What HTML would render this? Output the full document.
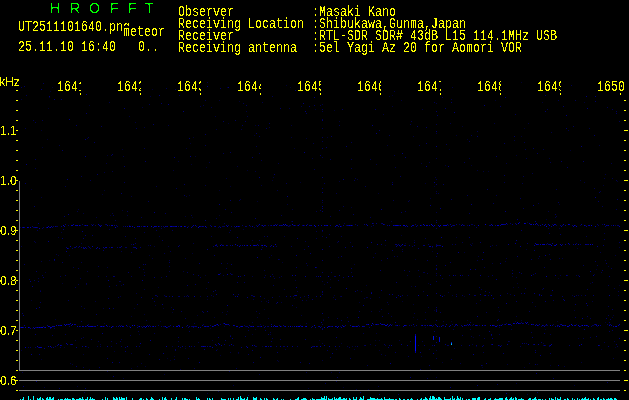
<!DOCTYPE html>
<html><head><meta charset="utf-8"><title>HROFFT</title>
<style>
html,body{margin:0;padding:0;background:#000;}
body{width:629px;height:400px;overflow:hidden;position:relative;}
.m{position:absolute;white-space:pre;color:#ffff00;font-family:"Liberation Mono",monospace;font-size:14.4px;line-height:16px;transform-origin:0 0;transform:scaleX(0.8102);filter:url(#thr);}
.s{position:absolute;white-space:pre;font-family:"Liberation Sans",sans-serif;filter:url(#thr);}
.s span{display:inline-block;}
.t{position:absolute;background:#ffff00;height:1px;}
.g{position:absolute;background:#808080;}
.k{position:absolute;background:#000;}
svg{position:absolute;left:0;top:0;}
</style></head><body>
<svg width="0" height="0" style="position:absolute"><defs><filter id="thr" x="0" y="0" width="100%" height="100%" color-interpolation-filters="sRGB"><feComponentTransfer><feFuncA type="discrete" tableValues="0 1"/></feComponentTransfer></filter></defs></svg>
<div class="s" style="left:49.9px;top:-0.5px;font-size:14px;line-height:16px;color:#00ff00"><span style="width:20px">H </span><span style="width:19px">R </span><span style="width:21px">O </span><span style="width:18px">F </span><span style="width:17px">F </span><span>T</span></div>
<div class="m" style="left:18.3px;top:19px">UT2511101640.png</div>
<div class="k" style="left:123px;top:25.5px;width:45px;height:13px"></div>
<div class="m" style="left:123.4px;top:24px">meteor</div>
<div class="m" style="left:18.3px;top:39px">25.11.10 16:40</div>
<div class="m" style="left:138.4px;top:39px">0..</div>
<div class="m" style="left:178.2px;top:4px">Observer</div>
<div class="m" style="left:312px;top:4px">:Masaki Kano</div>
<div class="m" style="left:178.2px;top:16px">Receiving Location</div>
<div class="m" style="left:312px;top:16px">:Shibukawa,Gunma,Japan</div>
<div class="m" style="left:178.2px;top:28px">Receiver</div>
<div class="m" style="left:312px;top:28px">:RTL-SDR SDR# 43dB L15 114.1MHz USB</div>
<div class="m" style="left:178.2px;top:40px">Receiving antenna</div>
<div class="m" style="left:312px;top:40px">:5el Yagi Az 20 for Aomori VOR</div>
<div class="s" style="left:-0.8px;top:75px;font-size:12px;line-height:14px;color:#ffff00">kHz</div>
<div class="m" style="left:57px;top:79px">1641</div>
<div class="k" style="left:81px;top:76px;width:12px;height:18px"></div>
<div class="t" style="left:80px;top:93px;width:1px;height:2px"></div>
<div class="m" style="left:117px;top:79px">1642</div>
<div class="k" style="left:141px;top:76px;width:12px;height:18px"></div>
<div class="t" style="left:140px;top:93px;width:1px;height:2px"></div>
<div class="m" style="left:177px;top:79px">1643</div>
<div class="k" style="left:201px;top:76px;width:12px;height:18px"></div>
<div class="t" style="left:200px;top:93px;width:1px;height:2px"></div>
<div class="m" style="left:237px;top:79px">1644</div>
<div class="k" style="left:261px;top:76px;width:12px;height:18px"></div>
<div class="t" style="left:260px;top:93px;width:1px;height:2px"></div>
<div class="m" style="left:297px;top:79px">1645</div>
<div class="k" style="left:321px;top:76px;width:12px;height:18px"></div>
<div class="t" style="left:320px;top:93px;width:1px;height:2px"></div>
<div class="m" style="left:357px;top:79px">1646</div>
<div class="k" style="left:381px;top:76px;width:12px;height:18px"></div>
<div class="t" style="left:380px;top:93px;width:1px;height:2px"></div>
<div class="m" style="left:417px;top:79px">1647</div>
<div class="k" style="left:441px;top:76px;width:12px;height:18px"></div>
<div class="t" style="left:440px;top:93px;width:1px;height:2px"></div>
<div class="m" style="left:477px;top:79px">1648</div>
<div class="k" style="left:501px;top:76px;width:12px;height:18px"></div>
<div class="t" style="left:500px;top:93px;width:1px;height:2px"></div>
<div class="m" style="left:537px;top:79px">1649</div>
<div class="k" style="left:561px;top:76px;width:12px;height:18px"></div>
<div class="t" style="left:560px;top:93px;width:1px;height:2px"></div>
<div class="m" style="left:597px;top:79px">1650</div>
<div class="t" style="left:620px;top:93px;width:1px;height:2px"></div>
<div class="s" style="left:0px;top:124px;font-size:12px;line-height:14px;color:#ffff00">1.1</div>
<div class="s" style="left:0px;top:174px;font-size:12px;line-height:14px;color:#ffff00">1.0</div>
<div class="s" style="left:0px;top:224px;font-size:12px;line-height:14px;color:#ffff00">0.9</div>
<div class="s" style="left:0px;top:274px;font-size:12px;line-height:14px;color:#ffff00">0.8</div>
<div class="s" style="left:0px;top:324px;font-size:12px;line-height:14px;color:#ffff00">0.7</div>
<div class="s" style="left:0px;top:374px;font-size:12px;line-height:14px;color:#ffff00">0.6</div>
<div class="t" style="left:16px;top:90px;width:2px"></div><div class="t" style="left:16px;top:100px;width:2px"></div><div class="t" style="left:624px;top:100px;width:2px"></div><div class="t" style="left:16px;top:110px;width:2px"></div><div class="t" style="left:624px;top:110px;width:2px"></div><div class="t" style="left:16px;top:120px;width:2px"></div><div class="t" style="left:624px;top:120px;width:2px"></div><div class="t" style="left:16px;top:130px;width:2px"></div><div class="t" style="left:624px;top:130px;width:4px"></div><div class="t" style="left:16px;top:140px;width:2px"></div><div class="t" style="left:624px;top:140px;width:2px"></div><div class="t" style="left:16px;top:150px;width:2px"></div><div class="t" style="left:624px;top:150px;width:2px"></div><div class="t" style="left:16px;top:160px;width:2px"></div><div class="t" style="left:624px;top:160px;width:2px"></div><div class="t" style="left:16px;top:170px;width:2px"></div><div class="t" style="left:624px;top:170px;width:2px"></div><div class="t" style="left:16px;top:180px;width:2px"></div><div class="t" style="left:624px;top:180px;width:4px"></div><div class="t" style="left:16px;top:190px;width:2px"></div><div class="t" style="left:624px;top:190px;width:2px"></div><div class="t" style="left:16px;top:200px;width:2px"></div><div class="t" style="left:624px;top:200px;width:2px"></div><div class="t" style="left:16px;top:210px;width:2px"></div><div class="t" style="left:624px;top:210px;width:2px"></div><div class="t" style="left:16px;top:220px;width:2px"></div><div class="t" style="left:624px;top:220px;width:2px"></div><div class="t" style="left:16px;top:230px;width:2px"></div><div class="t" style="left:624px;top:230px;width:4px"></div><div class="t" style="left:16px;top:240px;width:2px"></div><div class="t" style="left:624px;top:240px;width:2px"></div><div class="t" style="left:16px;top:250px;width:2px"></div><div class="t" style="left:624px;top:250px;width:2px"></div><div class="t" style="left:16px;top:260px;width:2px"></div><div class="t" style="left:624px;top:260px;width:2px"></div><div class="t" style="left:16px;top:270px;width:2px"></div><div class="t" style="left:624px;top:270px;width:2px"></div><div class="t" style="left:16px;top:280px;width:2px"></div><div class="t" style="left:624px;top:280px;width:4px"></div><div class="t" style="left:16px;top:290px;width:2px"></div><div class="t" style="left:624px;top:290px;width:2px"></div><div class="t" style="left:16px;top:300px;width:2px"></div><div class="t" style="left:624px;top:300px;width:2px"></div><div class="t" style="left:16px;top:310px;width:2px"></div><div class="t" style="left:624px;top:310px;width:2px"></div><div class="t" style="left:16px;top:320px;width:2px"></div><div class="t" style="left:624px;top:320px;width:2px"></div><div class="t" style="left:16px;top:330px;width:2px"></div><div class="t" style="left:624px;top:330px;width:4px"></div><div class="t" style="left:16px;top:340px;width:2px"></div><div class="t" style="left:624px;top:340px;width:2px"></div><div class="t" style="left:16px;top:350px;width:2px"></div><div class="t" style="left:624px;top:350px;width:2px"></div><div class="t" style="left:16px;top:360px;width:2px"></div><div class="t" style="left:624px;top:360px;width:2px"></div><div class="t" style="left:16px;top:370px;width:2px"></div><div class="t" style="left:624px;top:370px;width:2px"></div><div class="t" style="left:16px;top:380px;width:2px"></div><div class="t" style="left:624px;top:380px;width:4px"></div><div class="t" style="left:16px;top:390px;width:2px"></div><div class="t" style="left:624px;top:390px;width:2px"></div>
<div class="g" style="left:19px;top:181px;width:1px;height:190px"></div>
<div class="g" style="left:19px;top:370px;width:601px;height:1px"></div>
<div class="g" style="left:19px;top:380px;width:601px;height:1px"></div>
<div class="g" style="left:19px;top:390px;width:601px;height:1px"></div>
<svg width="629" height="400" viewBox="0 0 629 400" shape-rendering="crispEdges">
<rect x="207" y="82" width="1" height="1" fill="#000046"/>
<rect x="521" y="82" width="1" height="1" fill="#000032"/>
<rect x="43" y="83" width="1" height="1" fill="#00005a"/>
<rect x="286" y="85" width="1" height="1" fill="#000032"/>
<rect x="571" y="85" width="1" height="1" fill="#000050"/>
<rect x="24" y="86" width="1" height="1" fill="#000064"/>
<rect x="207" y="86" width="1" height="1" fill="#000078"/>
<rect x="21" y="87" width="1" height="1" fill="#00005a"/>
<rect x="52" y="87" width="1" height="1" fill="#000032"/>
<rect x="227" y="87" width="1" height="1" fill="#000032"/>
<rect x="228" y="87" width="1" height="1" fill="#000078"/>
<rect x="290" y="87" width="1" height="1" fill="#000032"/>
<rect x="452" y="87" width="1" height="1" fill="#000046"/>
<rect x="166" y="88" width="1" height="1" fill="#000050"/>
<rect x="220" y="88" width="1" height="1" fill="#000064"/>
<rect x="41" y="89" width="1" height="1" fill="#000078"/>
<rect x="152" y="89" width="1" height="1" fill="#000032"/>
<rect x="175" y="89" width="1" height="1" fill="#000050"/>
<rect x="295" y="90" width="1" height="1" fill="#000064"/>
<rect x="50" y="91" width="1" height="1" fill="#000032"/>
<rect x="394" y="91" width="1" height="1" fill="#000046"/>
<rect x="86" y="94" width="1" height="1" fill="#000078"/>
<rect x="26" y="95" width="1" height="1" fill="#000050"/>
<rect x="159" y="95" width="1" height="1" fill="#000078"/>
<rect x="179" y="95" width="1" height="1" fill="#000046"/>
<rect x="392" y="95" width="1" height="1" fill="#000032"/>
<rect x="545" y="95" width="1" height="1" fill="#00005a"/>
<rect x="49" y="96" width="1" height="1" fill="#000078"/>
<rect x="150" y="96" width="1" height="1" fill="#00003c"/>
<rect x="272" y="96" width="1" height="1" fill="#000050"/>
<rect x="389" y="96" width="1" height="1" fill="#000032"/>
<rect x="586" y="96" width="1" height="1" fill="#000078"/>
<rect x="595" y="96" width="1" height="1" fill="#000078"/>
<rect x="49" y="97" width="1" height="1" fill="#000032"/>
<rect x="314" y="97" width="1" height="1" fill="#000078"/>
<rect x="442" y="97" width="1" height="1" fill="#000050"/>
<rect x="505" y="97" width="1" height="1" fill="#000064"/>
<rect x="21" y="99" width="1" height="1" fill="#00003c"/>
<rect x="54" y="99" width="1" height="1" fill="#000078"/>
<rect x="61" y="99" width="1" height="1" fill="#000078"/>
<rect x="451" y="99" width="1" height="1" fill="#000046"/>
<rect x="205" y="100" width="1" height="1" fill="#000050"/>
<rect x="219" y="100" width="1" height="1" fill="#00003c"/>
<rect x="401" y="100" width="1" height="1" fill="#00003c"/>
<rect x="495" y="100" width="1" height="1" fill="#000032"/>
<rect x="558" y="100" width="1" height="1" fill="#000050"/>
<rect x="575" y="100" width="1" height="1" fill="#00005a"/>
<rect x="239" y="101" width="1" height="1" fill="#000032"/>
<rect x="595" y="101" width="1" height="1" fill="#000064"/>
<rect x="109" y="102" width="1" height="1" fill="#000050"/>
<rect x="262" y="102" width="1" height="1" fill="#000046"/>
<rect x="434" y="102" width="1" height="1" fill="#000050"/>
<rect x="451" y="102" width="1" height="1" fill="#000064"/>
<rect x="542" y="102" width="1" height="1" fill="#000032"/>
<rect x="584" y="102" width="1" height="1" fill="#000032"/>
<rect x="161" y="103" width="1" height="1" fill="#000064"/>
<rect x="243" y="103" width="1" height="1" fill="#000050"/>
<rect x="303" y="103" width="1" height="1" fill="#000078"/>
<rect x="436" y="103" width="1" height="1" fill="#00003f"/>
<rect x="149" y="104" width="1" height="1" fill="#000050"/>
<rect x="168" y="104" width="1" height="1" fill="#000078"/>
<rect x="322" y="104" width="1" height="1" fill="#000044"/>
<rect x="89" y="105" width="1" height="1" fill="#000032"/>
<rect x="203" y="105" width="1" height="1" fill="#000046"/>
<rect x="246" y="105" width="1" height="1" fill="#00005a"/>
<rect x="314" y="105" width="1" height="1" fill="#00005a"/>
<rect x="320" y="105" width="1" height="1" fill="#000050"/>
<rect x="484" y="105" width="1" height="1" fill="#000078"/>
<rect x="200" y="106" width="1" height="1" fill="#000046"/>
<rect x="301" y="106" width="1" height="1" fill="#000046"/>
<rect x="309" y="106" width="1" height="1" fill="#000064"/>
<rect x="392" y="106" width="1" height="1" fill="#00003c"/>
<rect x="500" y="106" width="1" height="1" fill="#00005a"/>
<rect x="563" y="106" width="1" height="1" fill="#000064"/>
<rect x="142" y="107" width="1" height="1" fill="#00003c"/>
<rect x="211" y="107" width="1" height="1" fill="#000046"/>
<rect x="607" y="107" width="1" height="1" fill="#000050"/>
<rect x="48" y="108" width="1" height="1" fill="#000032"/>
<rect x="124" y="108" width="1" height="1" fill="#000078"/>
<rect x="280" y="108" width="1" height="1" fill="#000064"/>
<rect x="289" y="108" width="1" height="1" fill="#000046"/>
<rect x="445" y="108" width="1" height="1" fill="#000064"/>
<rect x="587" y="108" width="1" height="1" fill="#000078"/>
<rect x="315" y="109" width="1" height="1" fill="#000032"/>
<rect x="322" y="109" width="1" height="1" fill="#000061"/>
<rect x="342" y="109" width="1" height="1" fill="#00005a"/>
<rect x="375" y="109" width="1" height="1" fill="#000078"/>
<rect x="422" y="109" width="1" height="1" fill="#00003c"/>
<rect x="547" y="109" width="1" height="1" fill="#000050"/>
<rect x="612" y="109" width="1" height="1" fill="#000050"/>
<rect x="334" y="110" width="1" height="1" fill="#000032"/>
<rect x="183" y="111" width="1" height="1" fill="#000078"/>
<rect x="246" y="111" width="1" height="1" fill="#00003c"/>
<rect x="305" y="111" width="1" height="1" fill="#000078"/>
<rect x="322" y="111" width="1" height="1" fill="#000047"/>
<rect x="436" y="111" width="1" height="1" fill="#000061"/>
<rect x="545" y="111" width="1" height="1" fill="#000064"/>
<rect x="616" y="111" width="1" height="1" fill="#00005a"/>
<rect x="454" y="112" width="1" height="1" fill="#000078"/>
<rect x="86" y="113" width="1" height="1" fill="#000064"/>
<rect x="306" y="113" width="1" height="1" fill="#00005a"/>
<rect x="616" y="113" width="1" height="1" fill="#00005a"/>
<rect x="383" y="114" width="1" height="1" fill="#00003c"/>
<rect x="515" y="114" width="1" height="1" fill="#000050"/>
<rect x="437" y="115" width="1" height="1" fill="#000064"/>
<rect x="566" y="115" width="1" height="1" fill="#000078"/>
<rect x="129" y="116" width="1" height="1" fill="#00003c"/>
<rect x="215" y="116" width="1" height="1" fill="#00003c"/>
<rect x="247" y="116" width="1" height="1" fill="#000046"/>
<rect x="69" y="119" width="1" height="1" fill="#000078"/>
<rect x="322" y="119" width="1" height="1" fill="#000056"/>
<rect x="33" y="120" width="1" height="1" fill="#000050"/>
<rect x="42" y="120" width="1" height="1" fill="#000050"/>
<rect x="235" y="120" width="1" height="1" fill="#00005a"/>
<rect x="322" y="120" width="1" height="1" fill="#000070"/>
<rect x="223" y="121" width="1" height="1" fill="#00005a"/>
<rect x="245" y="121" width="1" height="1" fill="#00005a"/>
<rect x="339" y="121" width="1" height="1" fill="#00003c"/>
<rect x="411" y="121" width="1" height="1" fill="#000050"/>
<rect x="619" y="121" width="1" height="1" fill="#00005a"/>
<rect x="35" y="122" width="1" height="1" fill="#000050"/>
<rect x="135" y="122" width="1" height="1" fill="#00003c"/>
<rect x="228" y="123" width="1" height="1" fill="#000032"/>
<rect x="269" y="123" width="1" height="1" fill="#00005a"/>
<rect x="450" y="123" width="1" height="1" fill="#000046"/>
<rect x="494" y="123" width="1" height="1" fill="#00003c"/>
<rect x="528" y="123" width="1" height="1" fill="#00003c"/>
<rect x="153" y="124" width="1" height="1" fill="#000064"/>
<rect x="410" y="124" width="1" height="1" fill="#000050"/>
<rect x="436" y="124" width="1" height="1" fill="#000048"/>
<rect x="76" y="125" width="1" height="1" fill="#000064"/>
<rect x="168" y="125" width="1" height="1" fill="#000046"/>
<rect x="242" y="125" width="1" height="1" fill="#00005a"/>
<rect x="255" y="125" width="1" height="1" fill="#000032"/>
<rect x="258" y="125" width="1" height="1" fill="#00005a"/>
<rect x="291" y="125" width="1" height="1" fill="#00003c"/>
<rect x="339" y="125" width="1" height="1" fill="#000050"/>
<rect x="372" y="125" width="1" height="1" fill="#000078"/>
<rect x="101" y="126" width="1" height="1" fill="#00005a"/>
<rect x="417" y="126" width="1" height="1" fill="#000064"/>
<rect x="462" y="126" width="1" height="1" fill="#000032"/>
<rect x="573" y="126" width="1" height="1" fill="#00005a"/>
<rect x="144" y="127" width="1" height="1" fill="#00003c"/>
<rect x="269" y="127" width="1" height="1" fill="#00003c"/>
<rect x="426" y="127" width="1" height="1" fill="#00005a"/>
<rect x="25" y="128" width="1" height="1" fill="#000046"/>
<rect x="136" y="128" width="1" height="1" fill="#000050"/>
<rect x="266" y="128" width="1" height="1" fill="#00005a"/>
<rect x="322" y="128" width="1" height="1" fill="#000052"/>
<rect x="524" y="128" width="1" height="1" fill="#000032"/>
<rect x="566" y="128" width="1" height="1" fill="#000064"/>
<rect x="589" y="128" width="1" height="1" fill="#000046"/>
<rect x="216" y="129" width="1" height="1" fill="#00003c"/>
<rect x="241" y="129" width="1" height="1" fill="#000046"/>
<rect x="41" y="130" width="1" height="1" fill="#000032"/>
<rect x="379" y="130" width="1" height="1" fill="#000064"/>
<rect x="568" y="130" width="1" height="1" fill="#000046"/>
<rect x="436" y="131" width="1" height="1" fill="#00006d"/>
<rect x="477" y="131" width="1" height="1" fill="#000050"/>
<rect x="551" y="132" width="1" height="1" fill="#000046"/>
<rect x="256" y="133" width="1" height="1" fill="#000064"/>
<rect x="376" y="133" width="1" height="1" fill="#000078"/>
<rect x="436" y="133" width="1" height="1" fill="#00003c"/>
<rect x="205" y="134" width="1" height="1" fill="#00005a"/>
<rect x="254" y="135" width="1" height="1" fill="#000032"/>
<rect x="389" y="135" width="1" height="1" fill="#000050"/>
<rect x="456" y="135" width="1" height="1" fill="#000032"/>
<rect x="471" y="135" width="1" height="1" fill="#000050"/>
<rect x="594" y="135" width="1" height="1" fill="#000064"/>
<rect x="259" y="136" width="1" height="1" fill="#000050"/>
<rect x="331" y="136" width="1" height="1" fill="#00005a"/>
<rect x="413" y="136" width="1" height="1" fill="#00003c"/>
<rect x="477" y="136" width="1" height="1" fill="#000064"/>
<rect x="514" y="136" width="1" height="1" fill="#00005a"/>
<rect x="521" y="136" width="1" height="1" fill="#000032"/>
<rect x="88" y="137" width="1" height="1" fill="#000050"/>
<rect x="193" y="137" width="1" height="1" fill="#000032"/>
<rect x="291" y="137" width="1" height="1" fill="#00003c"/>
<rect x="322" y="137" width="1" height="1" fill="#00005a"/>
<rect x="327" y="137" width="1" height="1" fill="#000032"/>
<rect x="87" y="138" width="1" height="1" fill="#00003c"/>
<rect x="189" y="138" width="1" height="1" fill="#000064"/>
<rect x="306" y="138" width="1" height="1" fill="#000032"/>
<rect x="47" y="139" width="1" height="1" fill="#000032"/>
<rect x="85" y="139" width="1" height="1" fill="#000078"/>
<rect x="467" y="139" width="1" height="1" fill="#000032"/>
<rect x="514" y="140" width="1" height="1" fill="#00003c"/>
<rect x="322" y="141" width="1" height="1" fill="#00004d"/>
<rect x="469" y="141" width="1" height="1" fill="#00005a"/>
<rect x="94" y="142" width="1" height="1" fill="#00005a"/>
<rect x="351" y="142" width="1" height="1" fill="#000050"/>
<rect x="524" y="142" width="1" height="1" fill="#000046"/>
<rect x="190" y="143" width="1" height="1" fill="#000032"/>
<rect x="313" y="143" width="1" height="1" fill="#000046"/>
<rect x="426" y="143" width="1" height="1" fill="#000064"/>
<rect x="504" y="143" width="1" height="1" fill="#00005a"/>
<rect x="446" y="144" width="1" height="1" fill="#000050"/>
<rect x="59" y="145" width="1" height="1" fill="#000046"/>
<rect x="205" y="145" width="1" height="1" fill="#000050"/>
<rect x="387" y="145" width="1" height="1" fill="#00003c"/>
<rect x="419" y="145" width="1" height="1" fill="#000046"/>
<rect x="599" y="145" width="1" height="1" fill="#00003c"/>
<rect x="256" y="146" width="1" height="1" fill="#000046"/>
<rect x="346" y="146" width="1" height="1" fill="#000064"/>
<rect x="436" y="146" width="1" height="1" fill="#000075"/>
<rect x="581" y="146" width="1" height="1" fill="#000078"/>
<rect x="42" y="147" width="1" height="1" fill="#000032"/>
<rect x="326" y="147" width="1" height="1" fill="#00005a"/>
<rect x="144" y="148" width="1" height="1" fill="#000050"/>
<rect x="186" y="148" width="1" height="1" fill="#000032"/>
<rect x="294" y="148" width="1" height="1" fill="#000032"/>
<rect x="322" y="148" width="1" height="1" fill="#000064"/>
<rect x="533" y="148" width="1" height="1" fill="#00005a"/>
<rect x="122" y="149" width="1" height="1" fill="#000032"/>
<rect x="449" y="149" width="1" height="1" fill="#000032"/>
<rect x="525" y="149" width="1" height="1" fill="#000050"/>
<rect x="543" y="149" width="1" height="1" fill="#000046"/>
<rect x="62" y="150" width="1" height="1" fill="#000064"/>
<rect x="570" y="150" width="1" height="1" fill="#000032"/>
<rect x="230" y="152" width="1" height="1" fill="#00005a"/>
<rect x="304" y="152" width="1" height="1" fill="#000078"/>
<rect x="223" y="153" width="1" height="1" fill="#000050"/>
<rect x="259" y="153" width="1" height="1" fill="#000050"/>
<rect x="402" y="153" width="1" height="1" fill="#000078"/>
<rect x="537" y="153" width="1" height="1" fill="#00005a"/>
<rect x="112" y="154" width="1" height="1" fill="#000064"/>
<rect x="107" y="155" width="1" height="1" fill="#000032"/>
<rect x="111" y="155" width="1" height="1" fill="#000050"/>
<rect x="320" y="155" width="1" height="1" fill="#000064"/>
<rect x="394" y="155" width="1" height="1" fill="#000046"/>
<rect x="516" y="155" width="1" height="1" fill="#000032"/>
<rect x="85" y="156" width="1" height="1" fill="#000078"/>
<rect x="123" y="156" width="1" height="1" fill="#000046"/>
<rect x="190" y="156" width="1" height="1" fill="#000078"/>
<rect x="195" y="156" width="1" height="1" fill="#000032"/>
<rect x="496" y="156" width="1" height="1" fill="#00005a"/>
<rect x="174" y="157" width="1" height="1" fill="#000078"/>
<rect x="252" y="157" width="1" height="1" fill="#000064"/>
<rect x="322" y="157" width="1" height="1" fill="#000049"/>
<rect x="405" y="157" width="1" height="1" fill="#000064"/>
<rect x="312" y="158" width="1" height="1" fill="#00003c"/>
<rect x="436" y="158" width="1" height="1" fill="#000047"/>
<rect x="469" y="158" width="1" height="1" fill="#000046"/>
<rect x="526" y="158" width="1" height="1" fill="#000046"/>
<rect x="549" y="158" width="1" height="1" fill="#00003c"/>
<rect x="35" y="159" width="1" height="1" fill="#00005a"/>
<rect x="330" y="159" width="1" height="1" fill="#00005a"/>
<rect x="351" y="159" width="1" height="1" fill="#000050"/>
<rect x="370" y="159" width="1" height="1" fill="#000050"/>
<rect x="261" y="160" width="1" height="1" fill="#000046"/>
<rect x="145" y="161" width="1" height="1" fill="#000064"/>
<rect x="178" y="161" width="1" height="1" fill="#00003c"/>
<rect x="561" y="161" width="1" height="1" fill="#000064"/>
<rect x="583" y="161" width="1" height="1" fill="#000064"/>
<rect x="209" y="162" width="1" height="1" fill="#000046"/>
<rect x="429" y="162" width="1" height="1" fill="#000046"/>
<rect x="464" y="162" width="1" height="1" fill="#000050"/>
<rect x="550" y="162" width="1" height="1" fill="#000050"/>
<rect x="106" y="163" width="1" height="1" fill="#00003c"/>
<rect x="278" y="163" width="1" height="1" fill="#000046"/>
<rect x="421" y="163" width="1" height="1" fill="#00003c"/>
<rect x="506" y="163" width="1" height="1" fill="#00003c"/>
<rect x="611" y="163" width="1" height="1" fill="#000046"/>
<rect x="26" y="164" width="1" height="1" fill="#000078"/>
<rect x="191" y="164" width="1" height="1" fill="#000032"/>
<rect x="376" y="164" width="1" height="1" fill="#00003c"/>
<rect x="445" y="165" width="1" height="1" fill="#000032"/>
<rect x="471" y="165" width="1" height="1" fill="#000032"/>
<rect x="124" y="166" width="1" height="1" fill="#000064"/>
<rect x="237" y="166" width="1" height="1" fill="#00003c"/>
<rect x="426" y="166" width="1" height="1" fill="#000078"/>
<rect x="448" y="166" width="1" height="1" fill="#000078"/>
<rect x="206" y="167" width="1" height="1" fill="#000032"/>
<rect x="395" y="167" width="1" height="1" fill="#000046"/>
<rect x="567" y="167" width="1" height="1" fill="#00005a"/>
<rect x="35" y="168" width="1" height="1" fill="#000046"/>
<rect x="351" y="168" width="1" height="1" fill="#000050"/>
<rect x="314" y="169" width="1" height="1" fill="#000050"/>
<rect x="173" y="170" width="1" height="1" fill="#00003c"/>
<rect x="247" y="170" width="1" height="1" fill="#000032"/>
<rect x="477" y="170" width="1" height="1" fill="#00003c"/>
<rect x="112" y="171" width="1" height="1" fill="#000046"/>
<rect x="255" y="171" width="1" height="1" fill="#00003c"/>
<rect x="483" y="171" width="1" height="1" fill="#00003c"/>
<rect x="488" y="171" width="1" height="1" fill="#000032"/>
<rect x="104" y="172" width="1" height="1" fill="#00003c"/>
<rect x="532" y="173" width="1" height="1" fill="#000046"/>
<rect x="97" y="174" width="1" height="1" fill="#000064"/>
<rect x="274" y="174" width="1" height="1" fill="#000064"/>
<rect x="605" y="174" width="1" height="1" fill="#00003c"/>
<rect x="504" y="175" width="1" height="1" fill="#00005a"/>
<rect x="81" y="176" width="1" height="1" fill="#000050"/>
<rect x="400" y="176" width="1" height="1" fill="#00005a"/>
<rect x="523" y="176" width="1" height="1" fill="#000050"/>
<rect x="259" y="177" width="1" height="1" fill="#000078"/>
<rect x="273" y="177" width="1" height="1" fill="#00003c"/>
<rect x="322" y="177" width="1" height="1" fill="#000068"/>
<rect x="435" y="177" width="1" height="1" fill="#00003c"/>
<rect x="226" y="178" width="1" height="1" fill="#00003c"/>
<rect x="355" y="178" width="1" height="1" fill="#000046"/>
<rect x="604" y="178" width="1" height="1" fill="#000046"/>
<rect x="612" y="178" width="1" height="1" fill="#000046"/>
<rect x="67" y="179" width="1" height="1" fill="#000078"/>
<rect x="343" y="179" width="1" height="1" fill="#000078"/>
<rect x="357" y="179" width="1" height="1" fill="#00003c"/>
<rect x="436" y="179" width="1" height="1" fill="#000048"/>
<rect x="90" y="180" width="1" height="1" fill="#000050"/>
<rect x="272" y="180" width="1" height="1" fill="#000032"/>
<rect x="354" y="180" width="1" height="1" fill="#000050"/>
<rect x="580" y="180" width="1" height="1" fill="#00003c"/>
<rect x="616" y="180" width="1" height="1" fill="#000050"/>
<rect x="339" y="181" width="1" height="1" fill="#00003c"/>
<rect x="617" y="181" width="1" height="1" fill="#000032"/>
<rect x="124" y="182" width="1" height="1" fill="#000050"/>
<rect x="300" y="182" width="1" height="1" fill="#000032"/>
<rect x="392" y="182" width="1" height="1" fill="#000050"/>
<rect x="434" y="182" width="1" height="1" fill="#000078"/>
<rect x="504" y="182" width="1" height="1" fill="#000046"/>
<rect x="584" y="182" width="1" height="1" fill="#00003c"/>
<rect x="25" y="183" width="1" height="1" fill="#000064"/>
<rect x="286" y="183" width="1" height="1" fill="#000050"/>
<rect x="324" y="183" width="1" height="1" fill="#000050"/>
<rect x="425" y="183" width="1" height="1" fill="#000032"/>
<rect x="522" y="183" width="1" height="1" fill="#000046"/>
<rect x="184" y="184" width="1" height="1" fill="#00005a"/>
<rect x="392" y="184" width="1" height="1" fill="#000078"/>
<rect x="436" y="184" width="1" height="1" fill="#000067"/>
<rect x="443" y="184" width="1" height="1" fill="#00005a"/>
<rect x="205" y="185" width="1" height="1" fill="#000046"/>
<rect x="261" y="185" width="1" height="1" fill="#00003c"/>
<rect x="603" y="185" width="1" height="1" fill="#000032"/>
<rect x="65" y="186" width="1" height="1" fill="#000046"/>
<rect x="156" y="186" width="1" height="1" fill="#000046"/>
<rect x="230" y="186" width="1" height="1" fill="#000032"/>
<rect x="365" y="186" width="1" height="1" fill="#000050"/>
<rect x="434" y="186" width="1" height="1" fill="#000032"/>
<rect x="176" y="188" width="1" height="1" fill="#000050"/>
<rect x="322" y="188" width="1" height="1" fill="#00005a"/>
<rect x="594" y="188" width="1" height="1" fill="#000050"/>
<rect x="31" y="189" width="1" height="1" fill="#000032"/>
<rect x="487" y="189" width="1" height="1" fill="#000064"/>
<rect x="556" y="189" width="1" height="1" fill="#000050"/>
<rect x="104" y="190" width="1" height="1" fill="#000032"/>
<rect x="219" y="190" width="1" height="1" fill="#000032"/>
<rect x="277" y="190" width="1" height="1" fill="#000046"/>
<rect x="436" y="191" width="1" height="1" fill="#000044"/>
<rect x="600" y="191" width="1" height="1" fill="#000046"/>
<rect x="322" y="192" width="1" height="1" fill="#000077"/>
<rect x="599" y="192" width="1" height="1" fill="#000064"/>
<rect x="121" y="193" width="1" height="1" fill="#000064"/>
<rect x="336" y="193" width="1" height="1" fill="#000046"/>
<rect x="378" y="193" width="1" height="1" fill="#000032"/>
<rect x="436" y="193" width="1" height="1" fill="#000045"/>
<rect x="438" y="193" width="1" height="1" fill="#000046"/>
<rect x="102" y="194" width="1" height="1" fill="#000032"/>
<rect x="184" y="195" width="1" height="1" fill="#00005a"/>
<rect x="189" y="195" width="1" height="1" fill="#000032"/>
<rect x="467" y="195" width="1" height="1" fill="#00005a"/>
<rect x="496" y="195" width="1" height="1" fill="#000046"/>
<rect x="131" y="196" width="1" height="1" fill="#00003c"/>
<rect x="186" y="196" width="1" height="1" fill="#00003c"/>
<rect x="287" y="196" width="1" height="1" fill="#000078"/>
<rect x="41" y="197" width="1" height="1" fill="#00003c"/>
<rect x="595" y="197" width="1" height="1" fill="#000078"/>
<rect x="430" y="198" width="1" height="1" fill="#00003c"/>
<rect x="520" y="198" width="1" height="1" fill="#00005a"/>
<rect x="240" y="199" width="1" height="1" fill="#000046"/>
<rect x="451" y="199" width="1" height="1" fill="#000064"/>
<rect x="617" y="199" width="1" height="1" fill="#000064"/>
<rect x="230" y="200" width="1" height="1" fill="#000064"/>
<rect x="239" y="200" width="1" height="1" fill="#000050"/>
<rect x="322" y="200" width="1" height="1" fill="#00005b"/>
<rect x="393" y="200" width="1" height="1" fill="#000050"/>
<rect x="409" y="200" width="1" height="1" fill="#00003c"/>
<rect x="148" y="201" width="1" height="1" fill="#00005a"/>
<rect x="257" y="201" width="1" height="1" fill="#000032"/>
<rect x="408" y="201" width="1" height="1" fill="#000050"/>
<rect x="598" y="201" width="1" height="1" fill="#000064"/>
<rect x="322" y="202" width="1" height="1" fill="#00003f"/>
<rect x="558" y="202" width="1" height="1" fill="#00005a"/>
<rect x="493" y="203" width="1" height="1" fill="#00005a"/>
<rect x="538" y="203" width="1" height="1" fill="#000046"/>
<rect x="219" y="204" width="1" height="1" fill="#000078"/>
<rect x="287" y="204" width="1" height="1" fill="#00003c"/>
<rect x="471" y="204" width="1" height="1" fill="#000078"/>
<rect x="559" y="204" width="1" height="1" fill="#000032"/>
<rect x="430" y="205" width="1" height="1" fill="#000078"/>
<rect x="533" y="205" width="1" height="1" fill="#000078"/>
<rect x="34" y="206" width="1" height="1" fill="#000064"/>
<rect x="322" y="206" width="1" height="1" fill="#000076"/>
<rect x="343" y="206" width="1" height="1" fill="#000050"/>
<rect x="602" y="206" width="1" height="1" fill="#000050"/>
<rect x="351" y="207" width="1" height="1" fill="#000032"/>
<rect x="322" y="208" width="1" height="1" fill="#000069"/>
<rect x="440" y="208" width="1" height="1" fill="#000078"/>
<rect x="523" y="208" width="1" height="1" fill="#000050"/>
<rect x="78" y="209" width="1" height="1" fill="#00003c"/>
<rect x="225" y="209" width="1" height="1" fill="#00005a"/>
<rect x="292" y="209" width="1" height="1" fill="#00003c"/>
<rect x="381" y="209" width="1" height="1" fill="#000078"/>
<rect x="616" y="209" width="1" height="1" fill="#000050"/>
<rect x="122" y="210" width="1" height="1" fill="#000032"/>
<rect x="320" y="210" width="1" height="1" fill="#00005a"/>
<rect x="339" y="210" width="1" height="1" fill="#00005a"/>
<rect x="77" y="211" width="1" height="1" fill="#000046"/>
<rect x="127" y="211" width="1" height="1" fill="#00005a"/>
<rect x="316" y="211" width="1" height="1" fill="#000046"/>
<rect x="322" y="211" width="1" height="1" fill="#00006b"/>
<rect x="405" y="211" width="1" height="1" fill="#000050"/>
<rect x="505" y="211" width="1" height="1" fill="#000078"/>
<rect x="548" y="211" width="1" height="1" fill="#000046"/>
<rect x="154" y="212" width="1" height="1" fill="#000078"/>
<rect x="231" y="212" width="1" height="1" fill="#00005a"/>
<rect x="401" y="212" width="1" height="1" fill="#000064"/>
<rect x="436" y="212" width="1" height="1" fill="#000043"/>
<rect x="83" y="213" width="1" height="1" fill="#00003c"/>
<rect x="112" y="213" width="1" height="1" fill="#000046"/>
<rect x="165" y="213" width="1" height="1" fill="#00005a"/>
<rect x="469" y="213" width="1" height="1" fill="#00005a"/>
<rect x="68" y="214" width="1" height="1" fill="#000078"/>
<rect x="353" y="214" width="1" height="1" fill="#00005a"/>
<rect x="555" y="214" width="1" height="1" fill="#00005a"/>
<rect x="110" y="215" width="1" height="1" fill="#000032"/>
<rect x="113" y="215" width="1" height="1" fill="#00005a"/>
<rect x="127" y="215" width="1" height="1" fill="#00003c"/>
<rect x="191" y="215" width="1" height="1" fill="#000050"/>
<rect x="219" y="215" width="1" height="1" fill="#000032"/>
<rect x="281" y="215" width="1" height="1" fill="#000050"/>
<rect x="64" y="216" width="1" height="1" fill="#000064"/>
<rect x="185" y="216" width="1" height="1" fill="#000032"/>
<rect x="330" y="216" width="1" height="1" fill="#000050"/>
<rect x="556" y="216" width="1" height="1" fill="#000046"/>
<rect x="96" y="217" width="1" height="1" fill="#00003c"/>
<rect x="141" y="217" width="1" height="1" fill="#000050"/>
<rect x="192" y="217" width="1" height="1" fill="#000032"/>
<rect x="370" y="217" width="1" height="1" fill="#000050"/>
<rect x="555" y="217" width="1" height="1" fill="#000046"/>
<rect x="216" y="218" width="1" height="1" fill="#000046"/>
<rect x="255" y="218" width="1" height="1" fill="#000064"/>
<rect x="517" y="219" width="1" height="1" fill="#000064"/>
<rect x="546" y="219" width="1" height="1" fill="#000032"/>
<rect x="115" y="220" width="1" height="1" fill="#000050"/>
<rect x="205" y="220" width="1" height="1" fill="#000078"/>
<rect x="436" y="220" width="1" height="1" fill="#000067"/>
<rect x="291" y="221" width="1" height="1" fill="#000032"/>
<rect x="292" y="221" width="1" height="1" fill="#000064"/>
<rect x="391" y="221" width="1" height="1" fill="#000046"/>
<rect x="535" y="221" width="1" height="1" fill="#000078"/>
<rect x="436" y="222" width="1" height="1" fill="#000069"/>
<rect x="519" y="222" width="1" height="1" fill="#000095"/>
<rect x="527" y="222" width="1" height="1" fill="#00003c"/>
<rect x="38" y="223" width="1" height="1" fill="#000064"/>
<rect x="224" y="223" width="1" height="1" fill="#000050"/>
<rect x="344" y="223" width="1" height="1" fill="#000046"/>
<rect x="372" y="223" width="1" height="1" fill="#00008a"/>
<rect x="373" y="223" width="1" height="1" fill="#000052"/>
<rect x="376" y="223" width="1" height="1" fill="#000072"/>
<rect x="381" y="223" width="1" height="1" fill="#00005c"/>
<rect x="382" y="223" width="1" height="1" fill="#00006d"/>
<rect x="506" y="223" width="1" height="1" fill="#0000a8"/>
<rect x="510" y="223" width="1" height="1" fill="#000065"/>
<rect x="515" y="223" width="1" height="1" fill="#000065"/>
<rect x="518" y="223" width="1" height="1" fill="#0000c3"/>
<rect x="524" y="223" width="1" height="1" fill="#0000b9"/>
<rect x="525" y="223" width="1" height="1" fill="#0000a1"/>
<rect x="529" y="223" width="1" height="1" fill="#000098"/>
<rect x="536" y="223" width="1" height="1" fill="#0000b1"/>
<rect x="65" y="224" width="1" height="1" fill="#000074"/>
<rect x="73" y="224" width="1" height="1" fill="#000089"/>
<rect x="82" y="224" width="1" height="1" fill="#00005e"/>
<rect x="91" y="224" width="1" height="1" fill="#00004f"/>
<rect x="93" y="224" width="1" height="1" fill="#000051"/>
<rect x="98" y="224" width="1" height="1" fill="#0000a2"/>
<rect x="105" y="224" width="1" height="1" fill="#00004c"/>
<rect x="106" y="224" width="1" height="1" fill="#000064"/>
<rect x="259" y="224" width="1" height="1" fill="#000095"/>
<rect x="275" y="224" width="1" height="1" fill="#000075"/>
<rect x="277" y="224" width="1" height="1" fill="#000058"/>
<rect x="283" y="224" width="1" height="1" fill="#0000bf"/>
<rect x="285" y="224" width="1" height="1" fill="#0000c3"/>
<rect x="292" y="224" width="1" height="1" fill="#0000b4"/>
<rect x="299" y="224" width="1" height="1" fill="#00005d"/>
<rect x="307" y="224" width="1" height="1" fill="#000064"/>
<rect x="339" y="224" width="1" height="1" fill="#000075"/>
<rect x="355" y="224" width="1" height="1" fill="#000058"/>
<rect x="364" y="224" width="1" height="1" fill="#00006b"/>
<rect x="366" y="224" width="1" height="1" fill="#000083"/>
<rect x="383" y="224" width="1" height="1" fill="#000094"/>
<rect x="384" y="224" width="1" height="1" fill="#000061"/>
<rect x="415" y="224" width="1" height="1" fill="#00006c"/>
<rect x="423" y="224" width="1" height="1" fill="#0000ae"/>
<rect x="431" y="224" width="1" height="1" fill="#0000c1"/>
<rect x="447" y="224" width="1" height="1" fill="#000079"/>
<rect x="450" y="224" width="1" height="1" fill="#000084"/>
<rect x="456" y="224" width="1" height="1" fill="#00006f"/>
<rect x="459" y="224" width="1" height="1" fill="#00004e"/>
<rect x="462" y="224" width="1" height="1" fill="#00007e"/>
<rect x="471" y="224" width="1" height="1" fill="#000059"/>
<rect x="472" y="224" width="1" height="1" fill="#000054"/>
<rect x="485" y="224" width="1" height="1" fill="#0000b5"/>
<rect x="491" y="224" width="1" height="1" fill="#0000a3"/>
<rect x="501" y="224" width="1" height="1" fill="#00009f"/>
<rect x="502" y="224" width="1" height="1" fill="#0000a5"/>
<rect x="503" y="224" width="1" height="1" fill="#00008d"/>
<rect x="504" y="224" width="1" height="1" fill="#00007c"/>
<rect x="505" y="224" width="1" height="1" fill="#000082"/>
<rect x="507" y="224" width="1" height="1" fill="#00004c"/>
<rect x="512" y="224" width="1" height="1" fill="#000076"/>
<rect x="516" y="224" width="1" height="1" fill="#00007b"/>
<rect x="530" y="224" width="1" height="1" fill="#000097"/>
<rect x="531" y="224" width="1" height="1" fill="#0000b1"/>
<rect x="533" y="224" width="1" height="1" fill="#0000af"/>
<rect x="535" y="224" width="1" height="1" fill="#00009d"/>
<rect x="537" y="224" width="1" height="1" fill="#00007e"/>
<rect x="542" y="224" width="1" height="1" fill="#000088"/>
<rect x="545" y="224" width="1" height="1" fill="#000099"/>
<rect x="548" y="224" width="1" height="1" fill="#00008b"/>
<rect x="552" y="224" width="1" height="1" fill="#00004e"/>
<rect x="554" y="224" width="1" height="1" fill="#0000a0"/>
<rect x="555" y="224" width="1" height="1" fill="#000090"/>
<rect x="563" y="224" width="1" height="1" fill="#0000a2"/>
<rect x="568" y="224" width="1" height="1" fill="#0000bf"/>
<rect x="569" y="224" width="1" height="1" fill="#0000a0"/>
<rect x="581" y="224" width="1" height="1" fill="#000090"/>
<rect x="597" y="224" width="1" height="1" fill="#000061"/>
<rect x="602" y="224" width="1" height="1" fill="#000056"/>
<rect x="604" y="224" width="1" height="1" fill="#00009e"/>
<rect x="63" y="225" width="1" height="1" fill="#0000b9"/>
<rect x="68" y="225" width="1" height="1" fill="#000066"/>
<rect x="71" y="225" width="1" height="1" fill="#0000ad"/>
<rect x="72" y="225" width="1" height="1" fill="#0000b4"/>
<rect x="75" y="225" width="1" height="1" fill="#000099"/>
<rect x="76" y="225" width="1" height="1" fill="#000095"/>
<rect x="77" y="225" width="1" height="1" fill="#0000b7"/>
<rect x="79" y="225" width="1" height="1" fill="#0000b9"/>
<rect x="80" y="225" width="1" height="1" fill="#00005c"/>
<rect x="84" y="225" width="1" height="1" fill="#00005e"/>
<rect x="85" y="225" width="1" height="1" fill="#0000ab"/>
<rect x="86" y="225" width="1" height="1" fill="#000056"/>
<rect x="87" y="225" width="1" height="1" fill="#0000a0"/>
<rect x="92" y="225" width="1" height="1" fill="#000094"/>
<rect x="95" y="225" width="1" height="1" fill="#00005a"/>
<rect x="99" y="225" width="1" height="1" fill="#000090"/>
<rect x="100" y="225" width="1" height="1" fill="#000032"/>
<rect x="101" y="225" width="1" height="1" fill="#000077"/>
<rect x="107" y="225" width="1" height="1" fill="#000092"/>
<rect x="109" y="225" width="1" height="1" fill="#000050"/>
<rect x="111" y="225" width="1" height="1" fill="#0000a3"/>
<rect x="112" y="225" width="1" height="1" fill="#0000aa"/>
<rect x="114" y="225" width="1" height="1" fill="#000080"/>
<rect x="116" y="225" width="1" height="1" fill="#000069"/>
<rect x="129" y="225" width="1" height="1" fill="#00003c"/>
<rect x="193" y="225" width="1" height="1" fill="#000094"/>
<rect x="195" y="225" width="1" height="1" fill="#000093"/>
<rect x="210" y="225" width="1" height="1" fill="#000065"/>
<rect x="226" y="225" width="1" height="1" fill="#00008a"/>
<rect x="228" y="225" width="1" height="1" fill="#00005d"/>
<rect x="242" y="225" width="1" height="1" fill="#00005e"/>
<rect x="249" y="225" width="1" height="1" fill="#000082"/>
<rect x="256" y="225" width="1" height="1" fill="#000056"/>
<rect x="258" y="225" width="1" height="1" fill="#000064"/>
<rect x="261" y="225" width="1" height="1" fill="#00004b"/>
<rect x="262" y="225" width="1" height="1" fill="#00009f"/>
<rect x="264" y="225" width="1" height="1" fill="#000079"/>
<rect x="265" y="225" width="1" height="1" fill="#000071"/>
<rect x="268" y="225" width="1" height="1" fill="#000059"/>
<rect x="270" y="225" width="1" height="1" fill="#00004f"/>
<rect x="271" y="225" width="1" height="1" fill="#00007f"/>
<rect x="273" y="225" width="1" height="1" fill="#000078"/>
<rect x="274" y="225" width="1" height="1" fill="#0000a8"/>
<rect x="276" y="225" width="1" height="1" fill="#0000b6"/>
<rect x="279" y="225" width="1" height="1" fill="#00008f"/>
<rect x="280" y="225" width="1" height="1" fill="#00006a"/>
<rect x="281" y="225" width="1" height="1" fill="#00008b"/>
<rect x="282" y="225" width="1" height="1" fill="#00006f"/>
<rect x="284" y="225" width="1" height="1" fill="#00008b"/>
<rect x="286" y="225" width="1" height="1" fill="#0000a4"/>
<rect x="287" y="225" width="1" height="1" fill="#000068"/>
<rect x="289" y="225" width="1" height="1" fill="#000059"/>
<rect x="290" y="225" width="1" height="1" fill="#000055"/>
<rect x="293" y="225" width="1" height="1" fill="#000057"/>
<rect x="294" y="225" width="1" height="1" fill="#0000a3"/>
<rect x="295" y="225" width="1" height="1" fill="#000055"/>
<rect x="297" y="225" width="1" height="1" fill="#00004c"/>
<rect x="298" y="225" width="1" height="1" fill="#0000af"/>
<rect x="302" y="225" width="1" height="1" fill="#00005c"/>
<rect x="303" y="225" width="1" height="1" fill="#0000a2"/>
<rect x="304" y="225" width="1" height="1" fill="#00004b"/>
<rect x="306" y="225" width="1" height="1" fill="#0000ae"/>
<rect x="309" y="225" width="1" height="1" fill="#00007f"/>
<rect x="310" y="225" width="1" height="1" fill="#000077"/>
<rect x="311" y="225" width="1" height="1" fill="#00008a"/>
<rect x="314" y="225" width="1" height="1" fill="#0000c2"/>
<rect x="318" y="225" width="1" height="1" fill="#00009c"/>
<rect x="321" y="225" width="1" height="1" fill="#00008f"/>
<rect x="324" y="225" width="1" height="1" fill="#0000b1"/>
<rect x="325" y="225" width="1" height="1" fill="#000068"/>
<rect x="326" y="225" width="1" height="1" fill="#000092"/>
<rect x="327" y="225" width="1" height="1" fill="#0000bf"/>
<rect x="330" y="225" width="1" height="1" fill="#00007d"/>
<rect x="336" y="225" width="1" height="1" fill="#0000b0"/>
<rect x="337" y="225" width="1" height="1" fill="#000098"/>
<rect x="343" y="225" width="1" height="1" fill="#00007f"/>
<rect x="346" y="225" width="1" height="1" fill="#000050"/>
<rect x="347" y="225" width="1" height="1" fill="#00007c"/>
<rect x="348" y="225" width="1" height="1" fill="#000079"/>
<rect x="349" y="225" width="1" height="1" fill="#0000b3"/>
<rect x="350" y="225" width="1" height="1" fill="#00007d"/>
<rect x="351" y="225" width="1" height="1" fill="#0000bb"/>
<rect x="352" y="225" width="1" height="1" fill="#000063"/>
<rect x="357" y="225" width="1" height="1" fill="#00006b"/>
<rect x="367" y="225" width="1" height="1" fill="#00009f"/>
<rect x="373" y="225" width="1" height="1" fill="#00005a"/>
<rect x="387" y="225" width="1" height="1" fill="#000070"/>
<rect x="389" y="225" width="1" height="1" fill="#00007f"/>
<rect x="393" y="225" width="1" height="1" fill="#0000a5"/>
<rect x="394" y="225" width="1" height="1" fill="#000074"/>
<rect x="395" y="225" width="1" height="1" fill="#0000b4"/>
<rect x="396" y="225" width="1" height="1" fill="#0000bd"/>
<rect x="397" y="225" width="1" height="1" fill="#0000bb"/>
<rect x="398" y="225" width="1" height="1" fill="#00008d"/>
<rect x="399" y="225" width="1" height="1" fill="#000051"/>
<rect x="400" y="225" width="1" height="1" fill="#0000ae"/>
<rect x="403" y="225" width="1" height="1" fill="#0000c3"/>
<rect x="404" y="225" width="1" height="1" fill="#0000c1"/>
<rect x="406" y="225" width="1" height="1" fill="#000087"/>
<rect x="412" y="225" width="1" height="1" fill="#0000ab"/>
<rect x="413" y="225" width="1" height="1" fill="#0000a6"/>
<rect x="417" y="225" width="1" height="1" fill="#00006a"/>
<rect x="420" y="225" width="1" height="1" fill="#0000b5"/>
<rect x="421" y="225" width="1" height="1" fill="#000059"/>
<rect x="424" y="225" width="1" height="1" fill="#0000b0"/>
<rect x="426" y="225" width="1" height="1" fill="#0000b2"/>
<rect x="427" y="225" width="1" height="1" fill="#0000a6"/>
<rect x="429" y="225" width="1" height="1" fill="#0000a0"/>
<rect x="432" y="225" width="1" height="1" fill="#0000b8"/>
<rect x="434" y="225" width="1" height="1" fill="#0000af"/>
<rect x="438" y="225" width="1" height="1" fill="#0000ab"/>
<rect x="440" y="225" width="1" height="1" fill="#0000c2"/>
<rect x="443" y="225" width="1" height="1" fill="#0000a5"/>
<rect x="444" y="225" width="1" height="1" fill="#0000a6"/>
<rect x="445" y="225" width="1" height="1" fill="#0000b4"/>
<rect x="446" y="225" width="1" height="1" fill="#0000be"/>
<rect x="448" y="225" width="1" height="1" fill="#00005a"/>
<rect x="452" y="225" width="1" height="1" fill="#000050"/>
<rect x="453" y="225" width="1" height="1" fill="#000088"/>
<rect x="454" y="225" width="1" height="1" fill="#000076"/>
<rect x="461" y="225" width="1" height="1" fill="#00009b"/>
<rect x="463" y="225" width="1" height="1" fill="#00007f"/>
<rect x="464" y="225" width="1" height="1" fill="#000052"/>
<rect x="467" y="225" width="1" height="1" fill="#000054"/>
<rect x="469" y="225" width="1" height="1" fill="#0000a2"/>
<rect x="474" y="225" width="1" height="1" fill="#000064"/>
<rect x="478" y="225" width="1" height="1" fill="#0000b6"/>
<rect x="489" y="225" width="1" height="1" fill="#00005f"/>
<rect x="490" y="225" width="1" height="1" fill="#000078"/>
<rect x="492" y="225" width="1" height="1" fill="#0000b1"/>
<rect x="495" y="225" width="1" height="1" fill="#000079"/>
<rect x="497" y="225" width="1" height="1" fill="#0000bf"/>
<rect x="498" y="225" width="1" height="1" fill="#0000bd"/>
<rect x="500" y="225" width="1" height="1" fill="#00008c"/>
<rect x="538" y="225" width="1" height="1" fill="#000067"/>
<rect x="540" y="225" width="1" height="1" fill="#000094"/>
<rect x="544" y="225" width="1" height="1" fill="#0000a5"/>
<rect x="549" y="225" width="1" height="1" fill="#0000b0"/>
<rect x="553" y="225" width="1" height="1" fill="#0000b6"/>
<rect x="556" y="225" width="1" height="1" fill="#000056"/>
<rect x="560" y="225" width="1" height="1" fill="#000071"/>
<rect x="562" y="225" width="1" height="1" fill="#000063"/>
<rect x="565" y="225" width="1" height="1" fill="#000085"/>
<rect x="572" y="225" width="1" height="1" fill="#000062"/>
<rect x="574" y="225" width="1" height="1" fill="#0000b7"/>
<rect x="575" y="225" width="1" height="1" fill="#000057"/>
<rect x="580" y="225" width="1" height="1" fill="#00004c"/>
<rect x="584" y="225" width="1" height="1" fill="#0000ae"/>
<rect x="585" y="225" width="1" height="1" fill="#000055"/>
<rect x="588" y="225" width="1" height="1" fill="#000085"/>
<rect x="589" y="225" width="1" height="1" fill="#00009e"/>
<rect x="591" y="225" width="1" height="1" fill="#0000c2"/>
<rect x="598" y="225" width="1" height="1" fill="#000060"/>
<rect x="606" y="225" width="1" height="1" fill="#00008f"/>
<rect x="607" y="225" width="1" height="1" fill="#00005d"/>
<rect x="608" y="225" width="1" height="1" fill="#00009d"/>
<rect x="611" y="225" width="1" height="1" fill="#000061"/>
<rect x="613" y="225" width="1" height="1" fill="#0000a4"/>
<rect x="615" y="225" width="1" height="1" fill="#000057"/>
<rect x="617" y="225" width="1" height="1" fill="#000065"/>
<rect x="618" y="225" width="1" height="1" fill="#000067"/>
<rect x="32" y="226" width="1" height="1" fill="#000065"/>
<rect x="48" y="226" width="1" height="1" fill="#000090"/>
<rect x="51" y="226" width="1" height="1" fill="#00008e"/>
<rect x="53" y="226" width="1" height="1" fill="#000066"/>
<rect x="55" y="226" width="1" height="1" fill="#000085"/>
<rect x="56" y="226" width="1" height="1" fill="#00004e"/>
<rect x="57" y="226" width="1" height="1" fill="#000053"/>
<rect x="61" y="226" width="1" height="1" fill="#00007f"/>
<rect x="64" y="226" width="1" height="1" fill="#0000a5"/>
<rect x="100" y="226" width="1" height="1" fill="#0000b6"/>
<rect x="117" y="226" width="1" height="1" fill="#00006b"/>
<rect x="123" y="226" width="1" height="1" fill="#00004f"/>
<rect x="125" y="226" width="1" height="1" fill="#000074"/>
<rect x="127" y="226" width="1" height="1" fill="#000085"/>
<rect x="129" y="226" width="1" height="1" fill="#0000b8"/>
<rect x="130" y="226" width="1" height="1" fill="#000090"/>
<rect x="132" y="226" width="1" height="1" fill="#0000aa"/>
<rect x="137" y="226" width="1" height="1" fill="#0000a0"/>
<rect x="138" y="226" width="1" height="1" fill="#00006c"/>
<rect x="139" y="226" width="1" height="1" fill="#0000b8"/>
<rect x="141" y="226" width="1" height="1" fill="#000067"/>
<rect x="143" y="226" width="1" height="1" fill="#000079"/>
<rect x="144" y="226" width="1" height="1" fill="#0000b3"/>
<rect x="145" y="226" width="1" height="1" fill="#00005e"/>
<rect x="147" y="226" width="1" height="1" fill="#0000b4"/>
<rect x="151" y="226" width="1" height="1" fill="#0000b9"/>
<rect x="154" y="226" width="1" height="1" fill="#0000b1"/>
<rect x="155" y="226" width="1" height="1" fill="#00009f"/>
<rect x="156" y="226" width="1" height="1" fill="#000084"/>
<rect x="158" y="226" width="1" height="1" fill="#0000b1"/>
<rect x="159" y="226" width="1" height="1" fill="#00004b"/>
<rect x="161" y="226" width="1" height="1" fill="#000069"/>
<rect x="163" y="226" width="1" height="1" fill="#00006b"/>
<rect x="165" y="226" width="1" height="1" fill="#000090"/>
<rect x="166" y="226" width="1" height="1" fill="#000069"/>
<rect x="167" y="226" width="1" height="1" fill="#00008e"/>
<rect x="170" y="226" width="1" height="1" fill="#0000b0"/>
<rect x="171" y="226" width="1" height="1" fill="#0000c0"/>
<rect x="172" y="226" width="1" height="1" fill="#000079"/>
<rect x="173" y="226" width="1" height="1" fill="#00007f"/>
<rect x="174" y="226" width="1" height="1" fill="#00006b"/>
<rect x="175" y="226" width="1" height="1" fill="#000095"/>
<rect x="176" y="226" width="1" height="1" fill="#0000b8"/>
<rect x="178" y="226" width="1" height="1" fill="#000075"/>
<rect x="180" y="226" width="1" height="1" fill="#00007d"/>
<rect x="181" y="226" width="1" height="1" fill="#0000be"/>
<rect x="184" y="226" width="1" height="1" fill="#0000c2"/>
<rect x="185" y="226" width="1" height="1" fill="#000080"/>
<rect x="188" y="226" width="1" height="1" fill="#00004c"/>
<rect x="192" y="226" width="1" height="1" fill="#000085"/>
<rect x="196" y="226" width="1" height="1" fill="#000064"/>
<rect x="199" y="226" width="1" height="1" fill="#0000b3"/>
<rect x="200" y="226" width="1" height="1" fill="#000074"/>
<rect x="201" y="226" width="1" height="1" fill="#00004b"/>
<rect x="202" y="226" width="1" height="1" fill="#00008d"/>
<rect x="203" y="226" width="1" height="1" fill="#00006b"/>
<rect x="205" y="226" width="1" height="1" fill="#0000bc"/>
<rect x="211" y="226" width="1" height="1" fill="#000086"/>
<rect x="214" y="226" width="1" height="1" fill="#000076"/>
<rect x="215" y="226" width="1" height="1" fill="#000092"/>
<rect x="219" y="226" width="1" height="1" fill="#000070"/>
<rect x="222" y="226" width="1" height="1" fill="#000052"/>
<rect x="223" y="226" width="1" height="1" fill="#00005a"/>
<rect x="224" y="226" width="1" height="1" fill="#000054"/>
<rect x="227" y="226" width="1" height="1" fill="#0000aa"/>
<rect x="231" y="226" width="1" height="1" fill="#000064"/>
<rect x="234" y="226" width="1" height="1" fill="#00006b"/>
<rect x="236" y="226" width="1" height="1" fill="#0000ba"/>
<rect x="237" y="226" width="1" height="1" fill="#000050"/>
<rect x="238" y="226" width="1" height="1" fill="#0000ac"/>
<rect x="239" y="226" width="1" height="1" fill="#000073"/>
<rect x="245" y="226" width="1" height="1" fill="#000074"/>
<rect x="246" y="226" width="1" height="1" fill="#000067"/>
<rect x="250" y="226" width="1" height="1" fill="#00004f"/>
<rect x="252" y="226" width="1" height="1" fill="#00009e"/>
<rect x="257" y="226" width="1" height="1" fill="#000097"/>
<rect x="263" y="226" width="1" height="1" fill="#000084"/>
<rect x="288" y="226" width="1" height="1" fill="#00004e"/>
<rect x="289" y="226" width="1" height="1" fill="#000032"/>
<rect x="315" y="226" width="1" height="1" fill="#0000b5"/>
<rect x="335" y="226" width="1" height="1" fill="#00009f"/>
<rect x="338" y="226" width="1" height="1" fill="#000080"/>
<rect x="340" y="226" width="1" height="1" fill="#0000b7"/>
<rect x="341" y="226" width="1" height="1" fill="#000056"/>
<rect x="371" y="226" width="1" height="1" fill="#000046"/>
<rect x="405" y="226" width="1" height="1" fill="#000079"/>
<rect x="407" y="226" width="1" height="1" fill="#00008b"/>
<rect x="411" y="226" width="1" height="1" fill="#00009f"/>
<rect x="416" y="226" width="1" height="1" fill="#000078"/>
<rect x="433" y="226" width="1" height="1" fill="#00007e"/>
<rect x="439" y="226" width="1" height="1" fill="#0000be"/>
<rect x="451" y="226" width="1" height="1" fill="#000096"/>
<rect x="546" y="226" width="1" height="1" fill="#0000c0"/>
<rect x="551" y="226" width="1" height="1" fill="#000085"/>
<rect x="561" y="226" width="1" height="1" fill="#000098"/>
<rect x="573" y="226" width="1" height="1" fill="#0000a5"/>
<rect x="576" y="226" width="1" height="1" fill="#0000ac"/>
<rect x="586" y="226" width="1" height="1" fill="#000081"/>
<rect x="595" y="226" width="1" height="1" fill="#0000ab"/>
<rect x="605" y="226" width="1" height="1" fill="#000071"/>
<rect x="619" y="226" width="1" height="1" fill="#0000a0"/>
<rect x="20" y="227" width="1" height="1" fill="#00004e"/>
<rect x="22" y="227" width="1" height="1" fill="#000076"/>
<rect x="23" y="227" width="1" height="1" fill="#0000b0"/>
<rect x="24" y="227" width="1" height="1" fill="#000075"/>
<rect x="27" y="227" width="1" height="1" fill="#0000ba"/>
<rect x="28" y="227" width="1" height="1" fill="#000093"/>
<rect x="30" y="227" width="1" height="1" fill="#0000a5"/>
<rect x="33" y="227" width="1" height="1" fill="#000056"/>
<rect x="34" y="227" width="1" height="1" fill="#000077"/>
<rect x="35" y="227" width="1" height="1" fill="#000092"/>
<rect x="36" y="227" width="1" height="1" fill="#000094"/>
<rect x="37" y="227" width="1" height="1" fill="#00006c"/>
<rect x="43" y="227" width="1" height="1" fill="#000057"/>
<rect x="46" y="227" width="1" height="1" fill="#000068"/>
<rect x="47" y="227" width="1" height="1" fill="#0000c2"/>
<rect x="49" y="227" width="1" height="1" fill="#000062"/>
<rect x="50" y="227" width="1" height="1" fill="#0000a9"/>
<rect x="52" y="227" width="1" height="1" fill="#00006a"/>
<rect x="115" y="227" width="1" height="1" fill="#0000bb"/>
<rect x="134" y="227" width="1" height="1" fill="#000099"/>
<rect x="153" y="227" width="1" height="1" fill="#00007b"/>
<rect x="164" y="227" width="1" height="1" fill="#000052"/>
<rect x="187" y="227" width="1" height="1" fill="#000089"/>
<rect x="191" y="227" width="1" height="1" fill="#000091"/>
<rect x="198" y="227" width="1" height="1" fill="#0000b6"/>
<rect x="206" y="227" width="1" height="1" fill="#00006a"/>
<rect x="218" y="227" width="1" height="1" fill="#00004f"/>
<rect x="220" y="227" width="1" height="1" fill="#00007e"/>
<rect x="235" y="227" width="1" height="1" fill="#000050"/>
<rect x="254" y="227" width="1" height="1" fill="#00004d"/>
<rect x="476" y="227" width="1" height="1" fill="#000064"/>
<rect x="39" y="228" width="1" height="1" fill="#00009e"/>
<rect x="42" y="228" width="1" height="1" fill="#00005b"/>
<rect x="161" y="228" width="1" height="1" fill="#000050"/>
<rect x="436" y="228" width="1" height="1" fill="#000064"/>
<rect x="548" y="228" width="1" height="1" fill="#000050"/>
<rect x="559" y="228" width="1" height="1" fill="#00003c"/>
<rect x="63" y="229" width="1" height="1" fill="#000078"/>
<rect x="109" y="229" width="1" height="1" fill="#000050"/>
<rect x="243" y="229" width="1" height="1" fill="#00003c"/>
<rect x="37" y="230" width="1" height="1" fill="#000050"/>
<rect x="156" y="230" width="1" height="1" fill="#000050"/>
<rect x="172" y="230" width="1" height="1" fill="#00005a"/>
<rect x="230" y="230" width="1" height="1" fill="#000050"/>
<rect x="322" y="230" width="1" height="1" fill="#000074"/>
<rect x="521" y="230" width="1" height="1" fill="#000064"/>
<rect x="82" y="231" width="1" height="1" fill="#000078"/>
<rect x="316" y="231" width="1" height="1" fill="#000046"/>
<rect x="322" y="231" width="1" height="1" fill="#000044"/>
<rect x="61" y="232" width="1" height="1" fill="#00003c"/>
<rect x="144" y="232" width="1" height="1" fill="#000046"/>
<rect x="229" y="232" width="1" height="1" fill="#000046"/>
<rect x="549" y="233" width="1" height="1" fill="#00005a"/>
<rect x="604" y="233" width="1" height="1" fill="#000046"/>
<rect x="329" y="234" width="1" height="1" fill="#000050"/>
<rect x="560" y="234" width="1" height="1" fill="#000064"/>
<rect x="85" y="235" width="1" height="1" fill="#000064"/>
<rect x="92" y="235" width="1" height="1" fill="#00005a"/>
<rect x="401" y="235" width="1" height="1" fill="#000032"/>
<rect x="125" y="236" width="1" height="1" fill="#000050"/>
<rect x="159" y="236" width="1" height="1" fill="#00003c"/>
<rect x="211" y="236" width="1" height="1" fill="#000046"/>
<rect x="264" y="236" width="1" height="1" fill="#000050"/>
<rect x="267" y="236" width="1" height="1" fill="#00005a"/>
<rect x="284" y="236" width="1" height="1" fill="#00003c"/>
<rect x="322" y="236" width="1" height="1" fill="#000050"/>
<rect x="341" y="236" width="1" height="1" fill="#000046"/>
<rect x="586" y="236" width="1" height="1" fill="#000046"/>
<rect x="58" y="237" width="1" height="1" fill="#00003c"/>
<rect x="237" y="237" width="1" height="1" fill="#000078"/>
<rect x="326" y="237" width="1" height="1" fill="#000064"/>
<rect x="441" y="237" width="1" height="1" fill="#000082"/>
<rect x="456" y="237" width="1" height="1" fill="#000032"/>
<rect x="469" y="237" width="1" height="1" fill="#000064"/>
<rect x="62" y="238" width="1" height="1" fill="#000064"/>
<rect x="83" y="238" width="1" height="1" fill="#000064"/>
<rect x="135" y="238" width="1" height="1" fill="#000046"/>
<rect x="297" y="238" width="1" height="1" fill="#000064"/>
<rect x="316" y="238" width="1" height="1" fill="#000046"/>
<rect x="425" y="238" width="1" height="1" fill="#000046"/>
<rect x="604" y="239" width="1" height="1" fill="#00005a"/>
<rect x="162" y="240" width="1" height="1" fill="#00005a"/>
<rect x="252" y="240" width="1" height="1" fill="#00003c"/>
<rect x="259" y="240" width="1" height="1" fill="#00005a"/>
<rect x="385" y="240" width="1" height="1" fill="#000078"/>
<rect x="414" y="240" width="1" height="1" fill="#000032"/>
<rect x="516" y="240" width="1" height="1" fill="#000082"/>
<rect x="34" y="241" width="1" height="1" fill="#000046"/>
<rect x="48" y="241" width="1" height="1" fill="#000082"/>
<rect x="305" y="241" width="1" height="1" fill="#000046"/>
<rect x="338" y="241" width="1" height="1" fill="#000064"/>
<rect x="35" y="242" width="1" height="1" fill="#00003c"/>
<rect x="337" y="242" width="1" height="1" fill="#00003c"/>
<rect x="350" y="242" width="1" height="1" fill="#00003c"/>
<rect x="371" y="242" width="1" height="1" fill="#000082"/>
<rect x="414" y="242" width="1" height="1" fill="#000064"/>
<rect x="462" y="242" width="1" height="1" fill="#000046"/>
<rect x="480" y="242" width="1" height="1" fill="#000064"/>
<rect x="619" y="242" width="1" height="1" fill="#000064"/>
<rect x="81" y="243" width="1" height="1" fill="#000046"/>
<rect x="135" y="243" width="1" height="1" fill="#000064"/>
<rect x="193" y="243" width="1" height="1" fill="#000046"/>
<rect x="405" y="243" width="1" height="1" fill="#000032"/>
<rect x="472" y="243" width="1" height="1" fill="#000032"/>
<rect x="515" y="243" width="1" height="1" fill="#000082"/>
<rect x="527" y="243" width="1" height="1" fill="#000065"/>
<rect x="535" y="243" width="1" height="1" fill="#000093"/>
<rect x="547" y="243" width="1" height="1" fill="#00005e"/>
<rect x="552" y="243" width="1" height="1" fill="#000094"/>
<rect x="568" y="243" width="1" height="1" fill="#0000a3"/>
<rect x="576" y="243" width="1" height="1" fill="#00005b"/>
<rect x="131" y="244" width="1" height="1" fill="#000050"/>
<rect x="133" y="244" width="1" height="1" fill="#000082"/>
<rect x="216" y="244" width="1" height="1" fill="#000064"/>
<rect x="221" y="244" width="1" height="1" fill="#000064"/>
<rect x="235" y="244" width="1" height="1" fill="#000099"/>
<rect x="257" y="244" width="1" height="1" fill="#00007c"/>
<rect x="275" y="244" width="1" height="1" fill="#0000a6"/>
<rect x="377" y="244" width="1" height="1" fill="#000079"/>
<rect x="381" y="244" width="1" height="1" fill="#000065"/>
<rect x="395" y="244" width="1" height="1" fill="#000066"/>
<rect x="396" y="244" width="1" height="1" fill="#00006d"/>
<rect x="398" y="244" width="1" height="1" fill="#000069"/>
<rect x="402" y="244" width="1" height="1" fill="#0000a9"/>
<rect x="428" y="244" width="1" height="1" fill="#000053"/>
<rect x="436" y="244" width="1" height="1" fill="#00004a"/>
<rect x="452" y="244" width="1" height="1" fill="#00004d"/>
<rect x="455" y="244" width="1" height="1" fill="#00004e"/>
<rect x="470" y="244" width="1" height="1" fill="#000040"/>
<rect x="508" y="244" width="1" height="1" fill="#00007d"/>
<rect x="536" y="244" width="1" height="1" fill="#0000b5"/>
<rect x="537" y="244" width="1" height="1" fill="#00009e"/>
<rect x="538" y="244" width="1" height="1" fill="#000082"/>
<rect x="540" y="244" width="1" height="1" fill="#0000ab"/>
<rect x="542" y="244" width="1" height="1" fill="#0000a1"/>
<rect x="543" y="244" width="1" height="1" fill="#0000a9"/>
<rect x="544" y="244" width="1" height="1" fill="#0000ba"/>
<rect x="546" y="244" width="1" height="1" fill="#00006c"/>
<rect x="548" y="244" width="1" height="1" fill="#00006b"/>
<rect x="549" y="244" width="1" height="1" fill="#000082"/>
<rect x="550" y="244" width="1" height="1" fill="#00008e"/>
<rect x="556" y="244" width="1" height="1" fill="#0000b7"/>
<rect x="560" y="244" width="1" height="1" fill="#00009b"/>
<rect x="562" y="244" width="1" height="1" fill="#00006d"/>
<rect x="565" y="244" width="1" height="1" fill="#000085"/>
<rect x="569" y="244" width="1" height="1" fill="#00007a"/>
<rect x="573" y="244" width="1" height="1" fill="#00007c"/>
<rect x="575" y="244" width="1" height="1" fill="#00008c"/>
<rect x="578" y="244" width="1" height="1" fill="#0000a2"/>
<rect x="580" y="244" width="1" height="1" fill="#000060"/>
<rect x="585" y="244" width="1" height="1" fill="#00008a"/>
<rect x="586" y="244" width="1" height="1" fill="#000078"/>
<rect x="587" y="244" width="1" height="1" fill="#000061"/>
<rect x="588" y="244" width="1" height="1" fill="#000082"/>
<rect x="590" y="244" width="1" height="1" fill="#0000b9"/>
<rect x="592" y="244" width="1" height="1" fill="#0000a0"/>
<rect x="148" y="245" width="1" height="1" fill="#00003f"/>
<rect x="150" y="245" width="1" height="1" fill="#000055"/>
<rect x="179" y="245" width="1" height="1" fill="#000053"/>
<rect x="215" y="245" width="1" height="1" fill="#0000a1"/>
<rect x="216" y="245" width="1" height="1" fill="#00007b"/>
<rect x="220" y="245" width="1" height="1" fill="#0000ba"/>
<rect x="222" y="245" width="1" height="1" fill="#00008e"/>
<rect x="223" y="245" width="1" height="1" fill="#000076"/>
<rect x="226" y="245" width="1" height="1" fill="#00008e"/>
<rect x="227" y="245" width="1" height="1" fill="#000067"/>
<rect x="230" y="245" width="1" height="1" fill="#000070"/>
<rect x="232" y="245" width="1" height="1" fill="#000080"/>
<rect x="237" y="245" width="1" height="1" fill="#00009c"/>
<rect x="240" y="245" width="1" height="1" fill="#00007a"/>
<rect x="242" y="245" width="1" height="1" fill="#00007a"/>
<rect x="244" y="245" width="1" height="1" fill="#0000a9"/>
<rect x="246" y="245" width="1" height="1" fill="#00005b"/>
<rect x="247" y="245" width="1" height="1" fill="#0000bb"/>
<rect x="250" y="245" width="1" height="1" fill="#0000be"/>
<rect x="253" y="245" width="1" height="1" fill="#00009f"/>
<rect x="254" y="245" width="1" height="1" fill="#0000b9"/>
<rect x="255" y="245" width="1" height="1" fill="#000088"/>
<rect x="256" y="245" width="1" height="1" fill="#000088"/>
<rect x="258" y="245" width="1" height="1" fill="#00008d"/>
<rect x="261" y="245" width="1" height="1" fill="#000084"/>
<rect x="262" y="245" width="1" height="1" fill="#0000b4"/>
<rect x="264" y="245" width="1" height="1" fill="#0000b2"/>
<rect x="265" y="245" width="1" height="1" fill="#00006e"/>
<rect x="271" y="245" width="1" height="1" fill="#000080"/>
<rect x="385" y="245" width="1" height="1" fill="#000032"/>
<rect x="397" y="245" width="1" height="1" fill="#00006e"/>
<rect x="399" y="245" width="1" height="1" fill="#000092"/>
<rect x="401" y="245" width="1" height="1" fill="#000071"/>
<rect x="404" y="245" width="1" height="1" fill="#00007a"/>
<rect x="405" y="245" width="1" height="1" fill="#000068"/>
<rect x="409" y="245" width="1" height="1" fill="#00005a"/>
<rect x="414" y="245" width="1" height="1" fill="#000068"/>
<rect x="423" y="245" width="1" height="1" fill="#00006b"/>
<rect x="424" y="245" width="1" height="1" fill="#00006e"/>
<rect x="436" y="245" width="1" height="1" fill="#00005e"/>
<rect x="437" y="245" width="1" height="1" fill="#000077"/>
<rect x="438" y="245" width="1" height="1" fill="#00005b"/>
<rect x="439" y="245" width="1" height="1" fill="#00006e"/>
<rect x="440" y="245" width="1" height="1" fill="#00006f"/>
<rect x="471" y="245" width="1" height="1" fill="#000051"/>
<rect x="492" y="245" width="1" height="1" fill="#000040"/>
<rect x="496" y="245" width="1" height="1" fill="#00003e"/>
<rect x="534" y="245" width="1" height="1" fill="#000091"/>
<rect x="551" y="245" width="1" height="1" fill="#0000b4"/>
<rect x="554" y="245" width="1" height="1" fill="#000096"/>
<rect x="555" y="245" width="1" height="1" fill="#0000bb"/>
<rect x="561" y="245" width="1" height="1" fill="#00009b"/>
<rect x="603" y="245" width="1" height="1" fill="#000064"/>
<rect x="21" y="246" width="1" height="1" fill="#000046"/>
<rect x="70" y="246" width="1" height="1" fill="#000098"/>
<rect x="76" y="246" width="1" height="1" fill="#00006f"/>
<rect x="79" y="246" width="1" height="1" fill="#000081"/>
<rect x="88" y="246" width="1" height="1" fill="#000058"/>
<rect x="92" y="246" width="1" height="1" fill="#000098"/>
<rect x="121" y="246" width="1" height="1" fill="#000076"/>
<rect x="154" y="246" width="1" height="1" fill="#00003c"/>
<rect x="168" y="246" width="1" height="1" fill="#00003d"/>
<rect x="178" y="246" width="1" height="1" fill="#000073"/>
<rect x="213" y="246" width="1" height="1" fill="#000064"/>
<rect x="217" y="246" width="1" height="1" fill="#00006d"/>
<rect x="239" y="246" width="1" height="1" fill="#0000a3"/>
<rect x="266" y="246" width="1" height="1" fill="#0000a0"/>
<rect x="270" y="246" width="1" height="1" fill="#000078"/>
<rect x="273" y="246" width="1" height="1" fill="#0000af"/>
<rect x="276" y="246" width="1" height="1" fill="#000057"/>
<rect x="291" y="246" width="1" height="1" fill="#000051"/>
<rect x="308" y="246" width="1" height="1" fill="#000074"/>
<rect x="329" y="246" width="1" height="1" fill="#000050"/>
<rect x="352" y="246" width="1" height="1" fill="#000079"/>
<rect x="396" y="246" width="1" height="1" fill="#000078"/>
<rect x="400" y="246" width="1" height="1" fill="#000071"/>
<rect x="412" y="246" width="1" height="1" fill="#000059"/>
<rect x="429" y="246" width="1" height="1" fill="#00009e"/>
<rect x="430" y="246" width="1" height="1" fill="#0000a4"/>
<rect x="432" y="246" width="1" height="1" fill="#00007b"/>
<rect x="436" y="246" width="1" height="1" fill="#000073"/>
<rect x="442" y="246" width="1" height="1" fill="#0000a7"/>
<rect x="490" y="246" width="1" height="1" fill="#000064"/>
<rect x="520" y="246" width="1" height="1" fill="#000082"/>
<rect x="597" y="246" width="1" height="1" fill="#000078"/>
<rect x="66" y="247" width="1" height="1" fill="#000068"/>
<rect x="74" y="247" width="1" height="1" fill="#000066"/>
<rect x="75" y="247" width="1" height="1" fill="#000070"/>
<rect x="78" y="247" width="1" height="1" fill="#000053"/>
<rect x="81" y="247" width="1" height="1" fill="#000071"/>
<rect x="83" y="247" width="1" height="1" fill="#00007f"/>
<rect x="85" y="247" width="1" height="1" fill="#00008e"/>
<rect x="89" y="247" width="1" height="1" fill="#00006e"/>
<rect x="97" y="247" width="1" height="1" fill="#000091"/>
<rect x="103" y="247" width="1" height="1" fill="#000078"/>
<rect x="105" y="247" width="1" height="1" fill="#00008d"/>
<rect x="106" y="247" width="1" height="1" fill="#0000a0"/>
<rect x="109" y="247" width="1" height="1" fill="#000054"/>
<rect x="111" y="247" width="1" height="1" fill="#00009d"/>
<rect x="112" y="247" width="1" height="1" fill="#000081"/>
<rect x="117" y="247" width="1" height="1" fill="#000067"/>
<rect x="119" y="247" width="1" height="1" fill="#00005a"/>
<rect x="120" y="247" width="1" height="1" fill="#000074"/>
<rect x="125" y="247" width="1" height="1" fill="#000051"/>
<rect x="126" y="247" width="1" height="1" fill="#000058"/>
<rect x="133" y="247" width="1" height="1" fill="#000069"/>
<rect x="134" y="247" width="1" height="1" fill="#000072"/>
<rect x="135" y="247" width="1" height="1" fill="#000079"/>
<rect x="140" y="247" width="1" height="1" fill="#000063"/>
<rect x="262" y="247" width="1" height="1" fill="#000046"/>
<rect x="345" y="247" width="1" height="1" fill="#000066"/>
<rect x="367" y="247" width="1" height="1" fill="#000078"/>
<rect x="432" y="247" width="1" height="1" fill="#00003c"/>
<rect x="619" y="247" width="1" height="1" fill="#00003c"/>
<rect x="67" y="248" width="1" height="1" fill="#0000a4"/>
<rect x="68" y="248" width="1" height="1" fill="#00005c"/>
<rect x="72" y="248" width="1" height="1" fill="#000060"/>
<rect x="83" y="248" width="1" height="1" fill="#000064"/>
<rect x="84" y="248" width="1" height="1" fill="#00008e"/>
<rect x="86" y="248" width="1" height="1" fill="#000066"/>
<rect x="90" y="248" width="1" height="1" fill="#000050"/>
<rect x="96" y="248" width="1" height="1" fill="#000093"/>
<rect x="99" y="248" width="1" height="1" fill="#00008b"/>
<rect x="104" y="248" width="1" height="1" fill="#000058"/>
<rect x="136" y="248" width="1" height="1" fill="#0000a5"/>
<rect x="418" y="248" width="1" height="1" fill="#000064"/>
<rect x="577" y="248" width="1" height="1" fill="#00003c"/>
<rect x="207" y="249" width="1" height="1" fill="#000078"/>
<rect x="261" y="249" width="1" height="1" fill="#000078"/>
<rect x="304" y="249" width="1" height="1" fill="#000050"/>
<rect x="322" y="249" width="1" height="1" fill="#000082"/>
<rect x="402" y="249" width="1" height="1" fill="#000050"/>
<rect x="526" y="249" width="1" height="1" fill="#000032"/>
<rect x="103" y="250" width="1" height="1" fill="#000064"/>
<rect x="392" y="250" width="1" height="1" fill="#00005a"/>
<rect x="534" y="250" width="1" height="1" fill="#000064"/>
<rect x="66" y="251" width="1" height="1" fill="#000078"/>
<rect x="121" y="251" width="1" height="1" fill="#000046"/>
<rect x="170" y="251" width="1" height="1" fill="#000046"/>
<rect x="402" y="251" width="1" height="1" fill="#000050"/>
<rect x="432" y="251" width="1" height="1" fill="#000032"/>
<rect x="131" y="252" width="1" height="1" fill="#00005a"/>
<rect x="458" y="252" width="1" height="1" fill="#000082"/>
<rect x="464" y="252" width="1" height="1" fill="#000032"/>
<rect x="483" y="252" width="1" height="1" fill="#000078"/>
<rect x="600" y="252" width="1" height="1" fill="#000046"/>
<rect x="164" y="253" width="1" height="1" fill="#000046"/>
<rect x="192" y="253" width="1" height="1" fill="#000032"/>
<rect x="310" y="253" width="1" height="1" fill="#000064"/>
<rect x="375" y="253" width="1" height="1" fill="#000046"/>
<rect x="437" y="253" width="1" height="1" fill="#000082"/>
<rect x="56" y="254" width="1" height="1" fill="#00003c"/>
<rect x="549" y="254" width="1" height="1" fill="#000046"/>
<rect x="58" y="255" width="1" height="1" fill="#00003c"/>
<rect x="69" y="255" width="1" height="1" fill="#000032"/>
<rect x="149" y="255" width="1" height="1" fill="#000032"/>
<rect x="214" y="255" width="1" height="1" fill="#00005a"/>
<rect x="271" y="255" width="1" height="1" fill="#00003c"/>
<rect x="296" y="255" width="1" height="1" fill="#000078"/>
<rect x="545" y="255" width="1" height="1" fill="#000082"/>
<rect x="615" y="255" width="1" height="1" fill="#00003c"/>
<rect x="341" y="256" width="1" height="1" fill="#000064"/>
<rect x="394" y="256" width="1" height="1" fill="#000050"/>
<rect x="397" y="256" width="1" height="1" fill="#00003c"/>
<rect x="436" y="256" width="1" height="1" fill="#000054"/>
<rect x="478" y="256" width="1" height="1" fill="#00003c"/>
<rect x="517" y="256" width="1" height="1" fill="#000064"/>
<rect x="539" y="256" width="1" height="1" fill="#00005a"/>
<rect x="257" y="257" width="1" height="1" fill="#000082"/>
<rect x="269" y="257" width="1" height="1" fill="#00003c"/>
<rect x="338" y="257" width="1" height="1" fill="#00003c"/>
<rect x="373" y="257" width="1" height="1" fill="#000050"/>
<rect x="152" y="258" width="1" height="1" fill="#00003c"/>
<rect x="185" y="258" width="1" height="1" fill="#00003c"/>
<rect x="387" y="258" width="1" height="1" fill="#000064"/>
<rect x="506" y="258" width="1" height="1" fill="#00003c"/>
<rect x="538" y="258" width="1" height="1" fill="#00003c"/>
<rect x="559" y="258" width="1" height="1" fill="#000046"/>
<rect x="562" y="258" width="1" height="1" fill="#00003c"/>
<rect x="54" y="259" width="1" height="1" fill="#000082"/>
<rect x="278" y="259" width="1" height="1" fill="#00005a"/>
<rect x="279" y="259" width="1" height="1" fill="#00003c"/>
<rect x="415" y="259" width="1" height="1" fill="#000032"/>
<rect x="482" y="259" width="1" height="1" fill="#000078"/>
<rect x="531" y="259" width="1" height="1" fill="#00005a"/>
<rect x="550" y="259" width="1" height="1" fill="#000064"/>
<rect x="49" y="260" width="1" height="1" fill="#000032"/>
<rect x="54" y="260" width="1" height="1" fill="#00005a"/>
<rect x="169" y="260" width="1" height="1" fill="#000046"/>
<rect x="322" y="260" width="1" height="1" fill="#000068"/>
<rect x="381" y="260" width="1" height="1" fill="#000046"/>
<rect x="427" y="260" width="1" height="1" fill="#00005a"/>
<rect x="477" y="260" width="1" height="1" fill="#000046"/>
<rect x="605" y="260" width="1" height="1" fill="#000046"/>
<rect x="41" y="261" width="1" height="1" fill="#000046"/>
<rect x="505" y="261" width="1" height="1" fill="#00003c"/>
<rect x="595" y="261" width="1" height="1" fill="#00005a"/>
<rect x="62" y="262" width="1" height="1" fill="#00005a"/>
<rect x="81" y="262" width="1" height="1" fill="#000046"/>
<rect x="169" y="262" width="1" height="1" fill="#000064"/>
<rect x="282" y="262" width="1" height="1" fill="#000032"/>
<rect x="450" y="262" width="1" height="1" fill="#00005a"/>
<rect x="199" y="263" width="1" height="1" fill="#000064"/>
<rect x="221" y="263" width="1" height="1" fill="#000064"/>
<rect x="227" y="263" width="1" height="1" fill="#00003c"/>
<rect x="306" y="263" width="1" height="1" fill="#000050"/>
<rect x="492" y="263" width="1" height="1" fill="#00003c"/>
<rect x="500" y="263" width="1" height="1" fill="#000078"/>
<rect x="606" y="263" width="1" height="1" fill="#000064"/>
<rect x="24" y="264" width="1" height="1" fill="#00005a"/>
<rect x="143" y="264" width="1" height="1" fill="#000064"/>
<rect x="145" y="264" width="1" height="1" fill="#000064"/>
<rect x="231" y="264" width="1" height="1" fill="#000064"/>
<rect x="354" y="264" width="1" height="1" fill="#000032"/>
<rect x="307" y="265" width="1" height="1" fill="#00003c"/>
<rect x="436" y="265" width="1" height="1" fill="#000066"/>
<rect x="445" y="265" width="1" height="1" fill="#000064"/>
<rect x="583" y="265" width="1" height="1" fill="#000050"/>
<rect x="597" y="265" width="1" height="1" fill="#000050"/>
<rect x="98" y="266" width="1" height="1" fill="#000050"/>
<rect x="169" y="266" width="1" height="1" fill="#000046"/>
<rect x="608" y="266" width="1" height="1" fill="#00003c"/>
<rect x="73" y="267" width="1" height="1" fill="#000046"/>
<rect x="107" y="267" width="1" height="1" fill="#00003c"/>
<rect x="139" y="267" width="1" height="1" fill="#000064"/>
<rect x="296" y="267" width="1" height="1" fill="#00005a"/>
<rect x="315" y="267" width="1" height="1" fill="#000082"/>
<rect x="316" y="267" width="1" height="1" fill="#00005a"/>
<rect x="484" y="267" width="1" height="1" fill="#000046"/>
<rect x="544" y="267" width="1" height="1" fill="#000050"/>
<rect x="78" y="268" width="1" height="1" fill="#00005a"/>
<rect x="226" y="268" width="1" height="1" fill="#000050"/>
<rect x="351" y="268" width="1" height="1" fill="#000064"/>
<rect x="436" y="268" width="1" height="1" fill="#00005b"/>
<rect x="611" y="268" width="1" height="1" fill="#000050"/>
<rect x="143" y="269" width="1" height="1" fill="#000050"/>
<rect x="436" y="269" width="1" height="1" fill="#000070"/>
<rect x="470" y="269" width="1" height="1" fill="#000082"/>
<rect x="475" y="269" width="1" height="1" fill="#000064"/>
<rect x="596" y="269" width="1" height="1" fill="#000032"/>
<rect x="264" y="270" width="1" height="1" fill="#000046"/>
<rect x="380" y="270" width="1" height="1" fill="#000064"/>
<rect x="404" y="270" width="1" height="1" fill="#00005a"/>
<rect x="418" y="270" width="1" height="1" fill="#000050"/>
<rect x="512" y="270" width="1" height="1" fill="#000046"/>
<rect x="602" y="270" width="1" height="1" fill="#000064"/>
<rect x="36" y="271" width="1" height="1" fill="#00005a"/>
<rect x="87" y="271" width="1" height="1" fill="#000046"/>
<rect x="169" y="271" width="1" height="1" fill="#000046"/>
<rect x="183" y="271" width="1" height="1" fill="#00003c"/>
<rect x="409" y="271" width="1" height="1" fill="#00005a"/>
<rect x="590" y="271" width="1" height="1" fill="#000078"/>
<rect x="45" y="272" width="1" height="1" fill="#00003c"/>
<rect x="128" y="272" width="1" height="1" fill="#000064"/>
<rect x="144" y="272" width="1" height="1" fill="#00003c"/>
<rect x="187" y="272" width="1" height="1" fill="#00005a"/>
<rect x="322" y="272" width="1" height="1" fill="#000059"/>
<rect x="331" y="272" width="1" height="1" fill="#000050"/>
<rect x="351" y="272" width="1" height="1" fill="#000046"/>
<rect x="423" y="272" width="1" height="1" fill="#000046"/>
<rect x="424" y="272" width="1" height="1" fill="#000046"/>
<rect x="519" y="272" width="1" height="1" fill="#00006a"/>
<rect x="601" y="272" width="1" height="1" fill="#000046"/>
<rect x="220" y="273" width="1" height="1" fill="#000054"/>
<rect x="230" y="273" width="1" height="1" fill="#000058"/>
<rect x="427" y="273" width="1" height="1" fill="#000050"/>
<rect x="436" y="273" width="1" height="1" fill="#00004d"/>
<rect x="512" y="273" width="1" height="1" fill="#00006b"/>
<rect x="521" y="273" width="1" height="1" fill="#000055"/>
<rect x="535" y="273" width="1" height="1" fill="#00005d"/>
<rect x="193" y="274" width="1" height="1" fill="#00005a"/>
<rect x="218" y="274" width="1" height="1" fill="#000090"/>
<rect x="219" y="274" width="1" height="1" fill="#000091"/>
<rect x="227" y="274" width="1" height="1" fill="#000096"/>
<rect x="231" y="274" width="1" height="1" fill="#00005e"/>
<rect x="232" y="274" width="1" height="1" fill="#00003c"/>
<rect x="272" y="274" width="1" height="1" fill="#000050"/>
<rect x="533" y="274" width="1" height="1" fill="#000055"/>
<rect x="594" y="274" width="1" height="1" fill="#00003c"/>
<rect x="42" y="275" width="1" height="1" fill="#00005a"/>
<rect x="65" y="275" width="1" height="1" fill="#00005a"/>
<rect x="144" y="275" width="1" height="1" fill="#000057"/>
<rect x="198" y="275" width="1" height="1" fill="#000060"/>
<rect x="205" y="275" width="1" height="1" fill="#000032"/>
<rect x="223" y="275" width="1" height="1" fill="#000047"/>
<rect x="244" y="275" width="1" height="1" fill="#000072"/>
<rect x="265" y="275" width="1" height="1" fill="#000046"/>
<rect x="292" y="275" width="1" height="1" fill="#00008c"/>
<rect x="295" y="275" width="1" height="1" fill="#00007d"/>
<rect x="339" y="275" width="1" height="1" fill="#000078"/>
<rect x="407" y="275" width="1" height="1" fill="#000040"/>
<rect x="436" y="275" width="1" height="1" fill="#00003e"/>
<rect x="440" y="275" width="1" height="1" fill="#000074"/>
<rect x="449" y="275" width="1" height="1" fill="#00004c"/>
<rect x="453" y="275" width="1" height="1" fill="#00008a"/>
<rect x="455" y="275" width="1" height="1" fill="#00005a"/>
<rect x="460" y="275" width="1" height="1" fill="#00008e"/>
<rect x="462" y="275" width="1" height="1" fill="#00005a"/>
<rect x="468" y="275" width="1" height="1" fill="#00005a"/>
<rect x="480" y="275" width="1" height="1" fill="#000077"/>
<rect x="492" y="275" width="1" height="1" fill="#000053"/>
<rect x="531" y="275" width="1" height="1" fill="#000093"/>
<rect x="555" y="275" width="1" height="1" fill="#00007b"/>
<rect x="560" y="275" width="1" height="1" fill="#000040"/>
<rect x="566" y="275" width="1" height="1" fill="#00007e"/>
<rect x="567" y="275" width="1" height="1" fill="#000059"/>
<rect x="576" y="275" width="1" height="1" fill="#000044"/>
<rect x="578" y="275" width="1" height="1" fill="#000042"/>
<rect x="593" y="275" width="1" height="1" fill="#000082"/>
<rect x="60" y="276" width="1" height="1" fill="#000050"/>
<rect x="98" y="276" width="1" height="1" fill="#000041"/>
<rect x="106" y="276" width="1" height="1" fill="#000049"/>
<rect x="113" y="276" width="1" height="1" fill="#00006b"/>
<rect x="114" y="276" width="1" height="1" fill="#000062"/>
<rect x="131" y="276" width="1" height="1" fill="#00004e"/>
<rect x="166" y="276" width="1" height="1" fill="#000064"/>
<rect x="238" y="276" width="1" height="1" fill="#000095"/>
<rect x="240" y="276" width="1" height="1" fill="#00005e"/>
<rect x="252" y="276" width="1" height="1" fill="#00003c"/>
<rect x="270" y="276" width="1" height="1" fill="#00006d"/>
<rect x="273" y="276" width="1" height="1" fill="#000042"/>
<rect x="281" y="276" width="1" height="1" fill="#000045"/>
<rect x="305" y="276" width="1" height="1" fill="#000080"/>
<rect x="316" y="276" width="1" height="1" fill="#00005d"/>
<rect x="318" y="276" width="1" height="1" fill="#00007a"/>
<rect x="320" y="276" width="1" height="1" fill="#000084"/>
<rect x="328" y="276" width="1" height="1" fill="#000095"/>
<rect x="334" y="276" width="1" height="1" fill="#00005a"/>
<rect x="335" y="276" width="1" height="1" fill="#00005e"/>
<rect x="348" y="276" width="1" height="1" fill="#000091"/>
<rect x="352" y="276" width="1" height="1" fill="#000087"/>
<rect x="419" y="276" width="1" height="1" fill="#000041"/>
<rect x="488" y="276" width="1" height="1" fill="#000047"/>
<rect x="512" y="276" width="1" height="1" fill="#00003c"/>
<rect x="546" y="276" width="1" height="1" fill="#000092"/>
<rect x="579" y="276" width="1" height="1" fill="#000082"/>
<rect x="609" y="276" width="1" height="1" fill="#00006b"/>
<rect x="43" y="277" width="1" height="1" fill="#000064"/>
<rect x="154" y="277" width="1" height="1" fill="#000067"/>
<rect x="161" y="277" width="1" height="1" fill="#000044"/>
<rect x="200" y="277" width="1" height="1" fill="#000050"/>
<rect x="264" y="277" width="1" height="1" fill="#00004d"/>
<rect x="279" y="277" width="1" height="1" fill="#000047"/>
<rect x="343" y="277" width="1" height="1" fill="#00005a"/>
<rect x="516" y="277" width="1" height="1" fill="#00003c"/>
<rect x="38" y="278" width="1" height="1" fill="#000046"/>
<rect x="80" y="278" width="1" height="1" fill="#000046"/>
<rect x="274" y="278" width="1" height="1" fill="#000050"/>
<rect x="442" y="278" width="1" height="1" fill="#000050"/>
<rect x="558" y="278" width="1" height="1" fill="#000032"/>
<rect x="29" y="279" width="1" height="1" fill="#000050"/>
<rect x="330" y="279" width="1" height="1" fill="#000032"/>
<rect x="496" y="279" width="1" height="1" fill="#000078"/>
<rect x="34" y="280" width="1" height="1" fill="#00005a"/>
<rect x="108" y="280" width="1" height="1" fill="#000082"/>
<rect x="142" y="280" width="1" height="1" fill="#000078"/>
<rect x="295" y="280" width="1" height="1" fill="#00003c"/>
<rect x="338" y="280" width="1" height="1" fill="#00005a"/>
<rect x="30" y="281" width="1" height="1" fill="#000078"/>
<rect x="38" y="281" width="1" height="1" fill="#000064"/>
<rect x="119" y="281" width="1" height="1" fill="#000046"/>
<rect x="120" y="281" width="1" height="1" fill="#000046"/>
<rect x="322" y="281" width="1" height="1" fill="#00003d"/>
<rect x="436" y="281" width="1" height="1" fill="#000057"/>
<rect x="208" y="282" width="1" height="1" fill="#00005a"/>
<rect x="237" y="282" width="1" height="1" fill="#00005a"/>
<rect x="244" y="282" width="1" height="1" fill="#000050"/>
<rect x="327" y="282" width="1" height="1" fill="#00005a"/>
<rect x="396" y="282" width="1" height="1" fill="#000064"/>
<rect x="592" y="282" width="1" height="1" fill="#000050"/>
<rect x="62" y="283" width="1" height="1" fill="#000032"/>
<rect x="86" y="283" width="1" height="1" fill="#000050"/>
<rect x="428" y="283" width="1" height="1" fill="#000032"/>
<rect x="517" y="283" width="1" height="1" fill="#000032"/>
<rect x="590" y="283" width="1" height="1" fill="#000032"/>
<rect x="78" y="284" width="1" height="1" fill="#000050"/>
<rect x="86" y="284" width="1" height="1" fill="#000046"/>
<rect x="123" y="284" width="1" height="1" fill="#000064"/>
<rect x="195" y="284" width="1" height="1" fill="#00005a"/>
<rect x="324" y="284" width="1" height="1" fill="#000032"/>
<rect x="430" y="284" width="1" height="1" fill="#000064"/>
<rect x="116" y="285" width="1" height="1" fill="#000050"/>
<rect x="121" y="285" width="1" height="1" fill="#00003c"/>
<rect x="187" y="285" width="1" height="1" fill="#000064"/>
<rect x="273" y="285" width="1" height="1" fill="#000050"/>
<rect x="366" y="285" width="1" height="1" fill="#000032"/>
<rect x="450" y="285" width="1" height="1" fill="#000078"/>
<rect x="608" y="285" width="1" height="1" fill="#000050"/>
<rect x="619" y="285" width="1" height="1" fill="#000032"/>
<rect x="32" y="286" width="1" height="1" fill="#000078"/>
<rect x="109" y="286" width="1" height="1" fill="#00005a"/>
<rect x="411" y="286" width="1" height="1" fill="#000032"/>
<rect x="415" y="286" width="1" height="1" fill="#00005a"/>
<rect x="75" y="287" width="1" height="1" fill="#000050"/>
<rect x="158" y="287" width="1" height="1" fill="#000032"/>
<rect x="296" y="287" width="1" height="1" fill="#000078"/>
<rect x="330" y="287" width="1" height="1" fill="#00005a"/>
<rect x="479" y="287" width="1" height="1" fill="#00005a"/>
<rect x="513" y="287" width="1" height="1" fill="#000032"/>
<rect x="518" y="287" width="1" height="1" fill="#000032"/>
<rect x="206" y="288" width="1" height="1" fill="#00003c"/>
<rect x="346" y="288" width="1" height="1" fill="#000082"/>
<rect x="525" y="288" width="1" height="1" fill="#000046"/>
<rect x="543" y="288" width="1" height="1" fill="#00005a"/>
<rect x="614" y="288" width="1" height="1" fill="#000046"/>
<rect x="144" y="289" width="1" height="1" fill="#00003c"/>
<rect x="284" y="289" width="1" height="1" fill="#00003c"/>
<rect x="481" y="289" width="1" height="1" fill="#000046"/>
<rect x="542" y="289" width="1" height="1" fill="#00003c"/>
<rect x="587" y="289" width="1" height="1" fill="#00005a"/>
<rect x="40" y="290" width="1" height="1" fill="#000032"/>
<rect x="215" y="290" width="1" height="1" fill="#000064"/>
<rect x="357" y="290" width="1" height="1" fill="#000046"/>
<rect x="381" y="290" width="1" height="1" fill="#000064"/>
<rect x="552" y="290" width="1" height="1" fill="#000078"/>
<rect x="40" y="291" width="1" height="1" fill="#00005a"/>
<rect x="213" y="291" width="1" height="1" fill="#000064"/>
<rect x="297" y="291" width="1" height="1" fill="#000046"/>
<rect x="322" y="291" width="1" height="1" fill="#000063"/>
<rect x="355" y="291" width="1" height="1" fill="#000064"/>
<rect x="361" y="291" width="1" height="1" fill="#00003c"/>
<rect x="423" y="291" width="1" height="1" fill="#000046"/>
<rect x="485" y="291" width="1" height="1" fill="#000064"/>
<rect x="618" y="291" width="1" height="1" fill="#000050"/>
<rect x="322" y="292" width="1" height="1" fill="#00004f"/>
<rect x="371" y="292" width="1" height="1" fill="#000064"/>
<rect x="448" y="292" width="1" height="1" fill="#00003c"/>
<rect x="489" y="292" width="1" height="1" fill="#00005a"/>
<rect x="136" y="293" width="1" height="1" fill="#00003c"/>
<rect x="371" y="293" width="1" height="1" fill="#000083"/>
<rect x="436" y="293" width="1" height="1" fill="#00006a"/>
<rect x="507" y="293" width="1" height="1" fill="#00004e"/>
<rect x="521" y="293" width="1" height="1" fill="#00005a"/>
<rect x="524" y="293" width="1" height="1" fill="#00006d"/>
<rect x="534" y="293" width="1" height="1" fill="#00006e"/>
<rect x="216" y="294" width="1" height="1" fill="#000070"/>
<rect x="233" y="294" width="1" height="1" fill="#000083"/>
<rect x="238" y="294" width="1" height="1" fill="#000064"/>
<rect x="322" y="294" width="1" height="1" fill="#000068"/>
<rect x="389" y="294" width="1" height="1" fill="#000066"/>
<rect x="392" y="294" width="1" height="1" fill="#000073"/>
<rect x="456" y="294" width="1" height="1" fill="#000042"/>
<rect x="469" y="294" width="1" height="1" fill="#000072"/>
<rect x="480" y="294" width="1" height="1" fill="#00007b"/>
<rect x="510" y="294" width="1" height="1" fill="#00003f"/>
<rect x="539" y="294" width="1" height="1" fill="#000078"/>
<rect x="155" y="295" width="1" height="1" fill="#000064"/>
<rect x="156" y="295" width="1" height="1" fill="#000050"/>
<rect x="164" y="295" width="1" height="1" fill="#000046"/>
<rect x="187" y="295" width="1" height="1" fill="#000050"/>
<rect x="211" y="295" width="1" height="1" fill="#00004a"/>
<rect x="251" y="295" width="1" height="1" fill="#000060"/>
<rect x="252" y="295" width="1" height="1" fill="#00004a"/>
<rect x="294" y="295" width="1" height="1" fill="#000064"/>
<rect x="295" y="295" width="1" height="1" fill="#00008d"/>
<rect x="296" y="295" width="1" height="1" fill="#000089"/>
<rect x="308" y="295" width="1" height="1" fill="#000082"/>
<rect x="334" y="295" width="1" height="1" fill="#000032"/>
<rect x="398" y="295" width="1" height="1" fill="#00006f"/>
<rect x="402" y="295" width="1" height="1" fill="#000057"/>
<rect x="407" y="295" width="1" height="1" fill="#00003e"/>
<rect x="418" y="295" width="1" height="1" fill="#000090"/>
<rect x="427" y="295" width="1" height="1" fill="#000096"/>
<rect x="440" y="295" width="1" height="1" fill="#000092"/>
<rect x="444" y="295" width="1" height="1" fill="#000032"/>
<rect x="452" y="295" width="1" height="1" fill="#00003e"/>
<rect x="462" y="295" width="1" height="1" fill="#00005a"/>
<rect x="474" y="295" width="1" height="1" fill="#000064"/>
<rect x="475" y="295" width="1" height="1" fill="#00005d"/>
<rect x="484" y="295" width="1" height="1" fill="#000062"/>
<rect x="485" y="295" width="1" height="1" fill="#000091"/>
<rect x="488" y="295" width="1" height="1" fill="#00005b"/>
<rect x="491" y="295" width="1" height="1" fill="#000089"/>
<rect x="500" y="295" width="1" height="1" fill="#000082"/>
<rect x="514" y="295" width="1" height="1" fill="#000064"/>
<rect x="539" y="295" width="1" height="1" fill="#000062"/>
<rect x="541" y="295" width="1" height="1" fill="#000076"/>
<rect x="550" y="295" width="1" height="1" fill="#00005d"/>
<rect x="551" y="295" width="1" height="1" fill="#000074"/>
<rect x="572" y="295" width="1" height="1" fill="#00003c"/>
<rect x="576" y="295" width="1" height="1" fill="#000053"/>
<rect x="578" y="295" width="1" height="1" fill="#000047"/>
<rect x="581" y="295" width="1" height="1" fill="#000042"/>
<rect x="585" y="295" width="1" height="1" fill="#00005a"/>
<rect x="593" y="295" width="1" height="1" fill="#000061"/>
<rect x="609" y="295" width="1" height="1" fill="#00008e"/>
<rect x="618" y="295" width="1" height="1" fill="#000046"/>
<rect x="120" y="296" width="1" height="1" fill="#00003c"/>
<rect x="157" y="296" width="1" height="1" fill="#00005c"/>
<rect x="165" y="296" width="1" height="1" fill="#000046"/>
<rect x="166" y="296" width="1" height="1" fill="#000073"/>
<rect x="169" y="296" width="1" height="1" fill="#00005a"/>
<rect x="172" y="296" width="1" height="1" fill="#00007d"/>
<rect x="178" y="296" width="1" height="1" fill="#000054"/>
<rect x="179" y="296" width="1" height="1" fill="#000064"/>
<rect x="184" y="296" width="1" height="1" fill="#000055"/>
<rect x="186" y="296" width="1" height="1" fill="#000046"/>
<rect x="188" y="296" width="1" height="1" fill="#000063"/>
<rect x="194" y="296" width="1" height="1" fill="#00008e"/>
<rect x="200" y="296" width="1" height="1" fill="#000042"/>
<rect x="207" y="296" width="1" height="1" fill="#000058"/>
<rect x="213" y="296" width="1" height="1" fill="#00003e"/>
<rect x="235" y="296" width="1" height="1" fill="#000073"/>
<rect x="237" y="296" width="1" height="1" fill="#00008c"/>
<rect x="253" y="296" width="1" height="1" fill="#000062"/>
<rect x="254" y="296" width="1" height="1" fill="#00006b"/>
<rect x="260" y="296" width="1" height="1" fill="#00007a"/>
<rect x="279" y="296" width="1" height="1" fill="#000032"/>
<rect x="286" y="296" width="1" height="1" fill="#000062"/>
<rect x="290" y="296" width="1" height="1" fill="#00006f"/>
<rect x="293" y="296" width="1" height="1" fill="#00004c"/>
<rect x="304" y="296" width="1" height="1" fill="#000048"/>
<rect x="316" y="296" width="1" height="1" fill="#000065"/>
<rect x="320" y="296" width="1" height="1" fill="#00007b"/>
<rect x="340" y="296" width="1" height="1" fill="#00003d"/>
<rect x="341" y="296" width="1" height="1" fill="#000052"/>
<rect x="400" y="296" width="1" height="1" fill="#000086"/>
<rect x="442" y="296" width="1" height="1" fill="#000091"/>
<rect x="456" y="296" width="1" height="1" fill="#000064"/>
<rect x="464" y="296" width="1" height="1" fill="#000032"/>
<rect x="562" y="296" width="1" height="1" fill="#00005a"/>
<rect x="574" y="296" width="1" height="1" fill="#000081"/>
<rect x="118" y="297" width="1" height="1" fill="#000050"/>
<rect x="141" y="297" width="1" height="1" fill="#00005a"/>
<rect x="247" y="297" width="1" height="1" fill="#000074"/>
<rect x="272" y="297" width="1" height="1" fill="#00005d"/>
<rect x="300" y="297" width="1" height="1" fill="#000064"/>
<rect x="308" y="297" width="1" height="1" fill="#000044"/>
<rect x="333" y="297" width="1" height="1" fill="#000046"/>
<rect x="366" y="297" width="1" height="1" fill="#000046"/>
<rect x="367" y="297" width="1" height="1" fill="#00003c"/>
<rect x="379" y="297" width="1" height="1" fill="#000032"/>
<rect x="396" y="297" width="1" height="1" fill="#000082"/>
<rect x="108" y="298" width="1" height="1" fill="#000064"/>
<rect x="152" y="298" width="1" height="1" fill="#000078"/>
<rect x="264" y="298" width="1" height="1" fill="#00003c"/>
<rect x="294" y="298" width="1" height="1" fill="#00003c"/>
<rect x="364" y="298" width="1" height="1" fill="#000046"/>
<rect x="370" y="298" width="1" height="1" fill="#000046"/>
<rect x="493" y="298" width="1" height="1" fill="#000082"/>
<rect x="207" y="299" width="1" height="1" fill="#000032"/>
<rect x="253" y="299" width="1" height="1" fill="#000046"/>
<rect x="312" y="299" width="1" height="1" fill="#000064"/>
<rect x="335" y="299" width="1" height="1" fill="#000064"/>
<rect x="563" y="299" width="1" height="1" fill="#000064"/>
<rect x="31" y="300" width="1" height="1" fill="#000032"/>
<rect x="68" y="300" width="1" height="1" fill="#00005a"/>
<rect x="268" y="300" width="1" height="1" fill="#000046"/>
<rect x="302" y="300" width="1" height="1" fill="#00005a"/>
<rect x="306" y="300" width="1" height="1" fill="#000032"/>
<rect x="480" y="300" width="1" height="1" fill="#00003c"/>
<rect x="553" y="300" width="1" height="1" fill="#000050"/>
<rect x="564" y="300" width="1" height="1" fill="#000078"/>
<rect x="95" y="301" width="1" height="1" fill="#00003c"/>
<rect x="154" y="301" width="1" height="1" fill="#00005a"/>
<rect x="261" y="301" width="1" height="1" fill="#00003c"/>
<rect x="266" y="301" width="1" height="1" fill="#000032"/>
<rect x="402" y="301" width="1" height="1" fill="#000032"/>
<rect x="516" y="301" width="1" height="1" fill="#00005a"/>
<rect x="545" y="301" width="1" height="1" fill="#000064"/>
<rect x="592" y="301" width="1" height="1" fill="#00003c"/>
<rect x="40" y="302" width="1" height="1" fill="#00005a"/>
<rect x="268" y="302" width="1" height="1" fill="#000064"/>
<rect x="277" y="302" width="1" height="1" fill="#000078"/>
<rect x="281" y="302" width="1" height="1" fill="#00003c"/>
<rect x="359" y="302" width="1" height="1" fill="#000032"/>
<rect x="387" y="302" width="1" height="1" fill="#000046"/>
<rect x="532" y="302" width="1" height="1" fill="#000046"/>
<rect x="276" y="303" width="1" height="1" fill="#000050"/>
<rect x="476" y="303" width="1" height="1" fill="#000046"/>
<rect x="506" y="303" width="1" height="1" fill="#000082"/>
<rect x="586" y="303" width="1" height="1" fill="#000082"/>
<rect x="137" y="304" width="1" height="1" fill="#00005a"/>
<rect x="162" y="304" width="1" height="1" fill="#000078"/>
<rect x="388" y="304" width="1" height="1" fill="#000032"/>
<rect x="413" y="304" width="1" height="1" fill="#000032"/>
<rect x="575" y="304" width="1" height="1" fill="#000064"/>
<rect x="155" y="305" width="1" height="1" fill="#00003c"/>
<rect x="227" y="305" width="1" height="1" fill="#000082"/>
<rect x="292" y="305" width="1" height="1" fill="#00005a"/>
<rect x="363" y="305" width="1" height="1" fill="#000078"/>
<rect x="587" y="305" width="1" height="1" fill="#000064"/>
<rect x="81" y="306" width="1" height="1" fill="#000046"/>
<rect x="535" y="306" width="1" height="1" fill="#00003c"/>
<rect x="608" y="306" width="1" height="1" fill="#000050"/>
<rect x="39" y="307" width="1" height="1" fill="#000078"/>
<rect x="171" y="307" width="1" height="1" fill="#000032"/>
<rect x="296" y="307" width="1" height="1" fill="#00003c"/>
<rect x="428" y="307" width="1" height="1" fill="#000046"/>
<rect x="436" y="307" width="1" height="1" fill="#00005d"/>
<rect x="498" y="307" width="1" height="1" fill="#000046"/>
<rect x="36" y="308" width="1" height="1" fill="#000078"/>
<rect x="84" y="308" width="1" height="1" fill="#000046"/>
<rect x="103" y="308" width="1" height="1" fill="#00003c"/>
<rect x="109" y="308" width="1" height="1" fill="#000082"/>
<rect x="113" y="308" width="1" height="1" fill="#00005a"/>
<rect x="134" y="308" width="1" height="1" fill="#000032"/>
<rect x="163" y="308" width="1" height="1" fill="#000032"/>
<rect x="173" y="309" width="1" height="1" fill="#000082"/>
<rect x="264" y="309" width="1" height="1" fill="#000032"/>
<rect x="381" y="309" width="1" height="1" fill="#000046"/>
<rect x="436" y="309" width="1" height="1" fill="#000059"/>
<rect x="612" y="309" width="1" height="1" fill="#00005a"/>
<rect x="434" y="310" width="1" height="1" fill="#000032"/>
<rect x="436" y="310" width="1" height="1" fill="#000053"/>
<rect x="574" y="310" width="1" height="1" fill="#00003c"/>
<rect x="181" y="311" width="1" height="1" fill="#00005a"/>
<rect x="202" y="311" width="1" height="1" fill="#00005a"/>
<rect x="207" y="311" width="1" height="1" fill="#000078"/>
<rect x="227" y="311" width="1" height="1" fill="#00003c"/>
<rect x="256" y="311" width="1" height="1" fill="#000046"/>
<rect x="359" y="311" width="1" height="1" fill="#00005a"/>
<rect x="371" y="311" width="1" height="1" fill="#000046"/>
<rect x="379" y="311" width="1" height="1" fill="#00003c"/>
<rect x="436" y="311" width="1" height="1" fill="#00006e"/>
<rect x="499" y="311" width="1" height="1" fill="#00003c"/>
<rect x="529" y="311" width="1" height="1" fill="#00005a"/>
<rect x="172" y="312" width="1" height="1" fill="#000032"/>
<rect x="203" y="312" width="1" height="1" fill="#00005a"/>
<rect x="222" y="312" width="1" height="1" fill="#00003c"/>
<rect x="425" y="312" width="1" height="1" fill="#00003c"/>
<rect x="440" y="312" width="1" height="1" fill="#00005a"/>
<rect x="486" y="312" width="1" height="1" fill="#000050"/>
<rect x="22" y="313" width="1" height="1" fill="#000064"/>
<rect x="259" y="313" width="1" height="1" fill="#000046"/>
<rect x="322" y="313" width="1" height="1" fill="#000071"/>
<rect x="388" y="313" width="1" height="1" fill="#00005a"/>
<rect x="414" y="313" width="1" height="1" fill="#000046"/>
<rect x="96" y="314" width="1" height="1" fill="#00005a"/>
<rect x="144" y="314" width="1" height="1" fill="#000032"/>
<rect x="226" y="314" width="1" height="1" fill="#00003c"/>
<rect x="23" y="315" width="1" height="1" fill="#000078"/>
<rect x="197" y="315" width="1" height="1" fill="#000032"/>
<rect x="301" y="315" width="1" height="1" fill="#00003c"/>
<rect x="608" y="315" width="1" height="1" fill="#00005a"/>
<rect x="613" y="315" width="1" height="1" fill="#000032"/>
<rect x="131" y="316" width="1" height="1" fill="#000032"/>
<rect x="382" y="316" width="1" height="1" fill="#000064"/>
<rect x="391" y="316" width="1" height="1" fill="#000046"/>
<rect x="477" y="316" width="1" height="1" fill="#000078"/>
<rect x="516" y="316" width="1" height="1" fill="#00003c"/>
<rect x="587" y="316" width="1" height="1" fill="#000050"/>
<rect x="214" y="317" width="1" height="1" fill="#000032"/>
<rect x="257" y="317" width="1" height="1" fill="#00003c"/>
<rect x="328" y="317" width="1" height="1" fill="#000046"/>
<rect x="347" y="317" width="1" height="1" fill="#000046"/>
<rect x="358" y="317" width="1" height="1" fill="#000082"/>
<rect x="413" y="317" width="1" height="1" fill="#000032"/>
<rect x="575" y="317" width="1" height="1" fill="#00005a"/>
<rect x="612" y="317" width="1" height="1" fill="#00003c"/>
<rect x="185" y="318" width="1" height="1" fill="#000050"/>
<rect x="268" y="318" width="1" height="1" fill="#00003c"/>
<rect x="337" y="318" width="1" height="1" fill="#000050"/>
<rect x="582" y="318" width="1" height="1" fill="#000082"/>
<rect x="590" y="318" width="1" height="1" fill="#000050"/>
<rect x="606" y="318" width="1" height="1" fill="#000064"/>
<rect x="55" y="319" width="1" height="1" fill="#000032"/>
<rect x="323" y="319" width="1" height="1" fill="#000032"/>
<rect x="417" y="319" width="1" height="1" fill="#000032"/>
<rect x="425" y="319" width="1" height="1" fill="#000050"/>
<rect x="498" y="319" width="1" height="1" fill="#00005a"/>
<rect x="610" y="319" width="1" height="1" fill="#00005a"/>
<rect x="146" y="320" width="1" height="1" fill="#000050"/>
<rect x="323" y="320" width="1" height="1" fill="#000046"/>
<rect x="341" y="320" width="1" height="1" fill="#00005a"/>
<rect x="436" y="320" width="1" height="1" fill="#000068"/>
<rect x="467" y="320" width="1" height="1" fill="#000032"/>
<rect x="497" y="320" width="1" height="1" fill="#000078"/>
<rect x="521" y="320" width="1" height="1" fill="#00003c"/>
<rect x="81" y="321" width="1" height="1" fill="#000064"/>
<rect x="160" y="321" width="1" height="1" fill="#00003c"/>
<rect x="348" y="321" width="1" height="1" fill="#000064"/>
<rect x="443" y="321" width="1" height="1" fill="#000046"/>
<rect x="451" y="321" width="1" height="1" fill="#000032"/>
<rect x="515" y="321" width="1" height="1" fill="#00003c"/>
<rect x="557" y="321" width="1" height="1" fill="#000032"/>
<rect x="252" y="322" width="1" height="1" fill="#00003c"/>
<rect x="321" y="322" width="1" height="1" fill="#000082"/>
<rect x="395" y="322" width="1" height="1" fill="#000082"/>
<rect x="470" y="322" width="1" height="1" fill="#000064"/>
<rect x="517" y="322" width="1" height="1" fill="#0000c5"/>
<rect x="521" y="322" width="1" height="1" fill="#000066"/>
<rect x="525" y="322" width="1" height="1" fill="#000088"/>
<rect x="527" y="322" width="1" height="1" fill="#0000a3"/>
<rect x="605" y="322" width="1" height="1" fill="#000032"/>
<rect x="609" y="322" width="1" height="1" fill="#000064"/>
<rect x="70" y="323" width="1" height="1" fill="#00009e"/>
<rect x="104" y="323" width="1" height="1" fill="#00003c"/>
<rect x="194" y="323" width="1" height="1" fill="#000050"/>
<rect x="223" y="323" width="1" height="1" fill="#000050"/>
<rect x="224" y="323" width="1" height="1" fill="#0000b9"/>
<rect x="306" y="323" width="1" height="1" fill="#000046"/>
<rect x="372" y="323" width="1" height="1" fill="#0000be"/>
<rect x="380" y="323" width="1" height="1" fill="#00009f"/>
<rect x="506" y="323" width="1" height="1" fill="#00005c"/>
<rect x="513" y="323" width="1" height="1" fill="#0000b5"/>
<rect x="514" y="323" width="1" height="1" fill="#00008c"/>
<rect x="516" y="323" width="1" height="1" fill="#0000a6"/>
<rect x="518" y="323" width="1" height="1" fill="#0000ca"/>
<rect x="519" y="323" width="1" height="1" fill="#00007e"/>
<rect x="520" y="323" width="1" height="1" fill="#000071"/>
<rect x="522" y="323" width="1" height="1" fill="#000087"/>
<rect x="523" y="323" width="1" height="1" fill="#000066"/>
<rect x="526" y="323" width="1" height="1" fill="#0000c0"/>
<rect x="64" y="324" width="1" height="1" fill="#000097"/>
<rect x="66" y="324" width="1" height="1" fill="#0000ab"/>
<rect x="67" y="324" width="1" height="1" fill="#000052"/>
<rect x="68" y="324" width="1" height="1" fill="#00009b"/>
<rect x="69" y="324" width="1" height="1" fill="#000080"/>
<rect x="72" y="324" width="1" height="1" fill="#0000bc"/>
<rect x="74" y="324" width="1" height="1" fill="#000093"/>
<rect x="75" y="324" width="1" height="1" fill="#00007d"/>
<rect x="88" y="324" width="1" height="1" fill="#000050"/>
<rect x="203" y="324" width="1" height="1" fill="#000050"/>
<rect x="216" y="324" width="1" height="1" fill="#000062"/>
<rect x="217" y="324" width="1" height="1" fill="#0000ca"/>
<rect x="220" y="324" width="1" height="1" fill="#000058"/>
<rect x="225" y="324" width="1" height="1" fill="#0000a2"/>
<rect x="226" y="324" width="1" height="1" fill="#000099"/>
<rect x="227" y="324" width="1" height="1" fill="#000069"/>
<rect x="228" y="324" width="1" height="1" fill="#000097"/>
<rect x="260" y="324" width="1" height="1" fill="#00003c"/>
<rect x="271" y="324" width="1" height="1" fill="#000082"/>
<rect x="322" y="324" width="1" height="1" fill="#00005e"/>
<rect x="366" y="324" width="1" height="1" fill="#000084"/>
<rect x="367" y="324" width="1" height="1" fill="#000067"/>
<rect x="368" y="324" width="1" height="1" fill="#0000c4"/>
<rect x="373" y="324" width="1" height="1" fill="#00005d"/>
<rect x="375" y="324" width="1" height="1" fill="#00006b"/>
<rect x="376" y="324" width="1" height="1" fill="#0000b4"/>
<rect x="377" y="324" width="1" height="1" fill="#00006e"/>
<rect x="378" y="324" width="1" height="1" fill="#00007a"/>
<rect x="381" y="324" width="1" height="1" fill="#000087"/>
<rect x="382" y="324" width="1" height="1" fill="#0000af"/>
<rect x="383" y="324" width="1" height="1" fill="#00006f"/>
<rect x="384" y="324" width="1" height="1" fill="#00009f"/>
<rect x="387" y="324" width="1" height="1" fill="#0000b9"/>
<rect x="390" y="324" width="1" height="1" fill="#00008e"/>
<rect x="392" y="324" width="1" height="1" fill="#000032"/>
<rect x="413" y="324" width="1" height="1" fill="#000087"/>
<rect x="435" y="324" width="1" height="1" fill="#000085"/>
<rect x="446" y="324" width="1" height="1" fill="#00008d"/>
<rect x="452" y="324" width="1" height="1" fill="#00005f"/>
<rect x="455" y="324" width="1" height="1" fill="#00005a"/>
<rect x="456" y="324" width="1" height="1" fill="#0000ab"/>
<rect x="467" y="324" width="1" height="1" fill="#000080"/>
<rect x="469" y="324" width="1" height="1" fill="#0000c3"/>
<rect x="473" y="324" width="1" height="1" fill="#000065"/>
<rect x="502" y="324" width="1" height="1" fill="#00006c"/>
<rect x="504" y="324" width="1" height="1" fill="#000055"/>
<rect x="505" y="324" width="1" height="1" fill="#000087"/>
<rect x="508" y="324" width="1" height="1" fill="#0000c8"/>
<rect x="509" y="324" width="1" height="1" fill="#0000a9"/>
<rect x="510" y="324" width="1" height="1" fill="#000086"/>
<rect x="528" y="324" width="1" height="1" fill="#000058"/>
<rect x="531" y="324" width="1" height="1" fill="#0000be"/>
<rect x="532" y="324" width="1" height="1" fill="#000068"/>
<rect x="533" y="324" width="1" height="1" fill="#000082"/>
<rect x="536" y="324" width="1" height="1" fill="#00007a"/>
<rect x="539" y="324" width="1" height="1" fill="#000084"/>
<rect x="546" y="324" width="1" height="1" fill="#000087"/>
<rect x="553" y="324" width="1" height="1" fill="#00004d"/>
<rect x="560" y="324" width="1" height="1" fill="#000078"/>
<rect x="561" y="324" width="1" height="1" fill="#000094"/>
<rect x="571" y="324" width="1" height="1" fill="#0000cd"/>
<rect x="576" y="324" width="1" height="1" fill="#000051"/>
<rect x="594" y="324" width="1" height="1" fill="#000061"/>
<rect x="595" y="324" width="1" height="1" fill="#00008f"/>
<rect x="596" y="324" width="1" height="1" fill="#00005a"/>
<rect x="607" y="324" width="1" height="1" fill="#00005e"/>
<rect x="609" y="324" width="1" height="1" fill="#000032"/>
<rect x="610" y="324" width="1" height="1" fill="#00006f"/>
<rect x="619" y="324" width="1" height="1" fill="#00009d"/>
<rect x="24" y="325" width="1" height="1" fill="#000078"/>
<rect x="47" y="325" width="1" height="1" fill="#000077"/>
<rect x="56" y="325" width="1" height="1" fill="#0000af"/>
<rect x="58" y="325" width="1" height="1" fill="#0000a7"/>
<rect x="59" y="325" width="1" height="1" fill="#000064"/>
<rect x="60" y="325" width="1" height="1" fill="#00009c"/>
<rect x="61" y="325" width="1" height="1" fill="#0000b9"/>
<rect x="65" y="325" width="1" height="1" fill="#0000c5"/>
<rect x="71" y="325" width="1" height="1" fill="#000095"/>
<rect x="87" y="325" width="1" height="1" fill="#0000b9"/>
<rect x="97" y="325" width="1" height="1" fill="#000087"/>
<rect x="106" y="325" width="1" height="1" fill="#0000c7"/>
<rect x="119" y="325" width="1" height="1" fill="#000065"/>
<rect x="121" y="325" width="1" height="1" fill="#000056"/>
<rect x="126" y="325" width="1" height="1" fill="#0000a3"/>
<rect x="132" y="325" width="1" height="1" fill="#0000b4"/>
<rect x="134" y="325" width="1" height="1" fill="#0000c1"/>
<rect x="137" y="325" width="1" height="1" fill="#00003c"/>
<rect x="147" y="325" width="1" height="1" fill="#00006e"/>
<rect x="149" y="325" width="1" height="1" fill="#000053"/>
<rect x="158" y="325" width="1" height="1" fill="#000069"/>
<rect x="170" y="325" width="1" height="1" fill="#000071"/>
<rect x="178" y="325" width="1" height="1" fill="#0000a8"/>
<rect x="179" y="325" width="1" height="1" fill="#000078"/>
<rect x="187" y="325" width="1" height="1" fill="#000085"/>
<rect x="202" y="325" width="1" height="1" fill="#000081"/>
<rect x="210" y="325" width="1" height="1" fill="#00006b"/>
<rect x="214" y="325" width="1" height="1" fill="#00008e"/>
<rect x="215" y="325" width="1" height="1" fill="#0000b9"/>
<rect x="218" y="325" width="1" height="1" fill="#000092"/>
<rect x="229" y="325" width="1" height="1" fill="#00005a"/>
<rect x="233" y="325" width="1" height="1" fill="#00009d"/>
<rect x="234" y="325" width="1" height="1" fill="#000086"/>
<rect x="244" y="325" width="1" height="1" fill="#00004f"/>
<rect x="249" y="325" width="1" height="1" fill="#00006d"/>
<rect x="263" y="325" width="1" height="1" fill="#000046"/>
<rect x="274" y="325" width="1" height="1" fill="#000099"/>
<rect x="279" y="325" width="1" height="1" fill="#000065"/>
<rect x="283" y="325" width="1" height="1" fill="#000072"/>
<rect x="300" y="325" width="1" height="1" fill="#000061"/>
<rect x="314" y="325" width="1" height="1" fill="#0000b1"/>
<rect x="342" y="325" width="1" height="1" fill="#000087"/>
<rect x="345" y="325" width="1" height="1" fill="#00006f"/>
<rect x="350" y="325" width="1" height="1" fill="#000091"/>
<rect x="358" y="325" width="1" height="1" fill="#00006c"/>
<rect x="371" y="325" width="1" height="1" fill="#0000bd"/>
<rect x="385" y="325" width="1" height="1" fill="#0000c4"/>
<rect x="386" y="325" width="1" height="1" fill="#0000c2"/>
<rect x="389" y="325" width="1" height="1" fill="#0000b4"/>
<rect x="391" y="325" width="1" height="1" fill="#00008a"/>
<rect x="395" y="325" width="1" height="1" fill="#00004e"/>
<rect x="396" y="325" width="1" height="1" fill="#000066"/>
<rect x="397" y="325" width="1" height="1" fill="#0000b6"/>
<rect x="399" y="325" width="1" height="1" fill="#00004f"/>
<rect x="404" y="325" width="1" height="1" fill="#0000c2"/>
<rect x="405" y="325" width="1" height="1" fill="#0000a4"/>
<rect x="406" y="325" width="1" height="1" fill="#00005d"/>
<rect x="409" y="325" width="1" height="1" fill="#000067"/>
<rect x="411" y="325" width="1" height="1" fill="#000062"/>
<rect x="416" y="325" width="1" height="1" fill="#000075"/>
<rect x="421" y="325" width="1" height="1" fill="#000084"/>
<rect x="422" y="325" width="1" height="1" fill="#0000af"/>
<rect x="424" y="325" width="1" height="1" fill="#00006b"/>
<rect x="425" y="325" width="1" height="1" fill="#00007d"/>
<rect x="427" y="325" width="1" height="1" fill="#0000a1"/>
<rect x="429" y="325" width="1" height="1" fill="#000086"/>
<rect x="430" y="325" width="1" height="1" fill="#0000ae"/>
<rect x="431" y="325" width="1" height="1" fill="#0000ad"/>
<rect x="433" y="325" width="1" height="1" fill="#000061"/>
<rect x="436" y="325" width="1" height="1" fill="#000088"/>
<rect x="442" y="325" width="1" height="1" fill="#00006b"/>
<rect x="443" y="325" width="1" height="1" fill="#00006c"/>
<rect x="450" y="325" width="1" height="1" fill="#00009a"/>
<rect x="455" y="325" width="1" height="1" fill="#000069"/>
<rect x="457" y="325" width="1" height="1" fill="#00007d"/>
<rect x="461" y="325" width="1" height="1" fill="#000076"/>
<rect x="464" y="325" width="1" height="1" fill="#0000b5"/>
<rect x="465" y="325" width="1" height="1" fill="#000064"/>
<rect x="466" y="325" width="1" height="1" fill="#000074"/>
<rect x="468" y="325" width="1" height="1" fill="#00007f"/>
<rect x="470" y="325" width="1" height="1" fill="#000064"/>
<rect x="472" y="325" width="1" height="1" fill="#00004f"/>
<rect x="475" y="325" width="1" height="1" fill="#0000a2"/>
<rect x="476" y="325" width="1" height="1" fill="#0000b7"/>
<rect x="477" y="325" width="1" height="1" fill="#000074"/>
<rect x="479" y="325" width="1" height="1" fill="#000056"/>
<rect x="482" y="325" width="1" height="1" fill="#0000bb"/>
<rect x="484" y="325" width="1" height="1" fill="#00005d"/>
<rect x="485" y="325" width="1" height="1" fill="#00008f"/>
<rect x="490" y="325" width="1" height="1" fill="#0000c9"/>
<rect x="492" y="325" width="1" height="1" fill="#0000cb"/>
<rect x="493" y="325" width="1" height="1" fill="#000099"/>
<rect x="494" y="325" width="1" height="1" fill="#00005e"/>
<rect x="497" y="325" width="1" height="1" fill="#000061"/>
<rect x="499" y="325" width="1" height="1" fill="#00009c"/>
<rect x="500" y="325" width="1" height="1" fill="#00004c"/>
<rect x="501" y="325" width="1" height="1" fill="#0000a9"/>
<rect x="511" y="325" width="1" height="1" fill="#000068"/>
<rect x="535" y="325" width="1" height="1" fill="#00009d"/>
<rect x="537" y="325" width="1" height="1" fill="#0000b2"/>
<rect x="538" y="325" width="1" height="1" fill="#000063"/>
<rect x="542" y="325" width="1" height="1" fill="#0000a5"/>
<rect x="543" y="325" width="1" height="1" fill="#00006b"/>
<rect x="545" y="325" width="1" height="1" fill="#000061"/>
<rect x="546" y="325" width="1" height="1" fill="#00003c"/>
<rect x="547" y="325" width="1" height="1" fill="#000057"/>
<rect x="550" y="325" width="1" height="1" fill="#0000c4"/>
<rect x="552" y="325" width="1" height="1" fill="#000081"/>
<rect x="557" y="325" width="1" height="1" fill="#000088"/>
<rect x="558" y="325" width="1" height="1" fill="#00004c"/>
<rect x="562" y="325" width="1" height="1" fill="#0000b1"/>
<rect x="563" y="325" width="1" height="1" fill="#000088"/>
<rect x="564" y="325" width="1" height="1" fill="#000059"/>
<rect x="565" y="325" width="1" height="1" fill="#0000ac"/>
<rect x="569" y="325" width="1" height="1" fill="#0000c2"/>
<rect x="572" y="325" width="1" height="1" fill="#0000ad"/>
<rect x="574" y="325" width="1" height="1" fill="#00008b"/>
<rect x="575" y="325" width="1" height="1" fill="#0000aa"/>
<rect x="578" y="325" width="1" height="1" fill="#0000bc"/>
<rect x="581" y="325" width="1" height="1" fill="#000053"/>
<rect x="582" y="325" width="1" height="1" fill="#0000c8"/>
<rect x="584" y="325" width="1" height="1" fill="#0000c3"/>
<rect x="585" y="325" width="1" height="1" fill="#000053"/>
<rect x="586" y="325" width="1" height="1" fill="#0000c7"/>
<rect x="587" y="325" width="1" height="1" fill="#00007d"/>
<rect x="592" y="325" width="1" height="1" fill="#000054"/>
<rect x="593" y="325" width="1" height="1" fill="#00004f"/>
<rect x="596" y="325" width="1" height="1" fill="#0000a2"/>
<rect x="598" y="325" width="1" height="1" fill="#0000bb"/>
<rect x="600" y="325" width="1" height="1" fill="#000079"/>
<rect x="609" y="325" width="1" height="1" fill="#0000a7"/>
<rect x="611" y="325" width="1" height="1" fill="#000097"/>
<rect x="618" y="325" width="1" height="1" fill="#000099"/>
<rect x="43" y="326" width="1" height="1" fill="#000059"/>
<rect x="48" y="326" width="1" height="1" fill="#0000ac"/>
<rect x="49" y="326" width="1" height="1" fill="#000098"/>
<rect x="52" y="326" width="1" height="1" fill="#000092"/>
<rect x="53" y="326" width="1" height="1" fill="#00008f"/>
<rect x="54" y="326" width="1" height="1" fill="#0000a3"/>
<rect x="69" y="326" width="1" height="1" fill="#000064"/>
<rect x="77" y="326" width="1" height="1" fill="#0000a4"/>
<rect x="79" y="326" width="1" height="1" fill="#000094"/>
<rect x="80" y="326" width="1" height="1" fill="#000070"/>
<rect x="82" y="326" width="1" height="1" fill="#0000b4"/>
<rect x="83" y="326" width="1" height="1" fill="#000093"/>
<rect x="85" y="326" width="1" height="1" fill="#0000a2"/>
<rect x="86" y="326" width="1" height="1" fill="#00004e"/>
<rect x="88" y="326" width="1" height="1" fill="#00009a"/>
<rect x="89" y="326" width="1" height="1" fill="#000090"/>
<rect x="90" y="326" width="1" height="1" fill="#0000a9"/>
<rect x="91" y="326" width="1" height="1" fill="#0000b8"/>
<rect x="92" y="326" width="1" height="1" fill="#0000bd"/>
<rect x="93" y="326" width="1" height="1" fill="#000055"/>
<rect x="94" y="326" width="1" height="1" fill="#00008e"/>
<rect x="95" y="326" width="1" height="1" fill="#00009f"/>
<rect x="100" y="326" width="1" height="1" fill="#000087"/>
<rect x="101" y="326" width="1" height="1" fill="#0000c9"/>
<rect x="102" y="326" width="1" height="1" fill="#000059"/>
<rect x="103" y="326" width="1" height="1" fill="#0000b7"/>
<rect x="104" y="326" width="1" height="1" fill="#000056"/>
<rect x="107" y="326" width="1" height="1" fill="#000077"/>
<rect x="109" y="326" width="1" height="1" fill="#000071"/>
<rect x="112" y="326" width="1" height="1" fill="#0000b0"/>
<rect x="113" y="326" width="1" height="1" fill="#000050"/>
<rect x="116" y="326" width="1" height="1" fill="#000069"/>
<rect x="118" y="326" width="1" height="1" fill="#000084"/>
<rect x="120" y="326" width="1" height="1" fill="#00009c"/>
<rect x="122" y="326" width="1" height="1" fill="#0000c1"/>
<rect x="123" y="326" width="1" height="1" fill="#000098"/>
<rect x="127" y="326" width="1" height="1" fill="#00005b"/>
<rect x="129" y="326" width="1" height="1" fill="#000056"/>
<rect x="138" y="326" width="1" height="1" fill="#00004b"/>
<rect x="139" y="326" width="1" height="1" fill="#0000cc"/>
<rect x="141" y="326" width="1" height="1" fill="#000055"/>
<rect x="143" y="326" width="1" height="1" fill="#00006c"/>
<rect x="144" y="326" width="1" height="1" fill="#000092"/>
<rect x="146" y="326" width="1" height="1" fill="#0000cd"/>
<rect x="148" y="326" width="1" height="1" fill="#00009b"/>
<rect x="150" y="326" width="1" height="1" fill="#000081"/>
<rect x="152" y="326" width="1" height="1" fill="#00007f"/>
<rect x="153" y="326" width="1" height="1" fill="#0000c1"/>
<rect x="155" y="326" width="1" height="1" fill="#000080"/>
<rect x="161" y="326" width="1" height="1" fill="#000070"/>
<rect x="163" y="326" width="1" height="1" fill="#00004c"/>
<rect x="164" y="326" width="1" height="1" fill="#000058"/>
<rect x="165" y="326" width="1" height="1" fill="#0000b6"/>
<rect x="168" y="326" width="1" height="1" fill="#000068"/>
<rect x="169" y="326" width="1" height="1" fill="#000069"/>
<rect x="173" y="326" width="1" height="1" fill="#00009d"/>
<rect x="176" y="326" width="1" height="1" fill="#0000bd"/>
<rect x="177" y="326" width="1" height="1" fill="#0000c3"/>
<rect x="179" y="326" width="1" height="1" fill="#0000c0"/>
<rect x="186" y="326" width="1" height="1" fill="#00004d"/>
<rect x="189" y="326" width="1" height="1" fill="#000079"/>
<rect x="191" y="326" width="1" height="1" fill="#00005b"/>
<rect x="192" y="326" width="1" height="1" fill="#000067"/>
<rect x="193" y="326" width="1" height="1" fill="#000077"/>
<rect x="194" y="326" width="1" height="1" fill="#000053"/>
<rect x="195" y="326" width="1" height="1" fill="#00007f"/>
<rect x="196" y="326" width="1" height="1" fill="#000071"/>
<rect x="204" y="326" width="1" height="1" fill="#000099"/>
<rect x="205" y="326" width="1" height="1" fill="#0000b0"/>
<rect x="206" y="326" width="1" height="1" fill="#000057"/>
<rect x="207" y="326" width="1" height="1" fill="#00008b"/>
<rect x="208" y="326" width="1" height="1" fill="#0000a0"/>
<rect x="212" y="326" width="1" height="1" fill="#0000c0"/>
<rect x="213" y="326" width="1" height="1" fill="#00006e"/>
<rect x="224" y="326" width="1" height="1" fill="#00003c"/>
<rect x="236" y="326" width="1" height="1" fill="#0000a4"/>
<rect x="237" y="326" width="1" height="1" fill="#0000a1"/>
<rect x="240" y="326" width="1" height="1" fill="#000077"/>
<rect x="241" y="326" width="1" height="1" fill="#0000c4"/>
<rect x="242" y="326" width="1" height="1" fill="#0000b6"/>
<rect x="245" y="326" width="1" height="1" fill="#000051"/>
<rect x="246" y="326" width="1" height="1" fill="#00006b"/>
<rect x="247" y="326" width="1" height="1" fill="#000066"/>
<rect x="250" y="326" width="1" height="1" fill="#000079"/>
<rect x="251" y="326" width="1" height="1" fill="#00009d"/>
<rect x="252" y="326" width="1" height="1" fill="#000061"/>
<rect x="253" y="326" width="1" height="1" fill="#0000bf"/>
<rect x="257" y="326" width="1" height="1" fill="#000069"/>
<rect x="258" y="326" width="1" height="1" fill="#000071"/>
<rect x="259" y="326" width="1" height="1" fill="#000032"/>
<rect x="260" y="326" width="1" height="1" fill="#000064"/>
<rect x="261" y="326" width="1" height="1" fill="#0000b6"/>
<rect x="265" y="326" width="1" height="1" fill="#000072"/>
<rect x="267" y="326" width="1" height="1" fill="#000056"/>
<rect x="268" y="326" width="1" height="1" fill="#000064"/>
<rect x="271" y="326" width="1" height="1" fill="#0000b2"/>
<rect x="273" y="326" width="1" height="1" fill="#0000a7"/>
<rect x="275" y="326" width="1" height="1" fill="#0000b9"/>
<rect x="276" y="326" width="1" height="1" fill="#000093"/>
<rect x="277" y="326" width="1" height="1" fill="#0000b4"/>
<rect x="280" y="326" width="1" height="1" fill="#0000bc"/>
<rect x="281" y="326" width="1" height="1" fill="#00004b"/>
<rect x="284" y="326" width="1" height="1" fill="#000071"/>
<rect x="285" y="326" width="1" height="1" fill="#0000b0"/>
<rect x="288" y="326" width="1" height="1" fill="#000086"/>
<rect x="290" y="326" width="1" height="1" fill="#0000c7"/>
<rect x="292" y="326" width="1" height="1" fill="#00006b"/>
<rect x="294" y="326" width="1" height="1" fill="#00009f"/>
<rect x="296" y="326" width="1" height="1" fill="#0000c8"/>
<rect x="297" y="326" width="1" height="1" fill="#00004d"/>
<rect x="298" y="326" width="1" height="1" fill="#0000b0"/>
<rect x="299" y="326" width="1" height="1" fill="#0000c9"/>
<rect x="301" y="326" width="1" height="1" fill="#00008d"/>
<rect x="302" y="326" width="1" height="1" fill="#0000bc"/>
<rect x="305" y="326" width="1" height="1" fill="#000099"/>
<rect x="306" y="326" width="1" height="1" fill="#0000c7"/>
<rect x="312" y="326" width="1" height="1" fill="#000080"/>
<rect x="318" y="326" width="1" height="1" fill="#000076"/>
<rect x="319" y="326" width="1" height="1" fill="#000094"/>
<rect x="321" y="326" width="1" height="1" fill="#000052"/>
<rect x="328" y="326" width="1" height="1" fill="#0000a1"/>
<rect x="329" y="326" width="1" height="1" fill="#000099"/>
<rect x="330" y="326" width="1" height="1" fill="#000050"/>
<rect x="331" y="326" width="1" height="1" fill="#00005b"/>
<rect x="332" y="326" width="1" height="1" fill="#00009b"/>
<rect x="335" y="326" width="1" height="1" fill="#0000b3"/>
<rect x="336" y="326" width="1" height="1" fill="#00008b"/>
<rect x="338" y="326" width="1" height="1" fill="#0000ac"/>
<rect x="340" y="326" width="1" height="1" fill="#00004f"/>
<rect x="343" y="326" width="1" height="1" fill="#0000c0"/>
<rect x="344" y="326" width="1" height="1" fill="#00005d"/>
<rect x="352" y="326" width="1" height="1" fill="#0000c4"/>
<rect x="353" y="326" width="1" height="1" fill="#0000b3"/>
<rect x="354" y="326" width="1" height="1" fill="#00007d"/>
<rect x="355" y="326" width="1" height="1" fill="#000059"/>
<rect x="356" y="326" width="1" height="1" fill="#0000bb"/>
<rect x="357" y="326" width="1" height="1" fill="#000096"/>
<rect x="359" y="326" width="1" height="1" fill="#000077"/>
<rect x="362" y="326" width="1" height="1" fill="#00009c"/>
<rect x="363" y="326" width="1" height="1" fill="#000087"/>
<rect x="364" y="326" width="1" height="1" fill="#000080"/>
<rect x="388" y="326" width="1" height="1" fill="#00006b"/>
<rect x="403" y="326" width="1" height="1" fill="#00009b"/>
<rect x="414" y="326" width="1" height="1" fill="#00004b"/>
<rect x="432" y="326" width="1" height="1" fill="#00006a"/>
<rect x="437" y="326" width="1" height="1" fill="#0000c0"/>
<rect x="439" y="326" width="1" height="1" fill="#00005a"/>
<rect x="441" y="326" width="1" height="1" fill="#0000a8"/>
<rect x="445" y="326" width="1" height="1" fill="#0000a8"/>
<rect x="449" y="326" width="1" height="1" fill="#00009d"/>
<rect x="454" y="326" width="1" height="1" fill="#00006d"/>
<rect x="462" y="326" width="1" height="1" fill="#000092"/>
<rect x="495" y="326" width="1" height="1" fill="#0000a4"/>
<rect x="496" y="326" width="1" height="1" fill="#0000ae"/>
<rect x="541" y="326" width="1" height="1" fill="#000061"/>
<rect x="544" y="326" width="1" height="1" fill="#00009e"/>
<rect x="555" y="326" width="1" height="1" fill="#000080"/>
<rect x="557" y="326" width="1" height="1" fill="#000064"/>
<rect x="559" y="326" width="1" height="1" fill="#0000cc"/>
<rect x="567" y="326" width="1" height="1" fill="#0000c4"/>
<rect x="568" y="326" width="1" height="1" fill="#00009b"/>
<rect x="579" y="326" width="1" height="1" fill="#0000a8"/>
<rect x="580" y="326" width="1" height="1" fill="#000065"/>
<rect x="588" y="326" width="1" height="1" fill="#0000a6"/>
<rect x="591" y="326" width="1" height="1" fill="#000065"/>
<rect x="597" y="326" width="1" height="1" fill="#00004c"/>
<rect x="613" y="326" width="1" height="1" fill="#000099"/>
<rect x="615" y="326" width="1" height="1" fill="#0000a8"/>
<rect x="616" y="326" width="1" height="1" fill="#0000c5"/>
<rect x="20" y="327" width="1" height="1" fill="#00006b"/>
<rect x="21" y="327" width="1" height="1" fill="#0000c2"/>
<rect x="22" y="327" width="1" height="1" fill="#0000c5"/>
<rect x="23" y="327" width="1" height="1" fill="#000077"/>
<rect x="25" y="327" width="1" height="1" fill="#0000b4"/>
<rect x="28" y="327" width="1" height="1" fill="#0000ca"/>
<rect x="29" y="327" width="1" height="1" fill="#000081"/>
<rect x="33" y="327" width="1" height="1" fill="#000083"/>
<rect x="35" y="327" width="1" height="1" fill="#000066"/>
<rect x="36" y="327" width="1" height="1" fill="#000068"/>
<rect x="37" y="327" width="1" height="1" fill="#0000b4"/>
<rect x="38" y="327" width="1" height="1" fill="#000076"/>
<rect x="39" y="327" width="1" height="1" fill="#0000cc"/>
<rect x="40" y="327" width="1" height="1" fill="#00008b"/>
<rect x="41" y="327" width="1" height="1" fill="#0000bd"/>
<rect x="42" y="327" width="1" height="1" fill="#0000cd"/>
<rect x="44" y="327" width="1" height="1" fill="#000082"/>
<rect x="45" y="327" width="1" height="1" fill="#0000bc"/>
<rect x="50" y="327" width="1" height="1" fill="#0000b8"/>
<rect x="51" y="327" width="1" height="1" fill="#00009e"/>
<rect x="111" y="327" width="1" height="1" fill="#0000c3"/>
<rect x="130" y="327" width="1" height="1" fill="#0000bb"/>
<rect x="137" y="327" width="1" height="1" fill="#00006c"/>
<rect x="142" y="327" width="1" height="1" fill="#000077"/>
<rect x="145" y="327" width="1" height="1" fill="#0000a8"/>
<rect x="166" y="327" width="1" height="1" fill="#0000af"/>
<rect x="167" y="327" width="1" height="1" fill="#000062"/>
<rect x="182" y="327" width="1" height="1" fill="#0000c4"/>
<rect x="188" y="327" width="1" height="1" fill="#000062"/>
<rect x="193" y="327" width="1" height="1" fill="#000064"/>
<rect x="198" y="327" width="1" height="1" fill="#0000bd"/>
<rect x="200" y="327" width="1" height="1" fill="#000081"/>
<rect x="239" y="327" width="1" height="1" fill="#000078"/>
<rect x="248" y="327" width="1" height="1" fill="#000072"/>
<rect x="264" y="327" width="1" height="1" fill="#00006a"/>
<rect x="311" y="327" width="1" height="1" fill="#00006b"/>
<rect x="315" y="327" width="1" height="1" fill="#000097"/>
<rect x="320" y="327" width="1" height="1" fill="#00007a"/>
<rect x="324" y="327" width="1" height="1" fill="#0000a9"/>
<rect x="327" y="327" width="1" height="1" fill="#0000a4"/>
<rect x="337" y="327" width="1" height="1" fill="#0000a7"/>
<rect x="341" y="327" width="1" height="1" fill="#00008c"/>
<rect x="369" y="327" width="1" height="1" fill="#00005a"/>
<rect x="425" y="327" width="1" height="1" fill="#000032"/>
<rect x="499" y="327" width="1" height="1" fill="#000046"/>
<rect x="30" y="328" width="1" height="1" fill="#00007d"/>
<rect x="32" y="328" width="1" height="1" fill="#000032"/>
<rect x="34" y="328" width="1" height="1" fill="#0000bf"/>
<rect x="50" y="328" width="1" height="1" fill="#000064"/>
<rect x="54" y="328" width="1" height="1" fill="#00005a"/>
<rect x="210" y="328" width="1" height="1" fill="#000032"/>
<rect x="322" y="328" width="1" height="1" fill="#000058"/>
<rect x="255" y="329" width="1" height="1" fill="#00003c"/>
<rect x="322" y="329" width="1" height="1" fill="#000072"/>
<rect x="453" y="329" width="1" height="1" fill="#000050"/>
<rect x="470" y="329" width="1" height="1" fill="#00005a"/>
<rect x="511" y="329" width="1" height="1" fill="#000046"/>
<rect x="545" y="329" width="1" height="1" fill="#000032"/>
<rect x="584" y="329" width="1" height="1" fill="#000082"/>
<rect x="248" y="330" width="1" height="1" fill="#000050"/>
<rect x="265" y="330" width="1" height="1" fill="#00005a"/>
<rect x="612" y="330" width="1" height="1" fill="#00005a"/>
<rect x="138" y="331" width="1" height="1" fill="#000050"/>
<rect x="189" y="331" width="1" height="1" fill="#00005a"/>
<rect x="434" y="331" width="1" height="1" fill="#000064"/>
<rect x="489" y="331" width="1" height="1" fill="#000078"/>
<rect x="609" y="331" width="1" height="1" fill="#00005a"/>
<rect x="270" y="332" width="1" height="1" fill="#000046"/>
<rect x="531" y="332" width="1" height="1" fill="#000050"/>
<rect x="102" y="333" width="1" height="1" fill="#000078"/>
<rect x="154" y="333" width="1" height="1" fill="#000046"/>
<rect x="363" y="333" width="1" height="1" fill="#000046"/>
<rect x="376" y="333" width="1" height="1" fill="#000032"/>
<rect x="544" y="333" width="1" height="1" fill="#00005a"/>
<rect x="35" y="334" width="1" height="1" fill="#000064"/>
<rect x="65" y="334" width="1" height="1" fill="#000046"/>
<rect x="139" y="334" width="1" height="1" fill="#000032"/>
<rect x="252" y="334" width="1" height="1" fill="#000032"/>
<rect x="268" y="334" width="1" height="1" fill="#000064"/>
<rect x="270" y="334" width="1" height="1" fill="#00003c"/>
<rect x="415" y="334" width="1" height="1" fill="#000096"/>
<rect x="491" y="334" width="1" height="1" fill="#000078"/>
<rect x="499" y="334" width="1" height="1" fill="#000046"/>
<rect x="550" y="334" width="1" height="1" fill="#000046"/>
<rect x="52" y="335" width="1" height="1" fill="#00005a"/>
<rect x="130" y="335" width="1" height="1" fill="#000050"/>
<rect x="230" y="335" width="1" height="1" fill="#00003c"/>
<rect x="415" y="335" width="1" height="1" fill="#000096"/>
<rect x="462" y="335" width="1" height="1" fill="#00005a"/>
<rect x="479" y="335" width="1" height="1" fill="#00003c"/>
<rect x="491" y="335" width="1" height="1" fill="#00005a"/>
<rect x="230" y="336" width="1" height="1" fill="#000064"/>
<rect x="245" y="336" width="1" height="1" fill="#00005a"/>
<rect x="415" y="336" width="1" height="1" fill="#000aff"/>
<rect x="433" y="336" width="1" height="1" fill="#0014e6"/>
<rect x="436" y="336" width="1" height="1" fill="#000063"/>
<rect x="471" y="336" width="1" height="1" fill="#000046"/>
<rect x="596" y="336" width="1" height="1" fill="#000064"/>
<rect x="83" y="337" width="1" height="1" fill="#000046"/>
<rect x="178" y="337" width="1" height="1" fill="#00005a"/>
<rect x="218" y="337" width="1" height="1" fill="#000064"/>
<rect x="336" y="337" width="1" height="1" fill="#000064"/>
<rect x="415" y="337" width="1" height="1" fill="#000aff"/>
<rect x="433" y="337" width="1" height="1" fill="#0014e6"/>
<rect x="439" y="337" width="1" height="1" fill="#000ac8"/>
<rect x="473" y="337" width="1" height="1" fill="#000032"/>
<rect x="532" y="337" width="1" height="1" fill="#000064"/>
<rect x="590" y="337" width="1" height="1" fill="#000050"/>
<rect x="81" y="338" width="1" height="1" fill="#00005a"/>
<rect x="232" y="338" width="1" height="1" fill="#000078"/>
<rect x="272" y="338" width="1" height="1" fill="#00005a"/>
<rect x="415" y="338" width="1" height="1" fill="#000aff"/>
<rect x="433" y="338" width="1" height="1" fill="#0014e6"/>
<rect x="439" y="338" width="1" height="1" fill="#000ac8"/>
<rect x="484" y="338" width="1" height="1" fill="#000050"/>
<rect x="492" y="338" width="1" height="1" fill="#000082"/>
<rect x="578" y="338" width="1" height="1" fill="#00003c"/>
<rect x="583" y="338" width="1" height="1" fill="#000046"/>
<rect x="619" y="338" width="1" height="1" fill="#000078"/>
<rect x="91" y="339" width="1" height="1" fill="#00005a"/>
<rect x="121" y="339" width="1" height="1" fill="#000046"/>
<rect x="280" y="339" width="1" height="1" fill="#000050"/>
<rect x="305" y="339" width="1" height="1" fill="#000064"/>
<rect x="415" y="339" width="1" height="1" fill="#000aff"/>
<rect x="433" y="339" width="1" height="1" fill="#0014e6"/>
<rect x="439" y="339" width="1" height="1" fill="#000ac8"/>
<rect x="75" y="340" width="1" height="1" fill="#000050"/>
<rect x="150" y="340" width="1" height="1" fill="#000082"/>
<rect x="212" y="340" width="1" height="1" fill="#00003c"/>
<rect x="225" y="340" width="1" height="1" fill="#000064"/>
<rect x="319" y="340" width="1" height="1" fill="#000032"/>
<rect x="375" y="340" width="1" height="1" fill="#000032"/>
<rect x="379" y="340" width="1" height="1" fill="#000032"/>
<rect x="399" y="340" width="1" height="1" fill="#00003c"/>
<rect x="415" y="340" width="1" height="1" fill="#000aff"/>
<rect x="439" y="340" width="1" height="1" fill="#000ac8"/>
<rect x="98" y="341" width="1" height="1" fill="#000050"/>
<rect x="111" y="341" width="1" height="1" fill="#000050"/>
<rect x="120" y="341" width="1" height="1" fill="#000050"/>
<rect x="178" y="341" width="1" height="1" fill="#000046"/>
<rect x="271" y="341" width="1" height="1" fill="#00005a"/>
<rect x="410" y="341" width="1" height="1" fill="#000064"/>
<rect x="415" y="341" width="1" height="1" fill="#000aff"/>
<rect x="422" y="341" width="1" height="1" fill="#000046"/>
<rect x="439" y="341" width="1" height="1" fill="#000ac8"/>
<rect x="508" y="341" width="1" height="1" fill="#00005a"/>
<rect x="509" y="341" width="1" height="1" fill="#00003c"/>
<rect x="614" y="341" width="1" height="1" fill="#000046"/>
<rect x="198" y="342" width="1" height="1" fill="#000046"/>
<rect x="415" y="342" width="1" height="1" fill="#000aff"/>
<rect x="436" y="342" width="1" height="1" fill="#000075"/>
<rect x="451" y="342" width="1" height="1" fill="#001ec8"/>
<rect x="541" y="342" width="1" height="1" fill="#000064"/>
<rect x="604" y="342" width="1" height="1" fill="#000046"/>
<rect x="66" y="343" width="1" height="1" fill="#00008f"/>
<rect x="116" y="343" width="1" height="1" fill="#000050"/>
<rect x="140" y="343" width="1" height="1" fill="#000082"/>
<rect x="218" y="343" width="1" height="1" fill="#00008b"/>
<rect x="322" y="343" width="1" height="1" fill="#000040"/>
<rect x="341" y="343" width="1" height="1" fill="#000032"/>
<rect x="415" y="343" width="1" height="1" fill="#000aff"/>
<rect x="451" y="343" width="1" height="1" fill="#0078ff"/>
<rect x="522" y="343" width="1" height="1" fill="#000069"/>
<rect x="524" y="343" width="1" height="1" fill="#00005e"/>
<rect x="526" y="343" width="1" height="1" fill="#000050"/>
<rect x="543" y="343" width="1" height="1" fill="#00003c"/>
<rect x="58" y="344" width="1" height="1" fill="#00009c"/>
<rect x="67" y="344" width="1" height="1" fill="#00007e"/>
<rect x="70" y="344" width="1" height="1" fill="#00006a"/>
<rect x="71" y="344" width="1" height="1" fill="#000092"/>
<rect x="72" y="344" width="1" height="1" fill="#00007f"/>
<rect x="100" y="344" width="1" height="1" fill="#00003c"/>
<rect x="215" y="344" width="1" height="1" fill="#00007c"/>
<rect x="219" y="344" width="1" height="1" fill="#00009a"/>
<rect x="224" y="344" width="1" height="1" fill="#000064"/>
<rect x="231" y="344" width="1" height="1" fill="#000091"/>
<rect x="370" y="344" width="1" height="1" fill="#000044"/>
<rect x="384" y="344" width="1" height="1" fill="#000055"/>
<rect x="401" y="344" width="1" height="1" fill="#000078"/>
<rect x="415" y="344" width="1" height="1" fill="#000aff"/>
<rect x="445" y="344" width="1" height="1" fill="#00006f"/>
<rect x="451" y="344" width="1" height="1" fill="#00c8ff"/>
<rect x="472" y="344" width="1" height="1" fill="#000040"/>
<rect x="491" y="344" width="1" height="1" fill="#00005a"/>
<rect x="492" y="344" width="1" height="1" fill="#000094"/>
<rect x="507" y="344" width="1" height="1" fill="#00007d"/>
<rect x="528" y="344" width="1" height="1" fill="#000093"/>
<rect x="533" y="344" width="1" height="1" fill="#00005a"/>
<rect x="534" y="344" width="1" height="1" fill="#000080"/>
<rect x="538" y="344" width="1" height="1" fill="#000088"/>
<rect x="551" y="344" width="1" height="1" fill="#000091"/>
<rect x="581" y="344" width="1" height="1" fill="#000093"/>
<rect x="616" y="344" width="1" height="1" fill="#000061"/>
<rect x="57" y="345" width="1" height="1" fill="#00006f"/>
<rect x="60" y="345" width="1" height="1" fill="#0000a2"/>
<rect x="61" y="345" width="1" height="1" fill="#000077"/>
<rect x="216" y="345" width="1" height="1" fill="#00006d"/>
<rect x="221" y="345" width="1" height="1" fill="#000086"/>
<rect x="229" y="345" width="1" height="1" fill="#000058"/>
<rect x="233" y="345" width="1" height="1" fill="#000058"/>
<rect x="252" y="345" width="1" height="1" fill="#000097"/>
<rect x="254" y="345" width="1" height="1" fill="#000080"/>
<rect x="324" y="345" width="1" height="1" fill="#00007e"/>
<rect x="364" y="345" width="1" height="1" fill="#00004f"/>
<rect x="365" y="345" width="1" height="1" fill="#000060"/>
<rect x="375" y="345" width="1" height="1" fill="#000046"/>
<rect x="385" y="345" width="1" height="1" fill="#000043"/>
<rect x="389" y="345" width="1" height="1" fill="#000068"/>
<rect x="391" y="345" width="1" height="1" fill="#00007d"/>
<rect x="407" y="345" width="1" height="1" fill="#00007c"/>
<rect x="415" y="345" width="1" height="1" fill="#000aff"/>
<rect x="418" y="345" width="1" height="1" fill="#00005e"/>
<rect x="424" y="345" width="1" height="1" fill="#00005d"/>
<rect x="432" y="345" width="1" height="1" fill="#00005e"/>
<rect x="434" y="345" width="1" height="1" fill="#00008c"/>
<rect x="447" y="345" width="1" height="1" fill="#00005b"/>
<rect x="448" y="345" width="1" height="1" fill="#000054"/>
<rect x="461" y="345" width="1" height="1" fill="#000050"/>
<rect x="469" y="345" width="1" height="1" fill="#000073"/>
<rect x="476" y="345" width="1" height="1" fill="#000073"/>
<rect x="483" y="345" width="1" height="1" fill="#00005b"/>
<rect x="498" y="345" width="1" height="1" fill="#000082"/>
<rect x="499" y="345" width="1" height="1" fill="#000046"/>
<rect x="501" y="345" width="1" height="1" fill="#00004c"/>
<rect x="543" y="345" width="1" height="1" fill="#000047"/>
<rect x="544" y="345" width="1" height="1" fill="#000088"/>
<rect x="545" y="345" width="1" height="1" fill="#00005a"/>
<rect x="549" y="345" width="1" height="1" fill="#000050"/>
<rect x="550" y="345" width="1" height="1" fill="#000095"/>
<rect x="569" y="345" width="1" height="1" fill="#00005a"/>
<rect x="579" y="345" width="1" height="1" fill="#000094"/>
<rect x="598" y="345" width="1" height="1" fill="#000094"/>
<rect x="599" y="345" width="1" height="1" fill="#000071"/>
<rect x="37" y="346" width="1" height="1" fill="#0000a3"/>
<rect x="48" y="346" width="1" height="1" fill="#000091"/>
<rect x="50" y="346" width="1" height="1" fill="#0000a7"/>
<rect x="55" y="346" width="1" height="1" fill="#000059"/>
<rect x="82" y="346" width="1" height="1" fill="#000079"/>
<rect x="85" y="346" width="1" height="1" fill="#000094"/>
<rect x="86" y="346" width="1" height="1" fill="#00003e"/>
<rect x="97" y="346" width="1" height="1" fill="#000046"/>
<rect x="100" y="346" width="1" height="1" fill="#000047"/>
<rect x="107" y="346" width="1" height="1" fill="#000081"/>
<rect x="111" y="346" width="1" height="1" fill="#00004c"/>
<rect x="121" y="346" width="1" height="1" fill="#00005c"/>
<rect x="127" y="346" width="1" height="1" fill="#000084"/>
<rect x="136" y="346" width="1" height="1" fill="#000070"/>
<rect x="139" y="346" width="1" height="1" fill="#000057"/>
<rect x="166" y="346" width="1" height="1" fill="#000088"/>
<rect x="172" y="346" width="1" height="1" fill="#00003d"/>
<rect x="178" y="346" width="1" height="1" fill="#00007d"/>
<rect x="182" y="346" width="1" height="1" fill="#00007e"/>
<rect x="185" y="346" width="1" height="1" fill="#000032"/>
<rect x="189" y="346" width="1" height="1" fill="#00008d"/>
<rect x="191" y="346" width="1" height="1" fill="#00005a"/>
<rect x="194" y="346" width="1" height="1" fill="#000061"/>
<rect x="201" y="346" width="1" height="1" fill="#000085"/>
<rect x="202" y="346" width="1" height="1" fill="#000073"/>
<rect x="203" y="346" width="1" height="1" fill="#0000aa"/>
<rect x="204" y="346" width="1" height="1" fill="#00007c"/>
<rect x="205" y="346" width="1" height="1" fill="#00007c"/>
<rect x="207" y="346" width="1" height="1" fill="#000076"/>
<rect x="209" y="346" width="1" height="1" fill="#00005f"/>
<rect x="210" y="346" width="1" height="1" fill="#000084"/>
<rect x="246" y="346" width="1" height="1" fill="#000073"/>
<rect x="255" y="346" width="1" height="1" fill="#000056"/>
<rect x="256" y="346" width="1" height="1" fill="#000054"/>
<rect x="262" y="346" width="1" height="1" fill="#000032"/>
<rect x="265" y="346" width="1" height="1" fill="#000096"/>
<rect x="266" y="346" width="1" height="1" fill="#00009a"/>
<rect x="268" y="346" width="1" height="1" fill="#000080"/>
<rect x="270" y="346" width="1" height="1" fill="#000095"/>
<rect x="271" y="346" width="1" height="1" fill="#000064"/>
<rect x="276" y="346" width="1" height="1" fill="#00005e"/>
<rect x="280" y="346" width="1" height="1" fill="#00008e"/>
<rect x="283" y="346" width="1" height="1" fill="#00005a"/>
<rect x="284" y="346" width="1" height="1" fill="#000059"/>
<rect x="287" y="346" width="1" height="1" fill="#000081"/>
<rect x="292" y="346" width="1" height="1" fill="#000082"/>
<rect x="297" y="346" width="1" height="1" fill="#000057"/>
<rect x="312" y="346" width="1" height="1" fill="#00005b"/>
<rect x="313" y="346" width="1" height="1" fill="#00005b"/>
<rect x="314" y="346" width="1" height="1" fill="#000084"/>
<rect x="316" y="346" width="1" height="1" fill="#000090"/>
<rect x="317" y="346" width="1" height="1" fill="#000067"/>
<rect x="320" y="346" width="1" height="1" fill="#0000a0"/>
<rect x="329" y="346" width="1" height="1" fill="#000091"/>
<rect x="335" y="346" width="1" height="1" fill="#000079"/>
<rect x="339" y="346" width="1" height="1" fill="#00005a"/>
<rect x="347" y="346" width="1" height="1" fill="#000047"/>
<rect x="352" y="346" width="1" height="1" fill="#00003c"/>
<rect x="355" y="346" width="1" height="1" fill="#00003d"/>
<rect x="357" y="346" width="1" height="1" fill="#000063"/>
<rect x="415" y="346" width="1" height="1" fill="#000aff"/>
<rect x="476" y="346" width="1" height="1" fill="#000032"/>
<rect x="482" y="346" width="1" height="1" fill="#000070"/>
<rect x="500" y="346" width="1" height="1" fill="#000091"/>
<rect x="520" y="346" width="1" height="1" fill="#000050"/>
<rect x="549" y="346" width="1" height="1" fill="#000058"/>
<rect x="608" y="346" width="1" height="1" fill="#000067"/>
<rect x="617" y="346" width="1" height="1" fill="#000050"/>
<rect x="25" y="347" width="1" height="1" fill="#00009f"/>
<rect x="28" y="347" width="1" height="1" fill="#000059"/>
<rect x="30" y="347" width="1" height="1" fill="#00005e"/>
<rect x="35" y="347" width="1" height="1" fill="#000052"/>
<rect x="38" y="347" width="1" height="1" fill="#00006e"/>
<rect x="39" y="347" width="1" height="1" fill="#0000a3"/>
<rect x="40" y="347" width="1" height="1" fill="#0000a3"/>
<rect x="41" y="347" width="1" height="1" fill="#000095"/>
<rect x="51" y="347" width="1" height="1" fill="#00006c"/>
<rect x="53" y="347" width="1" height="1" fill="#000073"/>
<rect x="60" y="347" width="1" height="1" fill="#000050"/>
<rect x="64" y="347" width="1" height="1" fill="#000032"/>
<rect x="76" y="347" width="1" height="1" fill="#000078"/>
<rect x="88" y="347" width="1" height="1" fill="#00004e"/>
<rect x="125" y="347" width="1" height="1" fill="#00006a"/>
<rect x="180" y="347" width="1" height="1" fill="#000059"/>
<rect x="212" y="347" width="1" height="1" fill="#00009e"/>
<rect x="241" y="347" width="1" height="1" fill="#000074"/>
<rect x="247" y="347" width="1" height="1" fill="#000099"/>
<rect x="311" y="347" width="1" height="1" fill="#00009d"/>
<rect x="349" y="347" width="1" height="1" fill="#000052"/>
<rect x="388" y="347" width="1" height="1" fill="#000064"/>
<rect x="415" y="347" width="1" height="1" fill="#000aff"/>
<rect x="615" y="347" width="1" height="1" fill="#000032"/>
<rect x="44" y="348" width="1" height="1" fill="#00007e"/>
<rect x="185" y="348" width="1" height="1" fill="#00003c"/>
<rect x="415" y="348" width="1" height="1" fill="#000aff"/>
<rect x="454" y="348" width="1" height="1" fill="#000046"/>
<rect x="175" y="349" width="1" height="1" fill="#000064"/>
<rect x="204" y="349" width="1" height="1" fill="#000078"/>
<rect x="217" y="349" width="1" height="1" fill="#000032"/>
<rect x="285" y="349" width="1" height="1" fill="#000046"/>
<rect x="336" y="349" width="1" height="1" fill="#000032"/>
<rect x="354" y="349" width="1" height="1" fill="#00003c"/>
<rect x="415" y="349" width="1" height="1" fill="#000aff"/>
<rect x="429" y="349" width="1" height="1" fill="#00003c"/>
<rect x="601" y="349" width="1" height="1" fill="#000032"/>
<rect x="21" y="350" width="1" height="1" fill="#00003c"/>
<rect x="175" y="350" width="1" height="1" fill="#00005a"/>
<rect x="216" y="350" width="1" height="1" fill="#00005a"/>
<rect x="252" y="350" width="1" height="1" fill="#000064"/>
<rect x="327" y="350" width="1" height="1" fill="#000050"/>
<rect x="379" y="350" width="1" height="1" fill="#000032"/>
<rect x="415" y="350" width="1" height="1" fill="#000aff"/>
<rect x="436" y="350" width="1" height="1" fill="#000041"/>
<rect x="535" y="350" width="1" height="1" fill="#00005a"/>
<rect x="114" y="351" width="1" height="1" fill="#000032"/>
<rect x="125" y="351" width="1" height="1" fill="#000064"/>
<rect x="415" y="351" width="1" height="1" fill="#000096"/>
<rect x="230" y="352" width="1" height="1" fill="#000046"/>
<rect x="238" y="352" width="1" height="1" fill="#000046"/>
<rect x="277" y="352" width="1" height="1" fill="#000064"/>
<rect x="395" y="352" width="1" height="1" fill="#00005a"/>
<rect x="415" y="352" width="1" height="1" fill="#000096"/>
<rect x="420" y="352" width="1" height="1" fill="#000078"/>
<rect x="483" y="352" width="1" height="1" fill="#000046"/>
<rect x="535" y="352" width="1" height="1" fill="#000064"/>
<rect x="131" y="353" width="1" height="1" fill="#00003c"/>
<rect x="163" y="353" width="1" height="1" fill="#000078"/>
<rect x="238" y="353" width="1" height="1" fill="#000032"/>
<rect x="332" y="353" width="1" height="1" fill="#000078"/>
<rect x="433" y="353" width="1" height="1" fill="#000082"/>
<rect x="503" y="353" width="1" height="1" fill="#000064"/>
<rect x="550" y="353" width="1" height="1" fill="#00005a"/>
<rect x="31" y="354" width="1" height="1" fill="#000082"/>
<rect x="39" y="354" width="1" height="1" fill="#000064"/>
<rect x="83" y="354" width="1" height="1" fill="#000032"/>
<rect x="149" y="354" width="1" height="1" fill="#00005a"/>
<rect x="248" y="354" width="1" height="1" fill="#00005a"/>
<rect x="381" y="354" width="1" height="1" fill="#000046"/>
<rect x="473" y="354" width="1" height="1" fill="#000082"/>
<rect x="220" y="355" width="1" height="1" fill="#000032"/>
<rect x="385" y="355" width="1" height="1" fill="#00003c"/>
<rect x="540" y="355" width="1" height="1" fill="#000078"/>
<rect x="174" y="356" width="1" height="1" fill="#000032"/>
<rect x="408" y="356" width="1" height="1" fill="#000050"/>
<rect x="421" y="356" width="1" height="1" fill="#00003c"/>
<rect x="260" y="357" width="1" height="1" fill="#000078"/>
<rect x="330" y="357" width="1" height="1" fill="#000050"/>
<rect x="107" y="358" width="1" height="1" fill="#00005a"/>
<rect x="167" y="358" width="1" height="1" fill="#000032"/>
<rect x="188" y="358" width="1" height="1" fill="#00005a"/>
<rect x="350" y="358" width="1" height="1" fill="#00005a"/>
<rect x="436" y="358" width="1" height="1" fill="#000052"/>
<rect x="613" y="358" width="1" height="1" fill="#000046"/>
<rect x="41" y="359" width="1" height="1" fill="#000032"/>
<rect x="159" y="359" width="1" height="1" fill="#000064"/>
<rect x="174" y="359" width="1" height="1" fill="#00005a"/>
<rect x="451" y="359" width="1" height="1" fill="#000050"/>
<rect x="170" y="360" width="1" height="1" fill="#000032"/>
<rect x="277" y="360" width="1" height="1" fill="#00003c"/>
<rect x="322" y="360" width="1" height="1" fill="#00003f"/>
<rect x="278" y="361" width="1" height="1" fill="#000032"/>
<rect x="112" y="362" width="1" height="1" fill="#000078"/>
<rect x="119" y="362" width="1" height="1" fill="#000064"/>
<rect x="199" y="362" width="1" height="1" fill="#000082"/>
<rect x="253" y="362" width="1" height="1" fill="#000064"/>
<rect x="300" y="362" width="1" height="1" fill="#000064"/>
<rect x="442" y="362" width="1" height="1" fill="#000032"/>
<rect x="581" y="362" width="1" height="1" fill="#00003c"/>
<rect x="70" y="363" width="1" height="1" fill="#00003c"/>
<rect x="141" y="363" width="1" height="1" fill="#00003c"/>
<rect x="309" y="363" width="1" height="1" fill="#000064"/>
<rect x="390" y="363" width="1" height="1" fill="#000082"/>
<rect x="460" y="363" width="1" height="1" fill="#000046"/>
<rect x="486" y="363" width="1" height="1" fill="#000078"/>
<rect x="529" y="363" width="1" height="1" fill="#00003c"/>
<rect x="72" y="364" width="1" height="1" fill="#00003c"/>
<rect x="507" y="364" width="1" height="1" fill="#00003c"/>
<rect x="535" y="364" width="1" height="1" fill="#000064"/>
<rect x="537" y="364" width="1" height="1" fill="#00003c"/>
<rect x="367" y="365" width="1" height="1" fill="#000050"/>
<rect x="429" y="365" width="1" height="1" fill="#00005a"/>
<rect x="481" y="365" width="1" height="1" fill="#000064"/>
<rect x="482" y="365" width="1" height="1" fill="#00003c"/>
<rect x="550" y="365" width="1" height="1" fill="#000032"/>
<rect x="558" y="365" width="1" height="1" fill="#000078"/>
<rect x="76" y="366" width="1" height="1" fill="#000064"/>
<rect x="137" y="366" width="1" height="1" fill="#000032"/>
<rect x="145" y="366" width="1" height="1" fill="#000032"/>
<rect x="564" y="366" width="1" height="1" fill="#00003c"/>
<rect x="83" y="367" width="1" height="1" fill="#000050"/>
<rect x="99" y="367" width="1" height="1" fill="#00005a"/>
<rect x="482" y="367" width="1" height="1" fill="#000032"/>
<rect x="524" y="367" width="1" height="1" fill="#000032"/>
<rect x="131" y="368" width="1" height="1" fill="#00003c"/>
<rect x="194" y="368" width="1" height="1" fill="#000050"/>
<rect x="236" y="368" width="1" height="1" fill="#000050"/>
<rect x="89" y="369" width="1" height="1" fill="#00003c"/>
<rect x="180" y="369" width="1" height="1" fill="#000046"/>
<rect x="420" y="369" width="1" height="1" fill="#00005a"/>
<rect x="430" y="369" width="1" height="1" fill="#000032"/>
<rect x="107" y="371" width="1" height="1" fill="#000046"/>
<rect x="229" y="371" width="1" height="1" fill="#000050"/>
<rect x="22" y="372" width="1" height="1" fill="#000046"/>
<rect x="306" y="372" width="1" height="1" fill="#000046"/>
<rect x="331" y="372" width="1" height="1" fill="#00003c"/>
<rect x="339" y="372" width="1" height="1" fill="#000046"/>
<rect x="536" y="373" width="1" height="1" fill="#000078"/>
<rect x="164" y="374" width="1" height="1" fill="#00003c"/>
<rect x="259" y="374" width="1" height="1" fill="#000046"/>
<rect x="113" y="376" width="1" height="1" fill="#000078"/>
<rect x="337" y="377" width="1" height="1" fill="#000064"/>
<rect x="410" y="377" width="1" height="1" fill="#000078"/>
<rect x="436" y="377" width="1" height="1" fill="#000046"/>
<rect x="123" y="378" width="1" height="1" fill="#00003c"/>
<rect x="427" y="378" width="1" height="1" fill="#00005a"/>
<rect x="553" y="378" width="1" height="1" fill="#000064"/>
<rect x="36" y="381" width="1" height="1" fill="#000078"/>
<rect x="336" y="381" width="1" height="1" fill="#000050"/>
<rect x="607" y="382" width="1" height="1" fill="#000064"/>
<rect x="325" y="383" width="1" height="1" fill="#00005a"/>
<rect x="516" y="383" width="1" height="1" fill="#00003c"/>
<rect x="497" y="384" width="1" height="1" fill="#00005a"/>
<rect x="233" y="385" width="1" height="1" fill="#000046"/>
<rect x="477" y="385" width="1" height="1" fill="#000078"/>
<rect x="574" y="385" width="1" height="1" fill="#00003c"/>
<rect x="23" y="386" width="1" height="1" fill="#000078"/>
<rect x="77" y="386" width="1" height="1" fill="#00003c"/>
<rect x="378" y="386" width="1" height="1" fill="#000050"/>
<rect x="44" y="387" width="1" height="1" fill="#00003c"/>
<rect x="343" y="387" width="1" height="1" fill="#000032"/>
<rect x="450" y="387" width="1" height="1" fill="#000078"/>
<rect x="59" y="388" width="1" height="1" fill="#000064"/>
<rect x="85" y="388" width="1" height="1" fill="#000064"/>
<rect x="308" y="388" width="1" height="1" fill="#00003c"/>
<rect x="356" y="389" width="1" height="1" fill="#00003c"/>
<rect x="368" y="389" width="1" height="1" fill="#000032"/>
<rect x="218" y="391" width="1" height="1" fill="#000046"/>
<rect x="84" y="392" width="1" height="1" fill="#000046"/>
<rect x="360" y="392" width="1" height="1" fill="#000064"/>
<rect x="537" y="392" width="1" height="1" fill="#00005a"/>
<rect x="207" y="393" width="1" height="1" fill="#000032"/>
<rect x="506" y="393" width="1" height="1" fill="#000078"/>
<rect x="379" y="394" width="1" height="1" fill="#000078"/>
<rect x="398" y="394" width="1" height="1" fill="#00005a"/>
<rect x="527" y="394" width="1" height="1" fill="#00003c"/>
<rect x="248" y="395" width="1" height="1" fill="#000078"/>
<rect x="20" y="399" width="1" height="1" fill="#00ffff"/>
<rect x="22" y="399" width="1" height="1" fill="#00ffff"/>
<rect x="23" y="397" width="1" height="3" fill="#00ffff"/>
<rect x="28" y="396" width="1" height="4" fill="#00ffff"/>
<rect x="30" y="399" width="1" height="1" fill="#00ffff"/>
<rect x="33" y="396" width="1" height="4" fill="#00ffff"/>
<rect x="37" y="398" width="1" height="2" fill="#00ffff"/>
<rect x="38" y="399" width="1" height="1" fill="#00ffff"/>
<rect x="39" y="398" width="1" height="2" fill="#00ffff"/>
<rect x="40" y="397" width="1" height="3" fill="#00ffff"/>
<rect x="42" y="398" width="1" height="2" fill="#00ffff"/>
<rect x="43" y="399" width="1" height="1" fill="#00ffff"/>
<rect x="46" y="398" width="1" height="2" fill="#00ffff"/>
<rect x="47" y="397" width="1" height="3" fill="#00ffff"/>
<rect x="48" y="399" width="1" height="1" fill="#00ffff"/>
<rect x="49" y="397" width="1" height="3" fill="#00ffff"/>
<rect x="50" y="397" width="1" height="3" fill="#00ffff"/>
<rect x="51" y="399" width="1" height="1" fill="#00ffff"/>
<rect x="52" y="398" width="1" height="2" fill="#00ffff"/>
<rect x="53" y="397" width="1" height="3" fill="#00ffff"/>
<rect x="58" y="399" width="1" height="1" fill="#00ffff"/>
<rect x="60" y="399" width="1" height="1" fill="#00ffff"/>
<rect x="61" y="399" width="1" height="1" fill="#00ffff"/>
<rect x="62" y="399" width="1" height="1" fill="#00ffff"/>
<rect x="64" y="399" width="1" height="1" fill="#00ffff"/>
<rect x="65" y="398" width="1" height="2" fill="#00ffff"/>
<rect x="66" y="399" width="1" height="1" fill="#00ffff"/>
<rect x="67" y="398" width="1" height="2" fill="#00ffff"/>
<rect x="68" y="399" width="1" height="1" fill="#00ffff"/>
<rect x="69" y="399" width="1" height="1" fill="#00ffff"/>
<rect x="70" y="399" width="1" height="1" fill="#00ffff"/>
<rect x="72" y="398" width="1" height="2" fill="#00ffff"/>
<rect x="73" y="398" width="1" height="2" fill="#00ffff"/>
<rect x="74" y="399" width="1" height="1" fill="#00ffff"/>
<rect x="76" y="399" width="1" height="1" fill="#00ffff"/>
<rect x="77" y="399" width="1" height="1" fill="#00ffff"/>
<rect x="78" y="399" width="1" height="1" fill="#00ffff"/>
<rect x="79" y="398" width="1" height="2" fill="#00ffff"/>
<rect x="80" y="398" width="1" height="2" fill="#00ffff"/>
<rect x="81" y="399" width="1" height="1" fill="#00ffff"/>
<rect x="82" y="397" width="1" height="3" fill="#00ffff"/>
<rect x="83" y="399" width="1" height="1" fill="#00ffff"/>
<rect x="85" y="399" width="1" height="1" fill="#00ffff"/>
<rect x="86" y="399" width="1" height="1" fill="#00ffff"/>
<rect x="87" y="397" width="1" height="3" fill="#00ffff"/>
<rect x="89" y="399" width="1" height="1" fill="#00ffff"/>
<rect x="90" y="397" width="1" height="3" fill="#00ffff"/>
<rect x="91" y="399" width="1" height="1" fill="#00ffff"/>
<rect x="92" y="398" width="1" height="2" fill="#00ffff"/>
<rect x="93" y="399" width="1" height="1" fill="#00ffff"/>
<rect x="94" y="399" width="1" height="1" fill="#00ffff"/>
<rect x="102" y="399" width="1" height="1" fill="#00ffff"/>
<rect x="105" y="397" width="1" height="3" fill="#00ffff"/>
<rect x="107" y="398" width="1" height="2" fill="#00ffff"/>
<rect x="113" y="397" width="1" height="3" fill="#00ffff"/>
<rect x="114" y="398" width="1" height="2" fill="#00ffff"/>
<rect x="115" y="399" width="1" height="1" fill="#00ffff"/>
<rect x="116" y="397" width="1" height="3" fill="#00ffff"/>
<rect x="117" y="398" width="1" height="2" fill="#00ffff"/>
<rect x="119" y="397" width="1" height="3" fill="#00ffff"/>
<rect x="120" y="399" width="1" height="1" fill="#00ffff"/>
<rect x="121" y="397" width="1" height="3" fill="#00ffff"/>
<rect x="122" y="398" width="1" height="2" fill="#00ffff"/>
<rect x="123" y="398" width="1" height="2" fill="#00ffff"/>
<rect x="124" y="398" width="1" height="2" fill="#00ffff"/>
<rect x="126" y="397" width="1" height="3" fill="#00ffff"/>
<rect x="132" y="398" width="1" height="2" fill="#00ffff"/>
<rect x="139" y="399" width="1" height="1" fill="#00ffff"/>
<rect x="140" y="398" width="1" height="2" fill="#00ffff"/>
<rect x="141" y="398" width="1" height="2" fill="#00ffff"/>
<rect x="143" y="399" width="1" height="1" fill="#00ffff"/>
<rect x="146" y="398" width="1" height="2" fill="#00ffff"/>
<rect x="147" y="399" width="1" height="1" fill="#00ffff"/>
<rect x="150" y="399" width="1" height="1" fill="#00ffff"/>
<rect x="151" y="397" width="1" height="3" fill="#00ffff"/>
<rect x="152" y="398" width="1" height="2" fill="#00ffff"/>
<rect x="153" y="399" width="1" height="1" fill="#00ffff"/>
<rect x="159" y="399" width="1" height="1" fill="#00ffff"/>
<rect x="162" y="397" width="1" height="3" fill="#00ffff"/>
<rect x="164" y="398" width="1" height="2" fill="#00ffff"/>
<rect x="165" y="397" width="1" height="3" fill="#00ffff"/>
<rect x="166" y="399" width="1" height="1" fill="#00ffff"/>
<rect x="171" y="398" width="1" height="2" fill="#00ffff"/>
<rect x="175" y="399" width="1" height="1" fill="#00ffff"/>
<rect x="176" y="397" width="1" height="3" fill="#00ffff"/>
<rect x="182" y="398" width="1" height="2" fill="#00ffff"/>
<rect x="184" y="398" width="1" height="2" fill="#00ffff"/>
<rect x="185" y="398" width="1" height="2" fill="#00ffff"/>
<rect x="186" y="399" width="1" height="1" fill="#00ffff"/>
<rect x="187" y="399" width="1" height="1" fill="#00ffff"/>
<rect x="189" y="399" width="1" height="1" fill="#00ffff"/>
<rect x="196" y="397" width="1" height="3" fill="#00ffff"/>
<rect x="197" y="399" width="1" height="1" fill="#00ffff"/>
<rect x="198" y="398" width="1" height="2" fill="#00ffff"/>
<rect x="199" y="399" width="1" height="1" fill="#00ffff"/>
<rect x="207" y="398" width="1" height="2" fill="#00ffff"/>
<rect x="209" y="398" width="1" height="2" fill="#00ffff"/>
<rect x="210" y="399" width="1" height="1" fill="#00ffff"/>
<rect x="212" y="398" width="1" height="2" fill="#00ffff"/>
<rect x="221" y="398" width="1" height="2" fill="#00ffff"/>
<rect x="222" y="399" width="1" height="1" fill="#00ffff"/>
<rect x="223" y="399" width="1" height="1" fill="#00ffff"/>
<rect x="224" y="399" width="1" height="1" fill="#00ffff"/>
<rect x="225" y="399" width="1" height="1" fill="#00ffff"/>
<rect x="228" y="398" width="1" height="2" fill="#00ffff"/>
<rect x="230" y="398" width="1" height="2" fill="#00ffff"/>
<rect x="233" y="398" width="1" height="2" fill="#00ffff"/>
<rect x="236" y="399" width="1" height="1" fill="#00ffff"/>
<rect x="237" y="399" width="1" height="1" fill="#00ffff"/>
<rect x="238" y="397" width="1" height="3" fill="#00ffff"/>
<rect x="240" y="396" width="1" height="4" fill="#00ffff"/>
<rect x="241" y="398" width="1" height="2" fill="#00ffff"/>
<rect x="242" y="399" width="1" height="1" fill="#00ffff"/>
<rect x="243" y="399" width="1" height="1" fill="#00ffff"/>
<rect x="244" y="398" width="1" height="2" fill="#00ffff"/>
<rect x="246" y="399" width="1" height="1" fill="#00ffff"/>
<rect x="247" y="397" width="1" height="3" fill="#00ffff"/>
<rect x="253" y="397" width="1" height="3" fill="#00ffff"/>
<rect x="254" y="398" width="1" height="2" fill="#00ffff"/>
<rect x="255" y="398" width="1" height="2" fill="#00ffff"/>
<rect x="256" y="397" width="1" height="3" fill="#00ffff"/>
<rect x="260" y="398" width="1" height="2" fill="#00ffff"/>
<rect x="261" y="399" width="1" height="1" fill="#00ffff"/>
<rect x="264" y="398" width="1" height="2" fill="#00ffff"/>
<rect x="266" y="398" width="1" height="2" fill="#00ffff"/>
<rect x="267" y="399" width="1" height="1" fill="#00ffff"/>
<rect x="273" y="398" width="1" height="2" fill="#00ffff"/>
<rect x="274" y="399" width="1" height="1" fill="#00ffff"/>
<rect x="276" y="399" width="1" height="1" fill="#00ffff"/>
<rect x="277" y="398" width="1" height="2" fill="#00ffff"/>
<rect x="281" y="399" width="1" height="1" fill="#00ffff"/>
<rect x="283" y="399" width="1" height="1" fill="#00ffff"/>
<rect x="290" y="399" width="1" height="1" fill="#00ffff"/>
<rect x="295" y="399" width="1" height="1" fill="#00ffff"/>
<rect x="296" y="399" width="1" height="1" fill="#00ffff"/>
<rect x="297" y="398" width="1" height="2" fill="#00ffff"/>
<rect x="298" y="397" width="1" height="3" fill="#00ffff"/>
<rect x="301" y="399" width="1" height="1" fill="#00ffff"/>
<rect x="302" y="399" width="1" height="1" fill="#00ffff"/>
<rect x="303" y="398" width="1" height="2" fill="#00ffff"/>
<rect x="304" y="398" width="1" height="2" fill="#00ffff"/>
<rect x="305" y="398" width="1" height="2" fill="#00ffff"/>
<rect x="306" y="399" width="1" height="1" fill="#00ffff"/>
<rect x="310" y="399" width="1" height="1" fill="#00ffff"/>
<rect x="312" y="398" width="1" height="2" fill="#00ffff"/>
<rect x="313" y="399" width="1" height="1" fill="#00ffff"/>
<rect x="314" y="399" width="1" height="1" fill="#00ffff"/>
<rect x="316" y="399" width="1" height="1" fill="#00ffff"/>
<rect x="317" y="399" width="1" height="1" fill="#00ffff"/>
<rect x="318" y="399" width="1" height="1" fill="#00ffff"/>
<rect x="319" y="399" width="1" height="1" fill="#00ffff"/>
<rect x="320" y="399" width="1" height="1" fill="#00ffff"/>
<rect x="321" y="397" width="1" height="3" fill="#00ffff"/>
<rect x="322" y="398" width="1" height="2" fill="#00ffff"/>
<rect x="323" y="398" width="1" height="2" fill="#00ffff"/>
<rect x="324" y="396" width="1" height="4" fill="#00ffff"/>
<rect x="325" y="399" width="1" height="1" fill="#00ffff"/>
<rect x="326" y="396" width="1" height="4" fill="#00ffff"/>
<rect x="328" y="398" width="1" height="2" fill="#00ffff"/>
<rect x="329" y="399" width="1" height="1" fill="#00ffff"/>
<rect x="330" y="399" width="1" height="1" fill="#00ffff"/>
<rect x="331" y="399" width="1" height="1" fill="#00ffff"/>
<rect x="332" y="398" width="1" height="2" fill="#00ffff"/>
<rect x="334" y="397" width="1" height="3" fill="#00ffff"/>
<rect x="335" y="399" width="1" height="1" fill="#00ffff"/>
<rect x="336" y="398" width="1" height="2" fill="#00ffff"/>
<rect x="337" y="399" width="1" height="1" fill="#00ffff"/>
<rect x="338" y="398" width="1" height="2" fill="#00ffff"/>
<rect x="339" y="397" width="1" height="3" fill="#00ffff"/>
<rect x="340" y="397" width="1" height="3" fill="#00ffff"/>
<rect x="341" y="399" width="1" height="1" fill="#00ffff"/>
<rect x="342" y="399" width="1" height="1" fill="#00ffff"/>
<rect x="343" y="398" width="1" height="2" fill="#00ffff"/>
<rect x="344" y="398" width="1" height="2" fill="#00ffff"/>
<rect x="345" y="399" width="1" height="1" fill="#00ffff"/>
<rect x="346" y="398" width="1" height="2" fill="#00ffff"/>
<rect x="349" y="398" width="1" height="2" fill="#00ffff"/>
<rect x="350" y="399" width="1" height="1" fill="#00ffff"/>
<rect x="353" y="397" width="1" height="3" fill="#00ffff"/>
<rect x="354" y="399" width="1" height="1" fill="#00ffff"/>
<rect x="355" y="399" width="1" height="1" fill="#00ffff"/>
<rect x="356" y="397" width="1" height="3" fill="#00ffff"/>
<rect x="359" y="399" width="1" height="1" fill="#00ffff"/>
<rect x="360" y="397" width="1" height="3" fill="#00ffff"/>
<rect x="361" y="398" width="1" height="2" fill="#00ffff"/>
<rect x="362" y="399" width="1" height="1" fill="#00ffff"/>
<rect x="363" y="396" width="1" height="4" fill="#00ffff"/>
<rect x="367" y="399" width="1" height="1" fill="#00ffff"/>
<rect x="368" y="399" width="1" height="1" fill="#00ffff"/>
<rect x="369" y="399" width="1" height="1" fill="#00ffff"/>
<rect x="370" y="397" width="1" height="3" fill="#00ffff"/>
<rect x="371" y="398" width="1" height="2" fill="#00ffff"/>
<rect x="372" y="398" width="1" height="2" fill="#00ffff"/>
<rect x="373" y="398" width="1" height="2" fill="#00ffff"/>
<rect x="374" y="398" width="1" height="2" fill="#00ffff"/>
<rect x="375" y="399" width="1" height="1" fill="#00ffff"/>
<rect x="376" y="399" width="1" height="1" fill="#00ffff"/>
<rect x="377" y="398" width="1" height="2" fill="#00ffff"/>
<rect x="378" y="399" width="1" height="1" fill="#00ffff"/>
<rect x="379" y="399" width="1" height="1" fill="#00ffff"/>
<rect x="380" y="399" width="1" height="1" fill="#00ffff"/>
<rect x="381" y="398" width="1" height="2" fill="#00ffff"/>
<rect x="382" y="399" width="1" height="1" fill="#00ffff"/>
<rect x="384" y="397" width="1" height="3" fill="#00ffff"/>
<rect x="385" y="399" width="1" height="1" fill="#00ffff"/>
<rect x="386" y="399" width="1" height="1" fill="#00ffff"/>
<rect x="387" y="399" width="1" height="1" fill="#00ffff"/>
<rect x="388" y="399" width="1" height="1" fill="#00ffff"/>
<rect x="389" y="398" width="1" height="2" fill="#00ffff"/>
<rect x="390" y="399" width="1" height="1" fill="#00ffff"/>
<rect x="391" y="399" width="1" height="1" fill="#00ffff"/>
<rect x="392" y="399" width="1" height="1" fill="#00ffff"/>
<rect x="393" y="399" width="1" height="1" fill="#00ffff"/>
<rect x="395" y="399" width="1" height="1" fill="#00ffff"/>
<rect x="396" y="399" width="1" height="1" fill="#00ffff"/>
<rect x="399" y="398" width="1" height="2" fill="#00ffff"/>
<rect x="400" y="399" width="1" height="1" fill="#00ffff"/>
<rect x="403" y="399" width="1" height="1" fill="#00ffff"/>
<rect x="404" y="399" width="1" height="1" fill="#00ffff"/>
<rect x="407" y="399" width="1" height="1" fill="#00ffff"/>
<rect x="408" y="399" width="1" height="1" fill="#00ffff"/>
<rect x="410" y="399" width="1" height="1" fill="#00ffff"/>
<rect x="411" y="398" width="1" height="2" fill="#00ffff"/>
<rect x="412" y="399" width="1" height="1" fill="#00ffff"/>
<rect x="417" y="399" width="1" height="1" fill="#00ffff"/>
<rect x="420" y="399" width="1" height="1" fill="#00ffff"/>
<rect x="421" y="398" width="1" height="2" fill="#00ffff"/>
<rect x="423" y="399" width="1" height="1" fill="#00ffff"/>
<rect x="424" y="399" width="1" height="1" fill="#00ffff"/>
<rect x="425" y="397" width="1" height="3" fill="#00ffff"/>
<rect x="426" y="398" width="1" height="2" fill="#00ffff"/>
<rect x="427" y="399" width="1" height="1" fill="#00ffff"/>
<rect x="429" y="398" width="1" height="2" fill="#00ffff"/>
<rect x="430" y="396" width="1" height="4" fill="#00ffff"/>
<rect x="431" y="399" width="1" height="1" fill="#00ffff"/>
<rect x="432" y="396" width="1" height="4" fill="#00ffff"/>
<rect x="433" y="396" width="1" height="4" fill="#00ffff"/>
<rect x="434" y="397" width="1" height="3" fill="#00ffff"/>
<rect x="435" y="399" width="1" height="1" fill="#00ffff"/>
<rect x="436" y="398" width="1" height="2" fill="#00ffff"/>
<rect x="437" y="399" width="1" height="1" fill="#00ffff"/>
<rect x="438" y="397" width="1" height="3" fill="#00ffff"/>
<rect x="439" y="397" width="1" height="3" fill="#00ffff"/>
<rect x="440" y="398" width="1" height="2" fill="#00ffff"/>
<rect x="441" y="399" width="1" height="1" fill="#00ffff"/>
<rect x="444" y="397" width="1" height="3" fill="#00ffff"/>
<rect x="445" y="399" width="1" height="1" fill="#00ffff"/>
<rect x="446" y="399" width="1" height="1" fill="#00ffff"/>
<rect x="447" y="399" width="1" height="1" fill="#00ffff"/>
<rect x="448" y="399" width="1" height="1" fill="#00ffff"/>
<rect x="449" y="399" width="1" height="1" fill="#00ffff"/>
<rect x="450" y="398" width="1" height="2" fill="#00ffff"/>
<rect x="452" y="396" width="1" height="4" fill="#00ffff"/>
<rect x="453" y="399" width="1" height="1" fill="#00ffff"/>
<rect x="454" y="398" width="1" height="2" fill="#00ffff"/>
<rect x="456" y="399" width="1" height="1" fill="#00ffff"/>
<rect x="457" y="396" width="1" height="4" fill="#00ffff"/>
<rect x="458" y="398" width="1" height="2" fill="#00ffff"/>
<rect x="459" y="399" width="1" height="1" fill="#00ffff"/>
<rect x="460" y="397" width="1" height="3" fill="#00ffff"/>
<rect x="462" y="398" width="1" height="2" fill="#00ffff"/>
<rect x="466" y="399" width="1" height="1" fill="#00ffff"/>
<rect x="468" y="399" width="1" height="1" fill="#00ffff"/>
<rect x="469" y="399" width="1" height="1" fill="#00ffff"/>
<rect x="472" y="398" width="1" height="2" fill="#00ffff"/>
<rect x="473" y="398" width="1" height="2" fill="#00ffff"/>
<rect x="474" y="398" width="1" height="2" fill="#00ffff"/>
<rect x="475" y="398" width="1" height="2" fill="#00ffff"/>
<rect x="477" y="398" width="1" height="2" fill="#00ffff"/>
<rect x="478" y="397" width="1" height="3" fill="#00ffff"/>
<rect x="479" y="397" width="1" height="3" fill="#00ffff"/>
<rect x="484" y="399" width="1" height="1" fill="#00ffff"/>
<rect x="485" y="398" width="1" height="2" fill="#00ffff"/>
<rect x="488" y="399" width="1" height="1" fill="#00ffff"/>
<rect x="489" y="399" width="1" height="1" fill="#00ffff"/>
<rect x="490" y="398" width="1" height="2" fill="#00ffff"/>
<rect x="494" y="399" width="1" height="1" fill="#00ffff"/>
<rect x="495" y="398" width="1" height="2" fill="#00ffff"/>
<rect x="496" y="399" width="1" height="1" fill="#00ffff"/>
<rect x="497" y="399" width="1" height="1" fill="#00ffff"/>
<rect x="498" y="399" width="1" height="1" fill="#00ffff"/>
<rect x="499" y="398" width="1" height="2" fill="#00ffff"/>
<rect x="500" y="398" width="1" height="2" fill="#00ffff"/>
<rect x="501" y="398" width="1" height="2" fill="#00ffff"/>
<rect x="502" y="398" width="1" height="2" fill="#00ffff"/>
<rect x="505" y="398" width="1" height="2" fill="#00ffff"/>
<rect x="506" y="397" width="1" height="3" fill="#00ffff"/>
<rect x="507" y="399" width="1" height="1" fill="#00ffff"/>
<rect x="509" y="399" width="1" height="1" fill="#00ffff"/>
<rect x="510" y="398" width="1" height="2" fill="#00ffff"/>
<rect x="511" y="397" width="1" height="3" fill="#00ffff"/>
<rect x="512" y="399" width="1" height="1" fill="#00ffff"/>
<rect x="513" y="398" width="1" height="2" fill="#00ffff"/>
<rect x="515" y="397" width="1" height="3" fill="#00ffff"/>
<rect x="516" y="398" width="1" height="2" fill="#00ffff"/>
<rect x="518" y="399" width="1" height="1" fill="#00ffff"/>
<rect x="519" y="399" width="1" height="1" fill="#00ffff"/>
<rect x="520" y="399" width="1" height="1" fill="#00ffff"/>
<rect x="521" y="398" width="1" height="2" fill="#00ffff"/>
<rect x="522" y="399" width="1" height="1" fill="#00ffff"/>
<rect x="523" y="399" width="1" height="1" fill="#00ffff"/>
<rect x="528" y="399" width="1" height="1" fill="#00ffff"/>
<rect x="529" y="398" width="1" height="2" fill="#00ffff"/>
<rect x="530" y="398" width="1" height="2" fill="#00ffff"/>
<rect x="532" y="399" width="1" height="1" fill="#00ffff"/>
<rect x="533" y="399" width="1" height="1" fill="#00ffff"/>
<rect x="534" y="398" width="1" height="2" fill="#00ffff"/>
<rect x="535" y="397" width="1" height="3" fill="#00ffff"/>
<rect x="536" y="399" width="1" height="1" fill="#00ffff"/>
<rect x="538" y="399" width="1" height="1" fill="#00ffff"/>
<rect x="539" y="399" width="1" height="1" fill="#00ffff"/>
<rect x="540" y="399" width="1" height="1" fill="#00ffff"/>
<rect x="542" y="399" width="1" height="1" fill="#00ffff"/>
<rect x="545" y="399" width="1" height="1" fill="#00ffff"/>
<rect x="549" y="398" width="1" height="2" fill="#00ffff"/>
<rect x="551" y="398" width="1" height="2" fill="#00ffff"/>
<rect x="552" y="399" width="1" height="1" fill="#00ffff"/>
<rect x="553" y="399" width="1" height="1" fill="#00ffff"/>
<rect x="555" y="397" width="1" height="3" fill="#00ffff"/>
<rect x="557" y="398" width="1" height="2" fill="#00ffff"/>
<rect x="558" y="399" width="1" height="1" fill="#00ffff"/>
<rect x="559" y="399" width="1" height="1" fill="#00ffff"/>
<rect x="560" y="397" width="1" height="3" fill="#00ffff"/>
<rect x="564" y="399" width="1" height="1" fill="#00ffff"/>
<rect x="565" y="399" width="1" height="1" fill="#00ffff"/>
<rect x="567" y="398" width="1" height="2" fill="#00ffff"/>
<rect x="568" y="399" width="1" height="1" fill="#00ffff"/>
<rect x="572" y="398" width="1" height="2" fill="#00ffff"/>
<rect x="574" y="399" width="1" height="1" fill="#00ffff"/>
<rect x="577" y="398" width="1" height="2" fill="#00ffff"/>
<rect x="579" y="399" width="1" height="1" fill="#00ffff"/>
<rect x="581" y="399" width="1" height="1" fill="#00ffff"/>
<rect x="582" y="398" width="1" height="2" fill="#00ffff"/>
<rect x="583" y="399" width="1" height="1" fill="#00ffff"/>
<rect x="584" y="398" width="1" height="2" fill="#00ffff"/>
<rect x="585" y="397" width="1" height="3" fill="#00ffff"/>
<rect x="586" y="399" width="1" height="1" fill="#00ffff"/>
<rect x="587" y="399" width="1" height="1" fill="#00ffff"/>
<rect x="588" y="398" width="1" height="2" fill="#00ffff"/>
<rect x="590" y="399" width="1" height="1" fill="#00ffff"/>
<rect x="593" y="398" width="1" height="2" fill="#00ffff"/>
<rect x="594" y="399" width="1" height="1" fill="#00ffff"/>
<rect x="597" y="398" width="1" height="2" fill="#00ffff"/>
<rect x="598" y="397" width="1" height="3" fill="#00ffff"/>
<rect x="600" y="399" width="1" height="1" fill="#00ffff"/>
<rect x="601" y="399" width="1" height="1" fill="#00ffff"/>
<rect x="603" y="398" width="1" height="2" fill="#00ffff"/>
<rect x="604" y="399" width="1" height="1" fill="#00ffff"/>
<rect x="606" y="399" width="1" height="1" fill="#00ffff"/>
<rect x="607" y="399" width="1" height="1" fill="#00ffff"/>
<rect x="608" y="398" width="1" height="2" fill="#00ffff"/>
<rect x="609" y="399" width="1" height="1" fill="#00ffff"/>
<rect x="610" y="398" width="1" height="2" fill="#00ffff"/>
<rect x="611" y="398" width="1" height="2" fill="#00ffff"/>
<rect x="612" y="399" width="1" height="1" fill="#00ffff"/>
<rect x="614" y="398" width="1" height="2" fill="#00ffff"/>
<rect x="615" y="398" width="1" height="2" fill="#00ffff"/>
<rect x="616" y="399" width="1" height="1" fill="#00ffff"/>
</svg>
</body></html>
